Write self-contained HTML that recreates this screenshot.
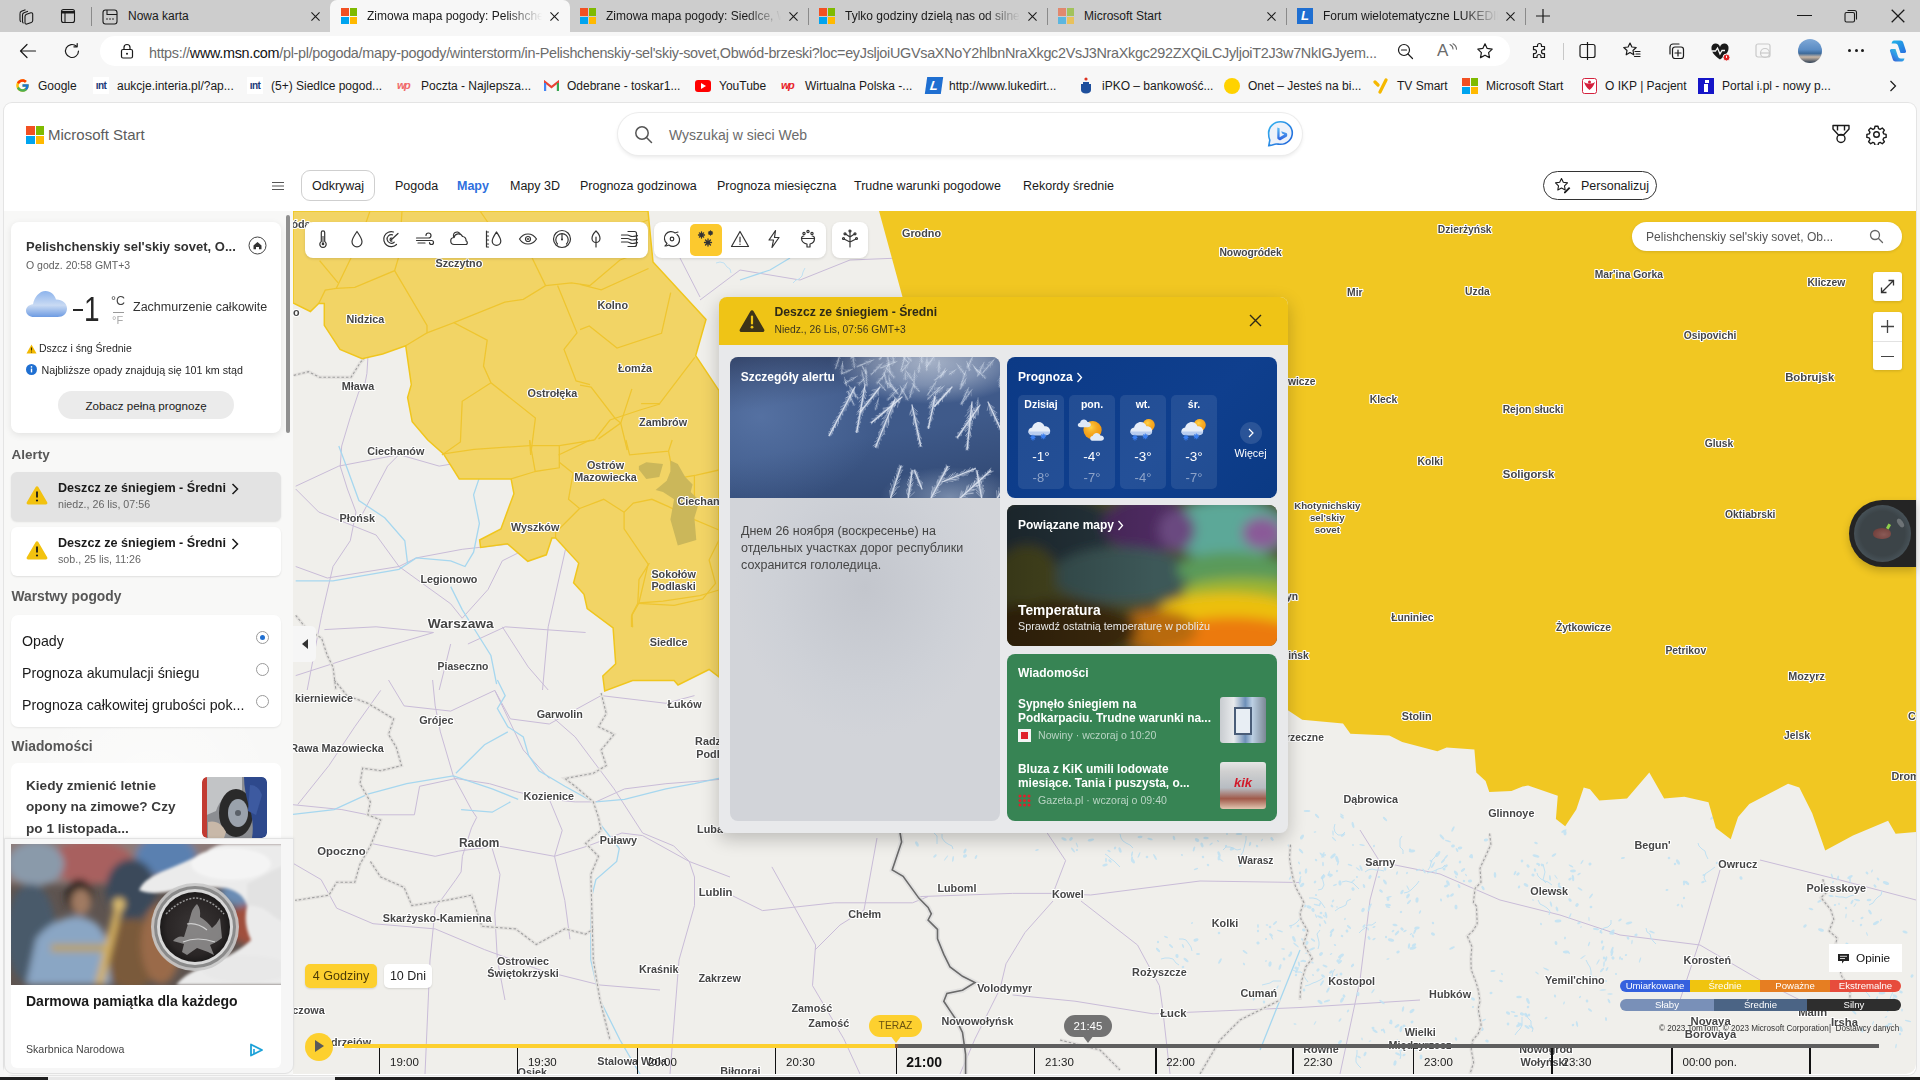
<!DOCTYPE html>
<html><head><meta charset="utf-8">
<style>
*{box-sizing:border-box;margin:0;padding:0}
html,body{width:1920px;height:1080px;overflow:hidden;background:#f7f7f7;font-family:"Liberation Sans",sans-serif;color:#1a1a1a}
.a{position:absolute;white-space:nowrap}
svg{display:block}
#tabs{position:absolute;left:0;top:0;width:1920px;height:32px;background:#cdcdcd}
.tab{position:absolute;white-space:nowrap;top:0;height:32px;font-size:12px;line-height:32px;color:#1a1a1a}
.sep{position:absolute;top:8px;width:1px;height:17px;background:#8a8a8a}
.x{position:absolute;top:9px;width:14px;height:14px}
.msl{position:absolute;width:16px;height:16px}
.msl i{position:absolute;width:7.5px;height:7.5px}
#bar{position:absolute;left:0;top:32px;width:1920px;height:71px;background:#f7f7f7}
#url{position:absolute;left:100px;top:4px;width:1410px;height:30px;background:#fff;border-radius:15px}
.bm{position:absolute;top:77px;font-size:12.5px;line-height:18px;color:#1a1a1a}
#page{position:absolute;left:4px;top:103px;width:1912px;height:972px;background:#fff;border-radius:8px 8px 8px 8px;overflow:hidden;box-shadow:0 0 0 1px #e4e4e4}
</style></head><body>
<div id="tabs">
<svg class="a" style="left:17px;top:7px" width="19" height="19" viewBox="0 0 19 19" fill="none" stroke="#1a1a1a" stroke-width="1.1"><path d="M3 6.5c0-1 .6-1.8 1.5-2.2l4-1.6"/><path d="M5.5 8c0-1 .6-1.8 1.5-2.2l4-1.6"/><path d="M8 9.5c0-1 .7-1.8 1.6-2.2l4.2-1.5c1-.3 1.9.3 1.9 1.3v6.3c0 .9-.6 1.7-1.4 2l-4.4 1.6c-1 .3-1.9-.3-1.9-1.3z"/><path d="M3 6.5v6.4c0 .8.4 1.5 1 1.9"/><path d="M5.5 8v6.4c0 .8.4 1.5 1 1.9"/></svg>
<svg class="a" style="left:60px;top:8px" width="16" height="16" viewBox="0 0 16 16" fill="none" stroke="#1a1a1a" stroke-width="1.1"><rect x="1.5" y="1.5" width="13" height="13" rx="2"/><path d="M1.5 4.2h13" stroke-width="2.6"/><path d="M5 4v10.5"/></svg>
<div class="sep" style="left:91px;top:7px;height:19px"></div>
<svg class="a" style="left:102px;top:9px" width="16" height="16" viewBox="0 0 16 16" fill="none" stroke="#1a1a1a" stroke-width="1.1"><rect x="1" y="1" width="14" height="14" rx="2.5"/><path d="M5 1v4.5h10"/><circle cx="5" cy="10" r=".8" fill="#1a1a1a" stroke="none"/><circle cx="8" cy="10" r=".8" fill="#1a1a1a" stroke="none"/><circle cx="11" cy="10" r=".8" fill="#1a1a1a" stroke="none"/></svg>
<div class="tab" style="left:128px">Nowa karta</div>
<svg class="a" style="left:311px;top:12px" width="9" height="9" viewBox="0 0 10 10"><path d="M0.5 0.5L9.5 9.5M9.5 0.5L0.5 9.5" stroke="#1a1a1a" stroke-width="1.2"/></svg>
<div class="a" style="left:330px;top:0;width:240px;height:33px;background:#f7f7f7;border-radius:7px 7px 0 0"></div>
<div class="msl" style="left:341px;top:8px;width:16px;height:16px;opacity:1"><i style="left:0;top:0;width:7.5px;height:7.5px;background:#f25022"></i><i style="left:8.5px;top:0;width:7.5px;height:7.5px;background:#7fba00"></i><i style="left:0;top:8.5px;width:7.5px;height:7.5px;background:#00a4ef"></i><i style="left:8.5px;top:8.5px;width:7.5px;height:7.5px;background:#ffb900"></i></div>
<div class="tab" style="left:367px;width:175px;overflow:hidden;-webkit-mask-image:linear-gradient(90deg,#000 80%,transparent)">Zimowa mapa pogody: Pelishchenskiy</div>
<svg class="a" style="left:550px;top:12px" width="9" height="9" viewBox="0 0 10 10"><path d="M0.5 0.5L9.5 9.5M9.5 0.5L0.5 9.5" stroke="#1a1a1a" stroke-width="1.2"/></svg>
<div class="msl" style="left:580px;top:8px;width:16px;height:16px;opacity:1"><i style="left:0;top:0;width:7.5px;height:7.5px;background:#f25022"></i><i style="left:8.5px;top:0;width:7.5px;height:7.5px;background:#7fba00"></i><i style="left:0;top:8.5px;width:7.5px;height:7.5px;background:#00a4ef"></i><i style="left:8.5px;top:8.5px;width:7.5px;height:7.5px;background:#ffb900"></i></div>
<div class="tab" style="left:606px;width:175px;overflow:hidden;-webkit-mask-image:linear-gradient(90deg,#000 80%,transparent)">Zimowa mapa pogody: Siedlce, Woj</div>
<svg class="a" style="left:789px;top:12px" width="9" height="9" viewBox="0 0 10 10"><path d="M0.5 0.5L9.5 9.5M9.5 0.5L0.5 9.5" stroke="#1a1a1a" stroke-width="1.2"/></svg>
<div class="sep" style="left:808px"></div>
<div class="msl" style="left:819px;top:8px;width:16px;height:16px;opacity:1"><i style="left:0;top:0;width:7.5px;height:7.5px;background:#f25022"></i><i style="left:8.5px;top:0;width:7.5px;height:7.5px;background:#7fba00"></i><i style="left:0;top:8.5px;width:7.5px;height:7.5px;background:#00a4ef"></i><i style="left:8.5px;top:8.5px;width:7.5px;height:7.5px;background:#ffb900"></i></div>
<div class="tab" style="left:845px;width:175px;overflow:hidden;-webkit-mask-image:linear-gradient(90deg,#000 80%,transparent)">Tylko godziny dzielą nas od silnej</div>
<svg class="a" style="left:1028px;top:12px" width="9" height="9" viewBox="0 0 10 10"><path d="M0.5 0.5L9.5 9.5M9.5 0.5L0.5 9.5" stroke="#1a1a1a" stroke-width="1.2"/></svg>
<div class="sep" style="left:1047px"></div>
<div class="msl" style="left:1058px;top:8px;width:16px;height:16px;opacity:0.55"><i style="left:0;top:0;width:7.5px;height:7.5px;background:#f25022"></i><i style="left:8.5px;top:0;width:7.5px;height:7.5px;background:#7fba00"></i><i style="left:0;top:8.5px;width:7.5px;height:7.5px;background:#00a4ef"></i><i style="left:8.5px;top:8.5px;width:7.5px;height:7.5px;background:#ffb900"></i></div>
<div class="tab" style="left:1084px">Microsoft Start</div>
<svg class="a" style="left:1267px;top:12px" width="9" height="9" viewBox="0 0 10 10"><path d="M0.5 0.5L9.5 9.5M9.5 0.5L0.5 9.5" stroke="#1a1a1a" stroke-width="1.2"/></svg>
<div class="sep" style="left:1286px"></div>
<div class="a" style="left:1297px;top:8px;width:16px;height:16px;background:#1f6fd1;color:#fff;font:bold italic 13px/16px 'Liberation Sans';text-align:center">L</div>
<div class="tab" style="left:1323px;width:175px;overflow:hidden;-webkit-mask-image:linear-gradient(90deg,#000 80%,transparent)">Forum wielotematyczne LUKEDIR</div>
<svg class="a" style="left:1506px;top:12px" width="9" height="9" viewBox="0 0 10 10"><path d="M0.5 0.5L9.5 9.5M9.5 0.5L0.5 9.5" stroke="#1a1a1a" stroke-width="1.2"/></svg>
<div class="sep" style="left:1525px"></div>
<svg class="a" style="left:1535px;top:8px" width="16" height="16" viewBox="0 0 16 16"><path d="M8 1v14M1 8h14" stroke="#1a1a1a" stroke-width="1.2"/></svg>
<div class="a" style="left:1797px;top:15px;width:15px;height:1.2px;background:#1a1a1a"></div>
<svg class="a" style="left:1844px;top:9px" width="14" height="14" viewBox="0 0 14 14" fill="none" stroke="#1a1a1a" stroke-width="1.1"><rect x="1" y="3.5" width="9.5" height="9.5" rx="1.5"/><path d="M3.5 1.5h7a2 2 0 0 1 2 2v7"/></svg>
<svg class="a" style="left:1891px;top:9px" width="14" height="14" viewBox="0 0 10 10"><path d="M0.5 0.5L9.5 9.5M9.5 0.5L0.5 9.5" stroke="#1a1a1a" stroke-width="0.9"/></svg>
</div>
<div id="bar">
<svg class="a" style="left:19px;top:10px" width="18" height="18" viewBox="0 0 18 18"><path d="M16.5 9H1.5M8 2.5L1.5 9L8 15.5" stroke="#1a1a1a" stroke-width="1.2" fill="none" stroke-linecap="round" stroke-linejoin="round"/></svg>
<svg class="a" style="left:63px;top:10px" width="18" height="18" viewBox="0 0 18 18"><path d="M15.5 9a6.5 6.5 0 1 1-2-4.7" stroke="#1a1a1a" stroke-width="1.2" fill="none" stroke-linecap="round" stroke-linejoin="round"/><path d="M14.2 1.5v3.3h-3.3" stroke="#1a1a1a" stroke-width="1.2" fill="none" stroke-linecap="round" stroke-linejoin="round"/></svg>
<div id="url">
<svg class="a" style="left:20px;top:7px" width="14" height="16" viewBox="0 0 14 16"><rect x="1.5" y="6.5" width="11" height="8.5" rx="1.5" stroke="#1a1a1a" stroke-width="1.2" fill="none" stroke-linecap="round" stroke-linejoin="round"/><path d="M4 6.5V4.5a3 3 0 0 1 6 0v2" stroke="#1a1a1a" stroke-width="1.2" fill="none" stroke-linecap="round" stroke-linejoin="round"/><circle cx="7" cy="10.8" r="1" fill="#1a1a1a"/></svg>
<div class="a" style="left:49px;top:1.5px;height:30px;line-height:30px;font-size:14.4px;letter-spacing:-0.3px;color:#6b6b6b">https://<span style="color:#111">www.msn.com</span>/pl-pl/pogoda/mapy-pogody/winterstorm/in-Pelishchenskiy-sel'skiy-sovet,Obwód-brzeski?loc=eyJsljoiUGVsaXNoY2hlbnNraXkgc2VsJ3NraXkgc292ZXQiLCJyljoiT2J3w7NkIGJyem...</div>
<svg class="a" style="left:1297px;top:7px" width="17" height="17" viewBox="0 0 17 17"><circle cx="7" cy="7" r="5.5" stroke="#1a1a1a" stroke-width="1.2" fill="none" stroke-linecap="round" stroke-linejoin="round" stroke="#6b6b6b"/><path d="M4.5 7h5M11 11l4.5 4.5" stroke="#1a1a1a" stroke-width="1.2" fill="none" stroke-linecap="round" stroke-linejoin="round" stroke="#6b6b6b"/></svg>
<div class="a" style="left:1337px;top:5px;font-size:17px;line-height:20px;color:#6b6b6b">A</div>
<svg class="a" style="left:1349px;top:7px" width="9" height="10" viewBox="0 0 9 10"><path d="M1 1.5c2 1 3 2.5 3 4.5M4 0.8c2.2 1.3 3.5 3 3.5 5.5" stroke="#6b6b6b" stroke-width="1.1" fill="none" stroke-linecap="round"/></svg>
<svg class="a" style="left:1376px;top:6px" width="18" height="18" viewBox="0 0 18 18"><path d="M9 1.8l2.2 4.6 5 .7-3.6 3.5.9 5-4.5-2.4-4.5 2.4.9-5L1.8 7.1l5-.7z" stroke="#1a1a1a" stroke-width="1.2" fill="none" stroke-linecap="round" stroke-linejoin="round" stroke="#555"/></svg>
</div>
<svg class="a" style="left:1530px;top:10px" width="19" height="19" viewBox="0 0 19 19"><path d="M7.5 3.5a2 2 0 0 1 4 0v1h3v3.2h-1a2 2 0 0 0 0 4h1v3.8h-3.5v-1a2 2 0 0 0-4 0v1H3.5v-3.8h1a2 2 0 0 0 0-4h-1V4.5h4z" stroke="#1a1a1a" stroke-width="1.2" fill="none" stroke-linecap="round" stroke-linejoin="round" stroke-width="1.3"/></svg>
<div class="a" style="left:1563px;top:11px;width:1px;height:17px;background:#c8c8c8"></div>
<svg class="a" style="left:1579px;top:10px" width="17" height="18" viewBox="0 0 17 18"><rect x="1" y="2.5" width="15" height="13" rx="2" stroke="#1a1a1a" stroke-width="1.2" fill="none" stroke-linecap="round" stroke-linejoin="round"/><path d="M8.5 0.5v17" stroke="#1a1a1a" stroke-width="1.2" fill="none" stroke-linecap="round" stroke-linejoin="round"/></svg>
<svg class="a" style="left:1622px;top:9px" width="20" height="20" viewBox="0 0 20 20"><path d="M8 2l1.9 4 4.3.5-3.2 3 .8 4.3L8 11.6l-3.8 2.2.8-4.3-3.2-3 4.3-.5z" stroke="#1a1a1a" stroke-width="1.2" fill="none" stroke-linecap="round" stroke-linejoin="round"/><path d="M13 10.5h5M14 13h4M12.5 15.5h5.5" stroke="#1a1a1a" stroke-width="1.2" fill="none" stroke-linecap="round" stroke-linejoin="round"/></svg>
<svg class="a" style="left:1667px;top:10px" width="19" height="19" viewBox="0 0 19 19"><path d="M3 12V5a3 3 0 0 1 3-3h6" stroke="#1a1a1a" stroke-width="1.2" fill="none" stroke-linecap="round" stroke-linejoin="round"/><rect x="5.5" y="5" width="11" height="11.5" rx="2.5" stroke="#1a1a1a" stroke-width="1.2" fill="none" stroke-linecap="round" stroke-linejoin="round"/><path d="M11 8v6M8 11h6" stroke="#1a1a1a" stroke-width="1.2" fill="none" stroke-linecap="round" stroke-linejoin="round"/></svg>
<svg class="a" style="left:1710px;top:10px" width="22" height="20" viewBox="0 0 22 20"><path d="M10 17.5C4 13 1.5 10 1.5 6.5a4.2 4.2 0 0 1 8.5-1.5a4.2 4.2 0 0 1 8.5 1.5c0 3.5-2.5 6.5-8.5 11z" fill="#1a1a1a"/><path d="M1.5 9h4l2-3 2.5 6 2-3.5h3" stroke="#f7f7f7" stroke-width="1.3" fill="none"/><circle cx="16.5" cy="15.5" r="3.5" fill="#e02020" stroke="#f7f7f7" stroke-width="1"/><path d="M16.5 13.7v2.2" stroke="#fff" stroke-width="1"/></svg>
<svg class="a" style="left:1755px;top:11px" width="18" height="17" viewBox="0 0 18 17" fill="none" stroke="#c9c9c9" stroke-width="1.2"><rect x="1" y="1" width="14" height="13" rx="2"/><circle cx="10" cy="10" r="4.5"/><path d="M5.5 10h9"/></svg>
<div class="a" style="left:1798px;top:7px;width:24px;height:24px;border-radius:50%;background:linear-gradient(180deg,#7fa8d6 0%,#5b8cc4 45%,#3d6a9a 60%,#c8b6a6 75%,#2d3f55 100%)"></div>
<div class="a" style="left:1847px;top:17px;width:18px;height:4px"><i style="position:absolute;left:1px;top:0;width:3px;height:3px;border-radius:50%;background:#1a1a1a"></i><i style="position:absolute;left:7.5px;top:0;width:3px;height:3px;border-radius:50%;background:#1a1a1a"></i><i style="position:absolute;left:14px;top:0;width:3px;height:3px;border-radius:50%;background:#1a1a1a"></i></div>
<svg class="a" style="left:1885px;top:6px" width="26" height="26" viewBox="0 0 26 26"><defs><linearGradient id="cp1" x1="0" y1="0" x2="1" y2="1"><stop offset="0" stop-color="#1fb6e8"/><stop offset="1" stop-color="#2a6fe0"/></linearGradient><linearGradient id="cp2" x1="1" y1="0" x2="0" y2="1"><stop offset="0" stop-color="#4bd6b0"/><stop offset=".5" stop-color="#2fa0e8"/><stop offset="1" stop-color="#3a4fd0"/></linearGradient></defs><path d="M9 2.5h6.5c1.4 0 2.3.8 2.7 2L21 13c.3 1-.4 2-1.5 2h-4l-2.5-7.5c-.4-1.2-1.4-2-2.7-2H6.5C7 3.7 7.8 2.5 9 2.5z" fill="url(#cp1)"/><path d="M17 23.5h-6.5c-1.4 0-2.3-.8-2.7-2L5 13c-.3-1 .4-2 1.5-2h4l2.5 7.5c.4 1.2 1.4 2 2.7 2h3.8c-.5 1.8-1.3 3-2.5 3z" fill="url(#cp2)"/></svg>
</div>
<svg class="a" style="left:15px;top:78px" width="15" height="15" viewBox="0 0 48 48"><path fill="#FFC107" d="M43.6 20H24v8h11.3C33.7 32.7 29.3 36 24 36c-6.6 0-12-5.4-12-12s5.4-12 12-12c3.1 0 5.8 1.2 7.9 3l5.7-5.7C34 6 29.3 4 24 4 13 4 4 13 4 24s9 20 20 20 20-9 20-20c0-1.3-.1-2.7-.4-4z"/><path fill="#FF3D00" d="M6.3 14.7l6.6 4.8C14.7 15.1 19 12 24 12c3.1 0 5.8 1.2 7.9 3l5.7-5.7C34 6 29.3 4 24 4 16.3 4 9.7 8.3 6.3 14.7z"/><path fill="#4CAF50" d="M24 44c5.2 0 9.9-2 13.4-5.2l-6.2-5.2C29.2 35.1 26.7 36 24 36c-5.2 0-9.6-3.3-11.3-8l-6.5 5C9.5 39.6 16.2 44 24 44z"/><path fill="#1976D2" d="M43.6 20H24v8h11.3c-.8 2.2-2.2 4.2-4.1 5.6l6.2 5.2C37 39.2 44 34 44 24c0-1.3-.1-2.7-.4-4z"/></svg><div class="a" style="left:38px;top:70px;height:33px;line-height:33px;font-size:12px;color:#1a1a1a">Google</div>
<div class="a" style="left:93px;top:77px;width:16px;height:17px;background:#fff;color:#1b3a7a;font:bold 10px/17px 'Liberation Sans';text-align:center;letter-spacing:-0.5px">ınt</div><div class="a" style="left:117px;top:70px;height:33px;line-height:33px;font-size:12px;color:#1a1a1a">aukcje.interia.pl/?ap...</div>
<div class="a" style="left:247px;top:77px;width:16px;height:17px;background:#fff;color:#1b3a7a;font:bold 10px/17px 'Liberation Sans';text-align:center;letter-spacing:-0.5px">ınt</div><div class="a" style="left:271px;top:70px;height:33px;line-height:33px;font-size:12px;color:#1a1a1a">(5+) Siedlce pogod...</div>
<div class="a" style="left:397px;top:77px;width:17px;height:17px;color:#f06a6a;font:bold italic 11px/17px 'Liberation Sans';letter-spacing:-1.5px">wp</div><div class="a" style="left:421px;top:70px;height:33px;line-height:33px;font-size:12px;color:#1a1a1a">Poczta - Najlepsza...</div>
<svg class="a" style="left:544px;top:80px" width="15" height="12" viewBox="0 0 15 12"><path d="M1 11V2l6.5 5L14 2v9" fill="none" stroke="#ea4335" stroke-width="2.2"/><path d="M1 11V3" stroke="#4285f4" stroke-width="2.2"/><path d="M14 11V3" stroke="#34a853" stroke-width="2.2"/></svg><div class="a" style="left:567px;top:70px;height:33px;line-height:33px;font-size:12px;color:#1a1a1a">Odebrane - toskar1...</div>
<div class="a" style="left:695px;top:80px;width:16px;height:12px;border-radius:3px;background:#f00"><i style="position:absolute;left:6px;top:3px;border-left:5px solid #fff;border-top:3px solid transparent;border-bottom:3px solid transparent"></i></div><div class="a" style="left:719px;top:70px;height:33px;line-height:33px;font-size:12px;color:#1a1a1a">YouTube</div>
<div class="a" style="left:781px;top:77px;width:17px;height:17px;color:#e8232a;font:bold italic 11px/17px 'Liberation Sans';letter-spacing:-1.5px">wp</div><div class="a" style="left:805px;top:70px;height:33px;line-height:33px;font-size:12px;color:#1a1a1a">Wirtualna Polska -...</div>
<div class="a" style="left:926px;top:77px;width:16px;height:17px;background:#1f6fd1;color:#fff;font:bold italic 13px/17px 'Liberation Sans';text-align:center;transform:skewX(-8deg)">L</div><div class="a" style="left:949px;top:70px;height:33px;line-height:33px;font-size:12px;color:#1a1a1a">http://www.lukedirt...</div>
<svg class="a" style="left:1079px;top:77px" width="14" height="17" viewBox="0 0 14 17"><circle cx="7" cy="2" r="1.6" fill="#d32"/><path d="M2 7h10v6c0 2-2 3.5-5 3.5S2 15 2 13z" fill="#1e4f9c"/><path d="M4 5h6v2H4z" fill="#1e4f9c"/></svg><div class="a" style="left:1102px;top:70px;height:33px;line-height:33px;font-size:12px;color:#1a1a1a">iPKO – bankowość...</div>
<div class="a" style="left:1224px;top:78px;width:16px;height:16px;border-radius:50%;background:#ffd200"></div><div class="a" style="left:1248px;top:70px;height:33px;line-height:33px;font-size:12px;color:#1a1a1a">Onet – Jesteś na bi...</div>
<svg class="a" style="left:1372px;top:78px" width="17" height="16" viewBox="0 0 17 16"><path d="M3 4l3 3M14 2L8 14" stroke="#f5b800" stroke-width="3.2" stroke-linecap="round"/></svg><div class="a" style="left:1397px;top:70px;height:33px;line-height:33px;font-size:12px;color:#1a1a1a">TV Smart</div>
<div class="msl" style="left:1462px;top:78px"><i style="left:0;top:0;background:#f25022"></i><i style="left:8.5px;top:0;background:#7fba00"></i><i style="left:0;top:8.5px;background:#00a4ef"></i><i style="left:8.5px;top:8.5px;background:#ffb900"></i></div><div class="a" style="left:1486px;top:70px;height:33px;line-height:33px;font-size:12px;color:#1a1a1a">Microsoft Start</div>
<svg class="a" style="left:1582px;top:78px" width="15" height="16" viewBox="0 0 15 16"><rect x="0.5" y="0.5" width="14" height="15" rx="2" fill="#fff" stroke="#d4213d"/><path d="M2 4c1 3 2 5 5.5 8C11 9 12 7 13 4c-1.5 1-3 1.5-5.5 1.5S3.5 5 2 4z" fill="#d4213d"/><circle cx="7.5" cy="4" r="1.5" fill="#d4213d"/></svg><div class="a" style="left:1605px;top:70px;height:33px;line-height:33px;font-size:12px;color:#1a1a1a">O IKP | Pacjent</div>
<div class="a" style="left:1698px;top:78px;width:16px;height:16px;background:#1515c8"><i style="position:absolute;left:6px;top:6px;width:4px;height:8px;background:#fff"></i><i style="position:absolute;left:7px;top:2px;width:4px;height:3px;background:#fff"></i></div><div class="a" style="left:1722px;top:70px;height:33px;line-height:33px;font-size:12px;color:#1a1a1a">Portal i.pl - nowy p...</div>
<svg class="a" style="left:1888px;top:80px" width="10" height="12" viewBox="0 0 10 12"><path d="M2.5 1l5 5-5 5" stroke="#1a1a1a" stroke-width="1.2" fill="none"/></svg>
<div id="page">
</div>
<div class="msl" style="left:26px;top:126px;width:18px;height:18px"><i style="left:0;top:0;width:8.5px;height:8.5px;background:#f25022"></i><i style="left:9.5px;top:0;width:8.5px;height:8.5px;background:#7fba00"></i><i style="left:0;top:9.5px;width:8.5px;height:8.5px;background:#00a4ef"></i><i style="left:9.5px;top:9.5px;width:8.5px;height:8.5px;background:#ffb900"></i></div>
<div class="a" style="left:48px;top:125px;font-size:15px;line-height:20px;color:#5c5c5c">Microsoft Start</div>
<div class="a" style="left:618px;top:113px;width:684px;height:42px;border-radius:21px;background:#fff;box-shadow:0 0 0 1px #ececec,0 2px 4px rgba(0,0,0,.10)"></div>
<svg class="a" style="left:634px;top:125px" width="19" height="19" viewBox="0 0 19 19"><circle cx="8" cy="8" r="6.2" stroke="#555" stroke-width="1.5" fill="none"/><path d="M12.5 12.5l5 5" stroke="#555" stroke-width="1.5" stroke-linecap="round"/></svg>
<div class="a" style="left:669px;top:125px;font-size:14px;line-height:20px;color:#6b6b6b">Wyszukaj w sieci Web</div>
<svg class="a" style="left:1266px;top:120px" width="28" height="29" viewBox="0 0 28 29"><defs><linearGradient id="bg1" x1="0" y1="0" x2="1" y2="1"><stop offset="0" stop-color="#36b5f0"/><stop offset="1" stop-color="#1f5fd8"/></linearGradient><linearGradient id="bg2" x1="0" y1="0" x2="0" y2="1"><stop offset="0" stop-color="#5fc0f5"/><stop offset="1" stop-color="#2c5fe0"/></linearGradient></defs><path d="M14.5 1.8c6.6 0 11.8 5 11.8 11.2s-5.2 11.3-11.8 11.3c-1.8 0-3-.4-4.4-.3-2 .1-4 1.2-7.3 1.6l1-5.5C2.6 18 2.6 15.6 2.6 13 2.6 6.8 7.9 1.8 14.5 1.8z" fill="#eef2fa" stroke="url(#bg1)" stroke-width="1.6"/><path d="M11.3 7.5l2.3.8v9l4.7-2.7-2.2-1 -.9-2.3 5.2 1.8c.5.2.8.6.8 1.1v1.4c0 .5-.3.9-.7 1.1l-5.7 3.3c-.5.3-1.1.3-1.6 0l-1.2-.8c-.4-.3-.7-.8-.7-1.3z" fill="url(#bg2)"/></svg>
<svg class="a" style="left:1831px;top:124px" width="20" height="20" viewBox="0 0 20 20" fill="none" stroke="#1a1a1a" stroke-width="1.4" stroke-linejoin="round"><path d="M2 1.5h16v3.5l-5.5 6h-5L2 5z"/><path d="M6.5 1.5v5M13.5 1.5v5"/><circle cx="10" cy="14.5" r="4"/></svg>
<svg class="a" style="left:1866px;top:124px" width="21" height="21" viewBox="0 0 24 24" fill="none" stroke="#1a1a1a" stroke-width="1.6"><circle cx="12" cy="12" r="3.2"/><path d="M10.3 2.5h3.4l.6 2.7 1.9.9 2.4-1.5 2.4 2.4-1.5 2.4.8 1.9 2.7.6v3.4l-2.7.6-.8 1.9 1.5 2.4-2.4 2.4-2.4-1.5-1.9.8-.6 2.7h-3.4l-.6-2.7-1.9-.8-2.4 1.5-2.4-2.4 1.5-2.4-.8-1.9-2.7-.6v-3.4l2.7-.6.8-1.9-1.5-2.4 2.4-2.4 2.4 1.5 1.9-.9z" stroke-linejoin="round"/></svg>
<svg class="a" style="left:271px;top:181px" width="14" height="10" viewBox="0 0 14 10"><path d="M1 1.5h12M1 5h12M1 8.5h12" stroke="#555" stroke-width="1"/></svg>
<div class="a" style="left:301px;top:170px;width:74px;height:31px;border:1px solid #cfcfcf;border-radius:9px"></div>
<div class="a" style="left:312px;top:177px;font-size:12.5px;line-height:18px;color:#1a1a1a;font-weight:400">Odkrywaj</div>
<div class="a" style="left:395px;top:177px;font-size:12.5px;line-height:18px;color:#1a1a1a;font-weight:400">Pogoda</div>
<div class="a" style="left:457px;top:177px;font-size:12.5px;line-height:18px;color:#2f6fde;font-weight:700">Mapy</div>
<div class="a" style="left:510px;top:177px;font-size:12.5px;line-height:18px;color:#1a1a1a;font-weight:400">Mapy 3D</div>
<div class="a" style="left:580px;top:177px;font-size:12.5px;line-height:18px;color:#1a1a1a;font-weight:400">Prognoza godzinowa</div>
<div class="a" style="left:717px;top:177px;font-size:12.5px;line-height:18px;color:#1a1a1a;font-weight:400">Prognoza miesięczna</div>
<div class="a" style="left:854px;top:177px;font-size:12.5px;line-height:18px;color:#1a1a1a;font-weight:400">Trudne warunki pogodowe</div>
<div class="a" style="left:1023px;top:177px;font-size:12.5px;line-height:18px;color:#1a1a1a;font-weight:400">Rekordy średnie</div>
<div class="a" style="left:1543px;top:171px;width:114px;height:29px;border:1px solid #333;border-radius:15px"></div>
<svg class="a" style="left:1554px;top:177px" width="17" height="17" viewBox="0 0 17 17"><path d="M7.5 1.5l1.8 3.8 4.2.6-3 3 .7 4.1-3.7-2-3.7 2 .7-4.1-3-3 4.2-.6z" fill="none" stroke="#1a1a1a" stroke-width="1.1" stroke-linejoin="round"/><path d="M10 15l5-5 1.3 1.3-5 5H10z" fill="#1a1a1a"/></svg>
<div class="a" style="left:1581px;top:177px;font-size:12.5px;line-height:18px;color:#1a1a1a">Personalizuj</div>
<div class="a" style="left:293px;top:211px;width:1623px;height:863px;overflow:hidden;border-radius:0 0 10px 0;background:#f0efeb">
<svg width="1623" height="863" viewBox="293 211 1623 863" style="position:absolute;left:0;top:0">
<g id="roads" fill="none" stroke="#c9bcd8" stroke-width="1"><path d="M432.6 680.0 L435.2 705.9 L440.4 731.9 L453.3 775.9 L471.5 809.6 L476.7 817.4 L471.5 827.8 L462.4 856.3 L461.1 871.9 L455.9 879.6 L435.2 908.2 L430.0 960.0 L425.0 1074.0"/><path d="M370.4 843.3 L435.2 856.3 L458.5 851.1 L497.4 845.9 L554.5 856.3 L588.2 845.9 L621.9 833.0 L642.6 835.6 L689.3 861.5 L730.0 877.0"/><path d="M455.9 778.5 L489.6 783.7 L515.6 791.5 L549.3 799.3 L575.2 801.9 L595.9 801.9 L624.5 788.9 L665.9 783.7 L699.6 781.1 L730.0 778.5"/><path d="M494.8 690.4 L523.3 750.0 L549.3 778.5"/><path d="M554.5 718.9 L575.2 737.0 L614.1 788.9 L642.6 833.0 L673.7 845.9 L689.3 861.5 L694.5 877.0 L694.5 905.6 L679.0 960.0 L670.0 1074.0"/><path d="M494.8 690.4 L510.4 718.9 L549.3 724.0 L601.1 695.6 L666.0 703.3 L694.5 695.6"/><path d="M380.7 690.4 L354.8 726.7 L328.9 765.6 L297.8 804.4"/><path d="M290.0 804.4 L341.9 809.6 L367.8 814.8 L414.4 814.8 L419.6 786.3 L455.9 778.5"/><path d="M290.0 861.5 L321.1 879.6 L336.7 908.2 L373.0 923.7 L435.2 928.9 L484.5 949.6 L540.0 970.0 L600.0 985.0 L660.0 990.0"/><path d="M388.5 680.0 L404.1 705.9 L450.7 711.1 L494.8 690.4"/><path d="M549.3 799.3 L562.2 830.4 L554.5 856.3 L564.8 900.4 L570.0 939.3"/><path d="M492.2 848.5 L500.0 874.5 L494.8 913.3 L497.4 960.0 L505.0 1000.0"/><path d="M366.9 373.5 L364.1 388.3 L358.9 391.5 L350.3 417.3 L341.7 446.0 L340.2 466.1 L347.4 489.0 L356.0 512.0 L350.3 540.7 L333.0 566.5 L321.6 615.3 L307.2 690.0"/><path d="M295.7 486.2 L338.8 466.1 L399.0 454.6 L439.2 466.1 L456.4 463.2"/><path d="M295.7 489.0 L318.7 512.0 L376.1 535.0 L399.0 566.5 L450.7 603.8 L462.2 618.2"/><path d="M358.9 520.6 L387.6 466.1 L399.0 454.6"/><path d="M295.7 566.5 L327.3 578.0 L399.0 566.5 L416.3 557.9 L462.2 549.3 L513.8 543.6"/><path d="M462.2 618.2 L488.0 589.5 L502.3 560.8 L519.6 552.2"/><path d="M467.9 644.0 L505.2 626.8 L585.6 632.5"/><path d="M433.5 632.5 L376.1 649.7 L295.7 675.6"/><path d="M324.4 629.6 L376.1 626.8 L433.5 632.5"/><path d="M450.7 644.0 L439.2 690.0"/><path d="M502.3 626.8 L528.2 666.9 L548.2 690.0"/><path d="M565.5 549.3 L548.2 626.8 L542.5 690.0"/><path d="M366.9 373.5 L369.0 340.0 L375.0 315.0 L380.0 290.0"/><path d="M918.8 896.6 L1012.5 893.4 L1053.0 893.4 L1090.6 895.0 L1200.0 881.0 L1300.0 882.5"/><path d="M731.0 895.0 L762.5 910.6 L834.4 902.8 L912.5 902.8 L928.0 896.6"/><path d="M1053.0 893.4 L1065.6 860.6 L1046.9 832.5"/><path d="M1053.0 901.0 L1025.0 932.5 L1006.0 963.8 L1000.0 988.8 L975.0 1038.8 L960.0 1074.0"/><path d="M1081.0 901.0 L1137.5 945.0 L1159.4 985.6 L1162.5 1007.5 L1170.0 1074.0"/><path d="M1012.5 995.0 L1075.0 1001.2 L1153.0 1013.8 L1300.0 1007.5 L1420.0 1000.0"/><path d="M771.9 866.9 L815.6 945.0 L812.5 985.6 L843.8 1038.8 L860.0 1074.0"/><path d="M877.0 838.0 L864.0 910.0 L840.0 925.0 L815.0 950.0"/><path d="M1360.0 830.0 L1380.0 862.0 L1370.0 900.0 L1360.0 980.0 L1340.0 1074.0"/><path d="M1380.0 862.0 L1440.0 874.0 L1500.0 900.0 L1560.0 915.0 L1620.0 935.0 L1700.0 945.0 L1760.0 980.0 L1800.0 1000.0"/><path d="M1720.0 870.0 L1700.0 940.0 L1680.0 1000.0"/><path d="M1760.0 860.0 L1840.0 880.0 L1916.0 900.0"/><path d="M700.0 300.0 L740.0 270.0 L800.0 280.0 L850.0 260.0 L900.0 258.0"/><path d="M680.0 258.0 L700.0 297.0"/></g><g fill="#c2e2f3" opacity=".9"><ellipse cx="1349" cy="927" rx="2.6" ry="1.1" transform="rotate(39 1349 927)"/><ellipse cx="1342" cy="817" rx="2.3" ry="1.1" transform="rotate(42 1342 817)"/><ellipse cx="1353" cy="881" rx="2.5" ry="0.7" transform="rotate(143 1353 881)"/><ellipse cx="1332" cy="906" rx="1.1" ry="1.6" transform="rotate(133 1332 906)"/><ellipse cx="1353" cy="845" rx="1.1" ry="0.9" transform="rotate(90 1353 845)"/><ellipse cx="1374" cy="939" rx="1.9" ry="0.8" transform="rotate(147 1374 939)"/><ellipse cx="1369" cy="938" rx="2.1" ry="1.2" transform="rotate(62 1369 938)"/><ellipse cx="1315" cy="882" rx="1.1" ry="1.5" transform="rotate(42 1315 882)"/><ellipse cx="1333" cy="856" rx="3.4" ry="1.5" transform="rotate(136 1333 856)"/><ellipse cx="1333" cy="833" rx="2.8" ry="0.7" transform="rotate(86 1333 833)"/><ellipse cx="1337" cy="859" rx="3.3" ry="1.5" transform="rotate(74 1337 859)"/><ellipse cx="1313" cy="910" rx="2.0" ry="1.6" transform="rotate(70 1313 910)"/><ellipse cx="1340" cy="883" rx="2.8" ry="1.6" transform="rotate(89 1340 883)"/><ellipse cx="1300" cy="882" rx="2.9" ry="0.8" transform="rotate(110 1300 882)"/><ellipse cx="1299" cy="863" rx="1.5" ry="0.8" transform="rotate(63 1299 863)"/><ellipse cx="1350" cy="865" rx="2.5" ry="0.9" transform="rotate(19 1350 865)"/><ellipse cx="1370" cy="906" rx="2.9" ry="1.0" transform="rotate(123 1370 906)"/><ellipse cx="1307" cy="811" rx="3.4" ry="1.0" transform="rotate(178 1307 811)"/><ellipse cx="1361" cy="868" rx="3.2" ry="1.1" transform="rotate(68 1361 868)"/><ellipse cx="1331" cy="954" rx="1.4" ry="0.7" transform="rotate(145 1331 954)"/><ellipse cx="1334" cy="839" rx="3.1" ry="0.7" transform="rotate(46 1334 839)"/><ellipse cx="1324" cy="916" rx="1.4" ry="0.7" transform="rotate(61 1324 916)"/><ellipse cx="1385" cy="819" rx="2.9" ry="1.1" transform="rotate(45 1385 819)"/><ellipse cx="1358" cy="869" rx="2.8" ry="0.6" transform="rotate(38 1358 869)"/><ellipse cx="1353" cy="825" rx="3.2" ry="1.2" transform="rotate(77 1353 825)"/><ellipse cx="1289" cy="846" rx="1.8" ry="1.1" transform="rotate(50 1289 846)"/><ellipse cx="1330" cy="875" rx="2.7" ry="1.6" transform="rotate(4 1330 875)"/><ellipse cx="1301" cy="851" rx="3.1" ry="1.2" transform="rotate(46 1301 851)"/><ellipse cx="1280" cy="931" rx="3.3" ry="0.7" transform="rotate(17 1280 931)"/><ellipse cx="1335" cy="885" rx="2.1" ry="0.7" transform="rotate(156 1335 885)"/><ellipse cx="1323" cy="864" rx="2.3" ry="0.9" transform="rotate(89 1323 864)"/><ellipse cx="1333" cy="901" rx="1.5" ry="1.0" transform="rotate(128 1333 901)"/><ellipse cx="1323" cy="877" rx="2.8" ry="1.5" transform="rotate(139 1323 877)"/><ellipse cx="1331" cy="876" rx="2.2" ry="0.7" transform="rotate(138 1331 876)"/><ellipse cx="1347" cy="931" rx="1.6" ry="1.3" transform="rotate(56 1347 931)"/><ellipse cx="1353" cy="889" rx="1.8" ry="1.5" transform="rotate(53 1353 889)"/><ellipse cx="1300" cy="879" rx="3.4" ry="0.7" transform="rotate(108 1300 879)"/><ellipse cx="1291" cy="877" rx="3.4" ry="0.9" transform="rotate(126 1291 877)"/><ellipse cx="1300" cy="873" rx="1.2" ry="1.4" transform="rotate(176 1300 873)"/><ellipse cx="1317" cy="905" rx="3.5" ry="0.7" transform="rotate(14 1317 905)"/><ellipse cx="1369" cy="909" rx="2.9" ry="1.0" transform="rotate(112 1369 909)"/><ellipse cx="1364" cy="886" rx="2.1" ry="1.1" transform="rotate(70 1364 886)"/><ellipse cx="1316" cy="895" rx="1.1" ry="1.0" transform="rotate(44 1316 895)"/><ellipse cx="1317" cy="816" rx="2.8" ry="1.1" transform="rotate(43 1317 816)"/><ellipse cx="1309" cy="907" rx="2.6" ry="1.6" transform="rotate(15 1309 907)"/><ellipse cx="1302" cy="885" rx="2.8" ry="1.5" transform="rotate(140 1302 885)"/><ellipse cx="1302" cy="837" rx="2.7" ry="1.5" transform="rotate(126 1302 837)"/><ellipse cx="1323" cy="855" rx="3.3" ry="1.0" transform="rotate(111 1323 855)"/><ellipse cx="1358" cy="797" rx="3.5" ry="0.6" transform="rotate(56 1358 797)"/><ellipse cx="1321" cy="913" rx="1.4" ry="1.2" transform="rotate(14 1321 913)"/><ellipse cx="1311" cy="962" rx="2.9" ry="1.1" transform="rotate(19 1311 962)"/><ellipse cx="1366" cy="865" rx="1.5" ry="0.9" transform="rotate(115 1366 865)"/><ellipse cx="1322" cy="855" rx="3.4" ry="0.9" transform="rotate(46 1322 855)"/><ellipse cx="1338" cy="863" rx="2.7" ry="0.8" transform="rotate(108 1338 863)"/><ellipse cx="1326" cy="915" rx="3.4" ry="1.1" transform="rotate(79 1326 915)"/><ellipse cx="1316" cy="860" rx="1.4" ry="1.0" transform="rotate(49 1316 860)"/><ellipse cx="1353" cy="965" rx="1.1" ry="1.4" transform="rotate(168 1353 965)"/><ellipse cx="1329" cy="873" rx="2.3" ry="0.6" transform="rotate(109 1329 873)"/><ellipse cx="1325" cy="855" rx="1.0" ry="1.1" transform="rotate(17 1325 855)"/><ellipse cx="1320" cy="917" rx="3.2" ry="1.0" transform="rotate(24 1320 917)"/><ellipse cx="1342" cy="815" rx="2.3" ry="0.6" transform="rotate(34 1342 815)"/><ellipse cx="1305" cy="906" rx="1.6" ry="1.4" transform="rotate(152 1305 906)"/><ellipse cx="1374" cy="846" rx="1.0" ry="1.2" transform="rotate(14 1374 846)"/><ellipse cx="1362" cy="845" rx="2.9" ry="0.8" transform="rotate(11 1362 845)"/><ellipse cx="1343" cy="835" rx="2.6" ry="1.1" transform="rotate(144 1343 835)"/><ellipse cx="1320" cy="904" rx="1.9" ry="0.9" transform="rotate(113 1320 904)"/><ellipse cx="1337" cy="871" rx="1.2" ry="1.1" transform="rotate(122 1337 871)"/><ellipse cx="1337" cy="907" rx="1.1" ry="0.6" transform="rotate(89 1337 907)"/><ellipse cx="1315" cy="832" rx="1.4" ry="0.7" transform="rotate(168 1315 832)"/><ellipse cx="1306" cy="871" rx="2.7" ry="1.3" transform="rotate(94 1306 871)"/><ellipse cx="1355" cy="981" rx="1.5" ry="0.6" transform="rotate(63 1355 981)"/><ellipse cx="1291" cy="953" rx="1.4" ry="1.3" transform="rotate(89 1291 953)"/><ellipse cx="1342" cy="1000" rx="3.0" ry="1.5" transform="rotate(122 1342 1000)"/><ellipse cx="1327" cy="1001" rx="3.3" ry="1.1" transform="rotate(164 1327 1001)"/><ellipse cx="1341" cy="956" rx="3.4" ry="1.5" transform="rotate(143 1341 956)"/><ellipse cx="1340" cy="962" rx="2.5" ry="1.2" transform="rotate(136 1340 962)"/><ellipse cx="1312" cy="949" rx="3.3" ry="1.1" transform="rotate(159 1312 949)"/><ellipse cx="1340" cy="1042" rx="2.4" ry="1.4" transform="rotate(133 1340 1042)"/><ellipse cx="1335" cy="945" rx="1.2" ry="1.0" transform="rotate(32 1335 945)"/><ellipse cx="1283" cy="949" rx="1.9" ry="0.7" transform="rotate(5 1283 949)"/><ellipse cx="1296" cy="975" rx="1.1" ry="1.3" transform="rotate(38 1296 975)"/><ellipse cx="1358" cy="994" rx="2.3" ry="1.5" transform="rotate(93 1358 994)"/><ellipse cx="1331" cy="972" rx="2.1" ry="1.2" transform="rotate(139 1331 972)"/><ellipse cx="1320" cy="925" rx="1.6" ry="1.0" transform="rotate(68 1320 925)"/><ellipse cx="1304" cy="961" rx="2.3" ry="1.1" transform="rotate(6 1304 961)"/><ellipse cx="1332" cy="931" rx="3.0" ry="1.3" transform="rotate(132 1332 931)"/><ellipse cx="1340" cy="959" rx="2.0" ry="0.6" transform="rotate(120 1340 959)"/><ellipse cx="1296" cy="945" rx="3.5" ry="0.8" transform="rotate(41 1296 945)"/><ellipse cx="1316" cy="916" rx="2.2" ry="0.7" transform="rotate(67 1316 916)"/><ellipse cx="1331" cy="935" rx="2.2" ry="1.0" transform="rotate(113 1331 935)"/><ellipse cx="1294" cy="939" rx="3.2" ry="1.4" transform="rotate(67 1294 939)"/><ellipse cx="1320" cy="1002" rx="3.0" ry="1.5" transform="rotate(36 1320 1002)"/><ellipse cx="1345" cy="919" rx="1.2" ry="0.9" transform="rotate(114 1345 919)"/><ellipse cx="1344" cy="996" rx="1.7" ry="1.3" transform="rotate(53 1344 996)"/><ellipse cx="1323" cy="976" rx="2.2" ry="1.3" transform="rotate(39 1323 976)"/><ellipse cx="1313" cy="940" rx="2.6" ry="1.0" transform="rotate(35 1313 940)"/><ellipse cx="1325" cy="966" rx="2.7" ry="1.0" transform="rotate(22 1325 966)"/><ellipse cx="1342" cy="936" rx="1.1" ry="1.3" transform="rotate(107 1342 936)"/><ellipse cx="1297" cy="970" rx="3.4" ry="1.0" transform="rotate(115 1297 970)"/><ellipse cx="1307" cy="943" rx="1.9" ry="1.4" transform="rotate(114 1307 943)"/><ellipse cx="1296" cy="968" rx="1.6" ry="1.4" transform="rotate(4 1296 968)"/><ellipse cx="1306" cy="939" rx="1.6" ry="1.2" transform="rotate(105 1306 939)"/><ellipse cx="1341" cy="974" rx="1.4" ry="1.4" transform="rotate(59 1341 974)"/><ellipse cx="1313" cy="975" rx="1.1" ry="0.8" transform="rotate(27 1313 975)"/><ellipse cx="1291" cy="927" rx="1.6" ry="0.7" transform="rotate(96 1291 927)"/><ellipse cx="1336" cy="976" rx="2.9" ry="0.8" transform="rotate(126 1336 976)"/><ellipse cx="1311" cy="958" rx="1.6" ry="1.2" transform="rotate(17 1311 958)"/><ellipse cx="1328" cy="990" rx="3.0" ry="1.1" transform="rotate(119 1328 990)"/><ellipse cx="1338" cy="961" rx="1.8" ry="1.5" transform="rotate(64 1338 961)"/><ellipse cx="1321" cy="954" rx="2.2" ry="1.5" transform="rotate(139 1321 954)"/><ellipse cx="1308" cy="953" rx="3.3" ry="0.7" transform="rotate(174 1308 953)"/><ellipse cx="1325" cy="922" rx="2.3" ry="0.8" transform="rotate(61 1325 922)"/><ellipse cx="1304" cy="930" rx="2.0" ry="1.4" transform="rotate(10 1304 930)"/><ellipse cx="1318" cy="970" rx="1.8" ry="1.4" transform="rotate(136 1318 970)"/><ellipse cx="1331" cy="977" rx="1.3" ry="1.3" transform="rotate(80 1331 977)"/><ellipse cx="1322" cy="983" rx="3.2" ry="1.0" transform="rotate(124 1322 983)"/><ellipse cx="1303" cy="940" rx="2.4" ry="1.0" transform="rotate(36 1303 940)"/><ellipse cx="1302" cy="961" rx="1.8" ry="0.8" transform="rotate(164 1302 961)"/><ellipse cx="1307" cy="967" rx="1.1" ry="0.8" transform="rotate(156 1307 967)"/><ellipse cx="1304" cy="990" rx="1.6" ry="1.3" transform="rotate(81 1304 990)"/><ellipse cx="1397" cy="873" rx="1.9" ry="0.9" transform="rotate(107 1397 873)"/><ellipse cx="1418" cy="870" rx="2.2" ry="0.9" transform="rotate(160 1418 870)"/><ellipse cx="1408" cy="896" rx="2.7" ry="1.4" transform="rotate(122 1408 896)"/><ellipse cx="1448" cy="896" rx="1.6" ry="1.6" transform="rotate(59 1448 896)"/><ellipse cx="1352" cy="966" rx="1.4" ry="1.0" transform="rotate(113 1352 966)"/><ellipse cx="1397" cy="933" rx="3.0" ry="1.2" transform="rotate(134 1397 933)"/><ellipse cx="1412" cy="851" rx="3.2" ry="1.4" transform="rotate(176 1412 851)"/><ellipse cx="1363" cy="910" rx="2.3" ry="1.6" transform="rotate(118 1363 910)"/><ellipse cx="1368" cy="929" rx="1.7" ry="0.7" transform="rotate(70 1368 929)"/><ellipse cx="1401" cy="912" rx="1.2" ry="1.1" transform="rotate(137 1401 912)"/><ellipse cx="1433" cy="923" rx="1.3" ry="1.1" transform="rotate(53 1433 923)"/><ellipse cx="1364" cy="926" rx="2.0" ry="1.0" transform="rotate(131 1364 926)"/><ellipse cx="1417" cy="928" rx="2.8" ry="1.4" transform="rotate(176 1417 928)"/><ellipse cx="1398" cy="952" rx="1.8" ry="1.3" transform="rotate(152 1398 952)"/><ellipse cx="1415" cy="931" rx="3.3" ry="1.0" transform="rotate(114 1415 931)"/><ellipse cx="1408" cy="888" rx="3.0" ry="0.6" transform="rotate(61 1408 888)"/><ellipse cx="1411" cy="934" rx="1.5" ry="0.6" transform="rotate(145 1411 934)"/><ellipse cx="1414" cy="945" rx="2.4" ry="1.4" transform="rotate(152 1414 945)"/><ellipse cx="1389" cy="897" rx="2.9" ry="0.7" transform="rotate(167 1389 897)"/><ellipse cx="1393" cy="931" rx="1.5" ry="1.0" transform="rotate(142 1393 931)"/><ellipse cx="1424" cy="871" rx="2.8" ry="0.8" transform="rotate(58 1424 871)"/><ellipse cx="1391" cy="940" rx="3.2" ry="1.6" transform="rotate(15 1391 940)"/><ellipse cx="1452" cy="895" rx="2.2" ry="1.3" transform="rotate(141 1452 895)"/><ellipse cx="1413" cy="948" rx="3.5" ry="1.5" transform="rotate(164 1413 948)"/><ellipse cx="1433" cy="934" rx="2.2" ry="1.5" transform="rotate(30 1433 934)"/><ellipse cx="1388" cy="905" rx="3.0" ry="1.3" transform="rotate(6 1388 905)"/><ellipse cx="1395" cy="925" rx="2.6" ry="1.2" transform="rotate(11 1395 925)"/><ellipse cx="1459" cy="886" rx="2.1" ry="1.2" transform="rotate(65 1459 886)"/><ellipse cx="1381" cy="891" rx="2.1" ry="1.3" transform="rotate(34 1381 891)"/><ellipse cx="1388" cy="959" rx="1.6" ry="0.7" transform="rotate(164 1388 959)"/><ellipse cx="1413" cy="936" rx="1.8" ry="0.9" transform="rotate(63 1413 936)"/><ellipse cx="1388" cy="907" rx="2.3" ry="0.7" transform="rotate(14 1388 907)"/><ellipse cx="1405" cy="931" rx="1.9" ry="0.9" transform="rotate(151 1405 931)"/><ellipse cx="1385" cy="882" rx="2.9" ry="1.3" transform="rotate(57 1385 882)"/><ellipse cx="1370" cy="877" rx="2.3" ry="1.4" transform="rotate(114 1370 877)"/><ellipse cx="1417" cy="900" rx="2.7" ry="1.6" transform="rotate(95 1417 900)"/><ellipse cx="1409" cy="902" rx="2.8" ry="0.9" transform="rotate(135 1409 902)"/><ellipse cx="1374" cy="927" rx="1.6" ry="0.9" transform="rotate(156 1374 927)"/><ellipse cx="1379" cy="877" rx="1.3" ry="0.9" transform="rotate(174 1379 877)"/><ellipse cx="1409" cy="946" rx="2.7" ry="1.1" transform="rotate(100 1409 946)"/><ellipse cx="1441" cy="900" rx="1.6" ry="1.0" transform="rotate(76 1441 900)"/><ellipse cx="1385" cy="869" rx="1.7" ry="1.3" transform="rotate(78 1385 869)"/><ellipse cx="1420" cy="912" rx="1.9" ry="0.8" transform="rotate(121 1420 912)"/><ellipse cx="1456" cy="907" rx="2.6" ry="1.5" transform="rotate(88 1456 907)"/><ellipse cx="1357" cy="877" rx="1.1" ry="1.0" transform="rotate(67 1357 877)"/><ellipse cx="1386" cy="937" rx="1.1" ry="1.3" transform="rotate(172 1386 937)"/><ellipse cx="1402" cy="929" rx="1.8" ry="1.4" transform="rotate(41 1402 929)"/><ellipse cx="1402" cy="892" rx="2.5" ry="1.3" transform="rotate(121 1402 892)"/><ellipse cx="1452" cy="948" rx="3.1" ry="1.1" transform="rotate(155 1452 948)"/><ellipse cx="1388" cy="899" rx="2.0" ry="1.4" transform="rotate(83 1388 899)"/><ellipse cx="1460" cy="862" rx="1.5" ry="1.2" transform="rotate(116 1460 862)"/><ellipse cx="1433" cy="865" rx="3.4" ry="0.9" transform="rotate(121 1433 865)"/><ellipse cx="1456" cy="877" rx="1.4" ry="0.7" transform="rotate(61 1456 877)"/><ellipse cx="1463" cy="870" rx="2.6" ry="1.1" transform="rotate(143 1463 870)"/><ellipse cx="1443" cy="861" rx="2.8" ry="1.0" transform="rotate(135 1443 861)"/><ellipse cx="1472" cy="857" rx="1.6" ry="1.0" transform="rotate(90 1472 857)"/><ellipse cx="1446" cy="866" rx="2.0" ry="1.3" transform="rotate(147 1446 866)"/><ellipse cx="1453" cy="829" rx="3.0" ry="1.0" transform="rotate(116 1453 829)"/><ellipse cx="1480" cy="869" rx="2.8" ry="0.9" transform="rotate(85 1480 869)"/><ellipse cx="1446" cy="886" rx="2.1" ry="1.4" transform="rotate(166 1446 886)"/><ellipse cx="1453" cy="846" rx="1.9" ry="1.5" transform="rotate(163 1453 846)"/><ellipse cx="1456" cy="873" rx="3.0" ry="1.4" transform="rotate(51 1456 873)"/><ellipse cx="1407" cy="873" rx="1.2" ry="0.9" transform="rotate(120 1407 873)"/><ellipse cx="1486" cy="840" rx="2.2" ry="1.4" transform="rotate(175 1486 840)"/><ellipse cx="1444" cy="869" rx="1.6" ry="1.4" transform="rotate(25 1444 869)"/><ellipse cx="1410" cy="850" rx="1.5" ry="1.2" transform="rotate(95 1410 850)"/><ellipse cx="1471" cy="856" rx="2.2" ry="1.5" transform="rotate(135 1471 856)"/><ellipse cx="1470" cy="881" rx="2.0" ry="1.6" transform="rotate(173 1470 881)"/><ellipse cx="1431" cy="861" rx="1.6" ry="0.9" transform="rotate(37 1431 861)"/><ellipse cx="1464" cy="881" rx="1.1" ry="1.2" transform="rotate(108 1464 881)"/><ellipse cx="1448" cy="841" rx="3.3" ry="0.9" transform="rotate(17 1448 841)"/><ellipse cx="1438" cy="854" rx="3.5" ry="1.5" transform="rotate(124 1438 854)"/><ellipse cx="1457" cy="850" rx="2.2" ry="1.0" transform="rotate(62 1457 850)"/><ellipse cx="1436" cy="872" rx="2.6" ry="0.6" transform="rotate(97 1436 872)"/><ellipse cx="1483" cy="888" rx="2.4" ry="1.2" transform="rotate(57 1483 888)"/><ellipse cx="1442" cy="837" rx="3.3" ry="1.2" transform="rotate(49 1442 837)"/><ellipse cx="1446" cy="857" rx="2.9" ry="0.9" transform="rotate(129 1446 857)"/><ellipse cx="1466" cy="875" rx="1.4" ry="0.6" transform="rotate(47 1466 875)"/><ellipse cx="1460" cy="848" rx="2.3" ry="1.4" transform="rotate(176 1460 848)"/><ellipse cx="1448" cy="883" rx="3.0" ry="1.4" transform="rotate(62 1448 883)"/><ellipse cx="1519" cy="887" rx="1.6" ry="1.1" transform="rotate(114 1519 887)"/><ellipse cx="1571" cy="866" rx="2.7" ry="0.8" transform="rotate(28 1571 866)"/><ellipse cx="1526" cy="885" rx="2.6" ry="1.5" transform="rotate(30 1526 885)"/><ellipse cx="1533" cy="875" rx="1.6" ry="1.5" transform="rotate(26 1533 875)"/><ellipse cx="1560" cy="887" rx="2.6" ry="1.3" transform="rotate(40 1560 887)"/><ellipse cx="1590" cy="864" rx="1.5" ry="1.5" transform="rotate(154 1590 864)"/><ellipse cx="1541" cy="924" rx="1.3" ry="0.9" transform="rotate(75 1541 924)"/><ellipse cx="1579" cy="874" rx="2.0" ry="0.8" transform="rotate(147 1579 874)"/><ellipse cx="1579" cy="923" rx="1.9" ry="1.1" transform="rotate(158 1579 923)"/><ellipse cx="1557" cy="909" rx="2.6" ry="1.2" transform="rotate(73 1557 909)"/><ellipse cx="1547" cy="863" rx="1.4" ry="0.6" transform="rotate(109 1547 863)"/><ellipse cx="1522" cy="861" rx="1.4" ry="1.3" transform="rotate(82 1522 861)"/><ellipse cx="1515" cy="873" rx="2.3" ry="1.0" transform="rotate(116 1515 873)"/><ellipse cx="1589" cy="919" rx="2.3" ry="0.6" transform="rotate(87 1589 919)"/><ellipse cx="1623" cy="858" rx="2.1" ry="0.9" transform="rotate(169 1623 858)"/><ellipse cx="1559" cy="884" rx="1.6" ry="1.1" transform="rotate(121 1559 884)"/><ellipse cx="1580" cy="889" rx="2.8" ry="0.9" transform="rotate(32 1580 889)"/><ellipse cx="1554" cy="855" rx="2.7" ry="1.1" transform="rotate(146 1554 855)"/><ellipse cx="1495" cy="875" rx="3.0" ry="1.3" transform="rotate(88 1495 875)"/><ellipse cx="1542" cy="865" rx="1.2" ry="1.5" transform="rotate(145 1542 865)"/><ellipse cx="1565" cy="833" rx="2.4" ry="1.6" transform="rotate(85 1565 833)"/><ellipse cx="1570" cy="879" rx="1.9" ry="1.2" transform="rotate(147 1570 879)"/><ellipse cx="1518" cy="874" rx="1.9" ry="1.3" transform="rotate(143 1518 874)"/><ellipse cx="1556" cy="877" rx="2.6" ry="0.6" transform="rotate(55 1556 877)"/><ellipse cx="1591" cy="907" rx="1.4" ry="1.3" transform="rotate(13 1591 907)"/><ellipse cx="1570" cy="916" rx="3.3" ry="0.7" transform="rotate(111 1570 916)"/><ellipse cx="1533" cy="900" rx="1.2" ry="0.6" transform="rotate(14 1533 900)"/><ellipse cx="1582" cy="862" rx="2.5" ry="0.7" transform="rotate(123 1582 862)"/><ellipse cx="1573" cy="871" rx="3.0" ry="1.4" transform="rotate(179 1573 871)"/><ellipse cx="1528" cy="866" rx="1.9" ry="1.4" transform="rotate(56 1528 866)"/><ellipse cx="1536" cy="856" rx="3.5" ry="1.4" transform="rotate(17 1536 856)"/><ellipse cx="1570" cy="900" rx="2.0" ry="1.3" transform="rotate(47 1570 900)"/><ellipse cx="1535" cy="870" rx="1.8" ry="1.2" transform="rotate(78 1535 870)"/><ellipse cx="1573" cy="878" rx="3.2" ry="1.2" transform="rotate(83 1573 878)"/><ellipse cx="1591" cy="896" rx="3.0" ry="0.9" transform="rotate(128 1591 896)"/><ellipse cx="1550" cy="878" rx="3.1" ry="0.9" transform="rotate(86 1550 878)"/><ellipse cx="1564" cy="831" rx="3.1" ry="1.0" transform="rotate(152 1564 831)"/><ellipse cx="1577" cy="905" rx="2.1" ry="1.5" transform="rotate(130 1577 905)"/><ellipse cx="1536" cy="843" rx="1.9" ry="1.0" transform="rotate(19 1536 843)"/><ellipse cx="1551" cy="893" rx="2.8" ry="0.7" transform="rotate(165 1551 893)"/><ellipse cx="1539" cy="865" rx="1.3" ry="1.0" transform="rotate(101 1539 865)"/><ellipse cx="1601" cy="932" rx="1.9" ry="1.0" transform="rotate(51 1601 932)"/><ellipse cx="1547" cy="894" rx="3.1" ry="0.7" transform="rotate(66 1547 894)"/><ellipse cx="1538" cy="864" rx="1.8" ry="1.1" transform="rotate(11 1538 864)"/><ellipse cx="1551" cy="904" rx="2.9" ry="1.0" transform="rotate(75 1551 904)"/><ellipse cx="1589" cy="944" rx="2.4" ry="0.8" transform="rotate(111 1589 944)"/><ellipse cx="1566" cy="952" rx="3.2" ry="1.4" transform="rotate(178 1566 952)"/><ellipse cx="1606" cy="1019" rx="2.1" ry="1.0" transform="rotate(82 1606 1019)"/><ellipse cx="1652" cy="932" rx="3.0" ry="0.9" transform="rotate(21 1652 932)"/><ellipse cx="1610" cy="994" rx="2.8" ry="0.7" transform="rotate(1 1610 994)"/><ellipse cx="1622" cy="959" rx="1.1" ry="1.1" transform="rotate(18 1622 959)"/><ellipse cx="1612" cy="933" rx="2.5" ry="1.5" transform="rotate(22 1612 933)"/><ellipse cx="1609" cy="1001" rx="2.5" ry="1.0" transform="rotate(64 1609 1001)"/><ellipse cx="1558" cy="921" rx="3.4" ry="1.5" transform="rotate(176 1558 921)"/><ellipse cx="1604" cy="964" rx="3.1" ry="0.8" transform="rotate(94 1604 964)"/><ellipse cx="1537" cy="973" rx="2.1" ry="0.7" transform="rotate(37 1537 973)"/><ellipse cx="1636" cy="935" rx="1.3" ry="1.6" transform="rotate(67 1636 935)"/><ellipse cx="1596" cy="929" rx="3.1" ry="1.1" transform="rotate(5 1596 929)"/><ellipse cx="1556" cy="943" rx="2.0" ry="1.4" transform="rotate(80 1556 943)"/><ellipse cx="1586" cy="978" rx="1.6" ry="1.1" transform="rotate(173 1586 978)"/><ellipse cx="1565" cy="938" rx="1.4" ry="1.0" transform="rotate(104 1565 938)"/><ellipse cx="1598" cy="962" rx="3.2" ry="0.7" transform="rotate(119 1598 962)"/><ellipse cx="1620" cy="958" rx="1.7" ry="0.9" transform="rotate(98 1620 958)"/><ellipse cx="1613" cy="958" rx="1.6" ry="1.5" transform="rotate(50 1613 958)"/><ellipse cx="1581" cy="927" rx="1.0" ry="0.6" transform="rotate(137 1581 927)"/><ellipse cx="1632" cy="942" rx="2.2" ry="0.7" transform="rotate(95 1632 942)"/><ellipse cx="1616" cy="974" rx="1.1" ry="1.1" transform="rotate(84 1616 974)"/><ellipse cx="1596" cy="977" rx="1.2" ry="0.6" transform="rotate(23 1596 977)"/><ellipse cx="1606" cy="959" rx="2.8" ry="1.1" transform="rotate(106 1606 959)"/><ellipse cx="1577" cy="1024" rx="3.0" ry="1.0" transform="rotate(78 1577 1024)"/><ellipse cx="1612" cy="953" rx="3.2" ry="1.2" transform="rotate(102 1612 953)"/><ellipse cx="1569" cy="953" rx="1.2" ry="0.8" transform="rotate(64 1569 953)"/><ellipse cx="1602" cy="970" rx="2.8" ry="1.0" transform="rotate(133 1602 970)"/><ellipse cx="1555" cy="996" rx="1.6" ry="1.1" transform="rotate(76 1555 996)"/><ellipse cx="1603" cy="948" rx="2.4" ry="1.1" transform="rotate(112 1603 948)"/><ellipse cx="1603" cy="990" rx="3.5" ry="0.7" transform="rotate(175 1603 990)"/><ellipse cx="1626" cy="955" rx="1.2" ry="1.1" transform="rotate(173 1626 955)"/><ellipse cx="1640" cy="960" rx="2.9" ry="0.7" transform="rotate(109 1640 960)"/><ellipse cx="1607" cy="969" rx="2.3" ry="0.9" transform="rotate(119 1607 969)"/><ellipse cx="1583" cy="957" rx="3.3" ry="0.6" transform="rotate(144 1583 957)"/><ellipse cx="1590" cy="1010" rx="2.5" ry="1.1" transform="rotate(39 1590 1010)"/><ellipse cx="1629" cy="923" rx="3.4" ry="1.2" transform="rotate(166 1629 923)"/><ellipse cx="1628" cy="938" rx="1.8" ry="1.2" transform="rotate(62 1628 938)"/><ellipse cx="1612" cy="932" rx="3.2" ry="1.5" transform="rotate(136 1612 932)"/><ellipse cx="1606" cy="981" rx="1.2" ry="0.9" transform="rotate(28 1606 981)"/><ellipse cx="1587" cy="1001" rx="1.3" ry="1.5" transform="rotate(166 1587 1001)"/><ellipse cx="1602" cy="942" rx="1.7" ry="1.1" transform="rotate(111 1602 942)"/><ellipse cx="1604" cy="958" rx="1.2" ry="1.4" transform="rotate(4 1604 958)"/><ellipse cx="1612" cy="950" rx="3.4" ry="1.1" transform="rotate(109 1612 950)"/><ellipse cx="1620" cy="920" rx="2.0" ry="1.1" transform="rotate(142 1620 920)"/><ellipse cx="1519" cy="1025" rx="3.2" ry="1.5" transform="rotate(149 1519 1025)"/><ellipse cx="1508" cy="1024" rx="1.3" ry="1.4" transform="rotate(9 1508 1024)"/><ellipse cx="1522" cy="1014" rx="2.1" ry="1.6" transform="rotate(13 1522 1014)"/><ellipse cx="1520" cy="1024" rx="2.8" ry="1.0" transform="rotate(31 1520 1024)"/><ellipse cx="1502" cy="974" rx="1.4" ry="0.7" transform="rotate(73 1502 974)"/><ellipse cx="1528" cy="1007" rx="1.3" ry="1.2" transform="rotate(137 1528 1007)"/><ellipse cx="1513" cy="1012" rx="2.4" ry="0.7" transform="rotate(13 1513 1012)"/><ellipse cx="1573" cy="1025" rx="1.3" ry="1.1" transform="rotate(148 1573 1025)"/><ellipse cx="1527" cy="1027" rx="3.0" ry="1.2" transform="rotate(35 1527 1027)"/><ellipse cx="1444" cy="997" rx="3.0" ry="1.6" transform="rotate(4 1444 997)"/><ellipse cx="1546" cy="1018" rx="1.0" ry="1.6" transform="rotate(53 1546 1018)"/><ellipse cx="1473" cy="999" rx="2.1" ry="1.4" transform="rotate(28 1473 999)"/><ellipse cx="1484" cy="1020" rx="2.2" ry="0.8" transform="rotate(155 1484 1020)"/><ellipse cx="1487" cy="1041" rx="1.8" ry="1.4" transform="rotate(22 1487 1041)"/><ellipse cx="1493" cy="971" rx="2.6" ry="1.0" transform="rotate(177 1493 971)"/><ellipse cx="1564" cy="1003" rx="1.6" ry="0.7" transform="rotate(110 1564 1003)"/><ellipse cx="1526" cy="1015" rx="2.4" ry="1.5" transform="rotate(49 1526 1015)"/><ellipse cx="1546" cy="969" rx="3.4" ry="0.7" transform="rotate(24 1546 969)"/><ellipse cx="1580" cy="997" rx="1.4" ry="0.8" transform="rotate(128 1580 997)"/><ellipse cx="1529" cy="1015" rx="1.4" ry="1.2" transform="rotate(67 1529 1015)"/><ellipse cx="1528" cy="1001" rx="3.2" ry="1.4" transform="rotate(67 1528 1001)"/><ellipse cx="1491" cy="993" rx="1.3" ry="1.5" transform="rotate(79 1491 993)"/><ellipse cx="1473" cy="1007" rx="1.1" ry="0.9" transform="rotate(6 1473 1007)"/><ellipse cx="1519" cy="997" rx="2.8" ry="1.3" transform="rotate(179 1519 997)"/><ellipse cx="1531" cy="1027" rx="3.0" ry="1.0" transform="rotate(32 1531 1027)"/><ellipse cx="1501" cy="981" rx="2.1" ry="1.0" transform="rotate(24 1501 981)"/><ellipse cx="1482" cy="1029" rx="1.9" ry="1.6" transform="rotate(64 1482 1029)"/><ellipse cx="1479" cy="1015" rx="3.3" ry="1.4" transform="rotate(76 1479 1015)"/><ellipse cx="1508" cy="1013" rx="2.3" ry="1.4" transform="rotate(34 1508 1013)"/><ellipse cx="1516" cy="1016" rx="2.1" ry="1.1" transform="rotate(178 1516 1016)"/><ellipse cx="1348" cy="1011" rx="1.5" ry="1.0" transform="rotate(126 1348 1011)"/><ellipse cx="1415" cy="1049" rx="2.6" ry="0.6" transform="rotate(37 1415 1049)"/><ellipse cx="1384" cy="1031" rx="2.6" ry="1.0" transform="rotate(70 1384 1031)"/><ellipse cx="1401" cy="1029" rx="3.2" ry="1.4" transform="rotate(100 1401 1029)"/><ellipse cx="1402" cy="1048" rx="3.4" ry="0.9" transform="rotate(106 1402 1048)"/><ellipse cx="1395" cy="1063" rx="2.7" ry="1.5" transform="rotate(107 1395 1063)"/><ellipse cx="1421" cy="1057" rx="2.4" ry="1.5" transform="rotate(94 1421 1057)"/><ellipse cx="1365" cy="1054" rx="2.4" ry="1.3" transform="rotate(114 1365 1054)"/><ellipse cx="1404" cy="1026" rx="1.5" ry="1.5" transform="rotate(128 1404 1026)"/><ellipse cx="1398" cy="1054" rx="3.1" ry="1.2" transform="rotate(22 1398 1054)"/><ellipse cx="1412" cy="1022" rx="1.5" ry="1.3" transform="rotate(155 1412 1022)"/><ellipse cx="1315" cy="1023" rx="2.3" ry="0.6" transform="rotate(119 1315 1023)"/><ellipse cx="1412" cy="1011" rx="2.9" ry="1.5" transform="rotate(145 1412 1011)"/><ellipse cx="1370" cy="1041" rx="1.4" ry="0.6" transform="rotate(167 1370 1041)"/><ellipse cx="1403" cy="1009" rx="2.9" ry="1.1" transform="rotate(101 1403 1009)"/><ellipse cx="1398" cy="1041" rx="2.0" ry="0.7" transform="rotate(57 1398 1041)"/><ellipse cx="1362" cy="1039" rx="1.4" ry="0.7" transform="rotate(82 1362 1039)"/><ellipse cx="1397" cy="1026" rx="2.8" ry="1.3" transform="rotate(145 1397 1026)"/><ellipse cx="1390" cy="1023" rx="1.1" ry="0.8" transform="rotate(50 1390 1023)"/><ellipse cx="1359" cy="1057" rx="2.2" ry="0.9" transform="rotate(30 1359 1057)"/><ellipse cx="1373" cy="991" rx="2.8" ry="0.7" transform="rotate(125 1373 991)"/><ellipse cx="1391" cy="1022" rx="2.6" ry="1.5" transform="rotate(86 1391 1022)"/><ellipse cx="1375" cy="1031" rx="3.1" ry="1.2" transform="rotate(34 1375 1031)"/><ellipse cx="1340" cy="1020" rx="2.1" ry="0.9" transform="rotate(128 1340 1020)"/><ellipse cx="1456" cy="1039" rx="1.8" ry="1.1" transform="rotate(68 1456 1039)"/><ellipse cx="1404" cy="1055" rx="1.7" ry="1.1" transform="rotate(149 1404 1055)"/><ellipse cx="1295" cy="1024" rx="1.5" ry="0.8" transform="rotate(12 1295 1024)"/><ellipse cx="1373" cy="1028" rx="1.5" ry="1.2" transform="rotate(178 1373 1028)"/><ellipse cx="1382" cy="1002" rx="3.3" ry="1.1" transform="rotate(40 1382 1002)"/><ellipse cx="1382" cy="1030" rx="1.2" ry="1.0" transform="rotate(133 1382 1030)"/><ellipse cx="1833" cy="882" rx="1.3" ry="0.8" transform="rotate(108 1833 882)"/><ellipse cx="1820" cy="901" rx="2.9" ry="1.2" transform="rotate(156 1820 901)"/><ellipse cx="1875" cy="886" rx="1.9" ry="1.1" transform="rotate(45 1875 886)"/><ellipse cx="1867" cy="934" rx="2.1" ry="0.6" transform="rotate(71 1867 934)"/><ellipse cx="1846" cy="908" rx="1.1" ry="1.2" transform="rotate(145 1846 908)"/><ellipse cx="1867" cy="873" rx="1.6" ry="1.2" transform="rotate(48 1867 873)"/><ellipse cx="1853" cy="921" rx="1.3" ry="0.7" transform="rotate(177 1853 921)"/><ellipse cx="1905" cy="932" rx="2.7" ry="1.3" transform="rotate(20 1905 932)"/><ellipse cx="1843" cy="885" rx="2.3" ry="1.1" transform="rotate(162 1843 885)"/><ellipse cx="1852" cy="902" rx="2.5" ry="1.1" transform="rotate(117 1852 902)"/><ellipse cx="1870" cy="912" rx="2.8" ry="1.2" transform="rotate(57 1870 912)"/><ellipse cx="1857" cy="900" rx="3.2" ry="0.9" transform="rotate(13 1857 900)"/><ellipse cx="1846" cy="916" rx="2.4" ry="0.6" transform="rotate(97 1846 916)"/><ellipse cx="1832" cy="876" rx="2.5" ry="0.8" transform="rotate(70 1832 876)"/><ellipse cx="1850" cy="880" rx="3.1" ry="0.8" transform="rotate(86 1850 880)"/><ellipse cx="1878" cy="879" rx="1.7" ry="1.0" transform="rotate(51 1878 879)"/><ellipse cx="1850" cy="877" rx="3.1" ry="1.3" transform="rotate(150 1850 877)"/><ellipse cx="1831" cy="896" rx="2.7" ry="1.0" transform="rotate(9 1831 896)"/><ellipse cx="1835" cy="905" rx="1.2" ry="0.9" transform="rotate(172 1835 905)"/><ellipse cx="1838" cy="878" rx="2.5" ry="1.0" transform="rotate(101 1838 878)"/><ellipse cx="1847" cy="947" rx="3.0" ry="1.0" transform="rotate(100 1847 947)"/><ellipse cx="1821" cy="930" rx="3.1" ry="1.5" transform="rotate(19 1821 930)"/><ellipse cx="1864" cy="891" rx="1.3" ry="1.0" transform="rotate(116 1864 891)"/><ellipse cx="1876" cy="923" rx="3.4" ry="1.4" transform="rotate(149 1876 923)"/><ellipse cx="1862" cy="918" rx="1.6" ry="1.0" transform="rotate(159 1862 918)"/><ellipse cx="1869" cy="900" rx="2.4" ry="1.2" transform="rotate(175 1869 900)"/><ellipse cx="1839" cy="904" rx="1.2" ry="0.7" transform="rotate(86 1839 904)"/><ellipse cx="1881" cy="920" rx="1.5" ry="0.6" transform="rotate(130 1881 920)"/><ellipse cx="1811" cy="909" rx="2.4" ry="1.0" transform="rotate(13 1811 909)"/><ellipse cx="1872" cy="871" rx="1.7" ry="0.7" transform="rotate(113 1872 871)"/><ellipse cx="1886" cy="883" rx="3.3" ry="1.6" transform="rotate(23 1886 883)"/><ellipse cx="1861" cy="925" rx="1.3" ry="1.1" transform="rotate(147 1861 925)"/><ellipse cx="1847" cy="944" rx="1.6" ry="1.4" transform="rotate(14 1847 944)"/><ellipse cx="1855" cy="905" rx="2.4" ry="0.6" transform="rotate(125 1855 905)"/><ellipse cx="1805" cy="926" rx="2.0" ry="1.4" transform="rotate(135 1805 926)"/><ellipse cx="1862" cy="1030" rx="2.5" ry="1.2" transform="rotate(77 1862 1030)"/><ellipse cx="1890" cy="1024" rx="2.3" ry="1.0" transform="rotate(177 1890 1024)"/><ellipse cx="1896" cy="1046" rx="2.4" ry="0.7" transform="rotate(101 1896 1046)"/><ellipse cx="1887" cy="1026" rx="2.2" ry="1.4" transform="rotate(164 1887 1026)"/><ellipse cx="1908" cy="1021" rx="3.3" ry="0.8" transform="rotate(15 1908 1021)"/><ellipse cx="1876" cy="1001" rx="1.3" ry="1.1" transform="rotate(38 1876 1001)"/><ellipse cx="1872" cy="990" rx="2.7" ry="1.2" transform="rotate(14 1872 990)"/><ellipse cx="1866" cy="950" rx="3.5" ry="0.6" transform="rotate(124 1866 950)"/><ellipse cx="1873" cy="1023" rx="2.1" ry="0.6" transform="rotate(113 1873 1023)"/><ellipse cx="1900" cy="1034" rx="1.3" ry="1.2" transform="rotate(100 1900 1034)"/><ellipse cx="1887" cy="1002" rx="2.2" ry="1.0" transform="rotate(28 1887 1002)"/><ellipse cx="1889" cy="1010" rx="3.0" ry="0.7" transform="rotate(136 1889 1010)"/><ellipse cx="1901" cy="1029" rx="2.9" ry="1.5" transform="rotate(70 1901 1029)"/><ellipse cx="1895" cy="996" rx="2.6" ry="1.4" transform="rotate(27 1895 996)"/><ellipse cx="1902" cy="1010" rx="1.6" ry="0.8" transform="rotate(89 1902 1010)"/><ellipse cx="1886" cy="1017" rx="1.5" ry="0.7" transform="rotate(147 1886 1017)"/><ellipse cx="1894" cy="968" rx="2.1" ry="1.5" transform="rotate(98 1894 968)"/><ellipse cx="1877" cy="998" rx="1.9" ry="0.8" transform="rotate(118 1877 998)"/><ellipse cx="1901" cy="992" rx="1.8" ry="1.4" transform="rotate(14 1901 992)"/><ellipse cx="1882" cy="993" rx="3.4" ry="1.4" transform="rotate(177 1882 993)"/><ellipse cx="1858" cy="1004" rx="2.0" ry="1.4" transform="rotate(97 1858 1004)"/><ellipse cx="1854" cy="1012" rx="3.3" ry="0.9" transform="rotate(46 1854 1012)"/><ellipse cx="1894" cy="999" rx="1.9" ry="1.1" transform="rotate(52 1894 999)"/><ellipse cx="1868" cy="1005" rx="2.1" ry="1.4" transform="rotate(137 1868 1005)"/><ellipse cx="1912" cy="976" rx="1.7" ry="1.4" transform="rotate(125 1912 976)"/><ellipse cx="1091" cy="840" rx="3.3" ry="1.2" transform="rotate(169 1091 840)"/><ellipse cx="1147" cy="857" rx="1.3" ry="1.3" transform="rotate(83 1147 857)"/><ellipse cx="1106" cy="860" rx="2.2" ry="0.9" transform="rotate(89 1106 860)"/><ellipse cx="1115" cy="848" rx="1.5" ry="1.1" transform="rotate(119 1115 848)"/><ellipse cx="1071" cy="839" rx="2.1" ry="1.5" transform="rotate(138 1071 839)"/><ellipse cx="1073" cy="850" rx="3.0" ry="0.9" transform="rotate(51 1073 850)"/><ellipse cx="1077" cy="850" rx="1.1" ry="1.1" transform="rotate(165 1077 850)"/><ellipse cx="1150" cy="839" rx="2.8" ry="1.0" transform="rotate(13 1150 839)"/><ellipse cx="1140" cy="837" rx="2.5" ry="1.2" transform="rotate(175 1140 837)"/><ellipse cx="1105" cy="865" rx="2.8" ry="1.3" transform="rotate(164 1105 865)"/><ellipse cx="1182" cy="855" rx="1.1" ry="0.9" transform="rotate(63 1182 855)"/><ellipse cx="1077" cy="845" rx="2.7" ry="0.6" transform="rotate(67 1077 845)"/><ellipse cx="1109" cy="851" rx="1.8" ry="0.9" transform="rotate(23 1109 851)"/><ellipse cx="1133" cy="861" rx="2.7" ry="1.5" transform="rotate(57 1133 861)"/><ellipse cx="1139" cy="855" rx="3.2" ry="0.7" transform="rotate(113 1139 855)"/><ellipse cx="1064" cy="839" rx="2.9" ry="1.4" transform="rotate(25 1064 839)"/><ellipse cx="1155" cy="857" rx="3.4" ry="0.9" transform="rotate(62 1155 857)"/><ellipse cx="1110" cy="861" rx="2.1" ry="1.1" transform="rotate(46 1110 861)"/><ellipse cx="1037" cy="850" rx="1.9" ry="0.8" transform="rotate(165 1037 850)"/><ellipse cx="1120" cy="850" rx="2.8" ry="1.3" transform="rotate(70 1120 850)"/><ellipse cx="1174" cy="838" rx="2.4" ry="1.2" transform="rotate(75 1174 838)"/><ellipse cx="1132" cy="859" rx="2.8" ry="1.1" transform="rotate(94 1132 859)"/><ellipse cx="1132" cy="854" rx="2.9" ry="0.8" transform="rotate(102 1132 854)"/><ellipse cx="1194" cy="849" rx="2.6" ry="1.0" transform="rotate(109 1194 849)"/><ellipse cx="1272" cy="839" rx="2.1" ry="1.3" transform="rotate(52 1272 839)"/><ellipse cx="1232" cy="849" rx="2.4" ry="1.4" transform="rotate(164 1232 849)"/><ellipse cx="1202" cy="845" rx="2.5" ry="1.4" transform="rotate(67 1202 845)"/><ellipse cx="1218" cy="841" rx="1.2" ry="0.7" transform="rotate(32 1218 841)"/><ellipse cx="1219" cy="854" rx="3.0" ry="1.3" transform="rotate(69 1219 854)"/><ellipse cx="1241" cy="864" rx="3.2" ry="1.4" transform="rotate(124 1241 864)"/><ellipse cx="1196" cy="869" rx="2.3" ry="0.9" transform="rotate(162 1196 869)"/><ellipse cx="1226" cy="846" rx="1.2" ry="1.1" transform="rotate(140 1226 846)"/><ellipse cx="1203" cy="857" rx="1.3" ry="1.2" transform="rotate(74 1203 857)"/><ellipse cx="1219" cy="858" rx="2.5" ry="1.4" transform="rotate(96 1219 858)"/><ellipse cx="1206" cy="838" rx="2.8" ry="1.3" transform="rotate(2 1206 838)"/><ellipse cx="1257" cy="846" rx="1.1" ry="1.3" transform="rotate(137 1257 846)"/><ellipse cx="1208" cy="865" rx="1.1" ry="1.3" transform="rotate(121 1208 865)"/><ellipse cx="1239" cy="834" rx="3.3" ry="1.0" transform="rotate(1 1239 834)"/><ellipse cx="1248" cy="857" rx="1.6" ry="0.8" transform="rotate(16 1248 857)"/><ellipse cx="1250" cy="844" rx="2.2" ry="1.1" transform="rotate(108 1250 844)"/><ellipse cx="1227" cy="834" rx="1.0" ry="0.9" transform="rotate(2 1227 834)"/><ellipse cx="1197" cy="840" rx="2.4" ry="1.6" transform="rotate(30 1197 840)"/><ellipse cx="1211" cy="844" rx="2.1" ry="0.8" transform="rotate(141 1211 844)"/><ellipse cx="1221" cy="860" rx="3.1" ry="0.6" transform="rotate(34 1221 860)"/><ellipse cx="1262" cy="840" rx="1.5" ry="0.7" transform="rotate(121 1262 840)"/><ellipse cx="1298" cy="926" rx="1.2" ry="1.4" transform="rotate(79 1298 926)"/><ellipse cx="1266" cy="939" rx="1.0" ry="1.1" transform="rotate(116 1266 939)"/><ellipse cx="1264" cy="1002" rx="1.2" ry="1.5" transform="rotate(168 1264 1002)"/><ellipse cx="1299" cy="964" rx="2.5" ry="1.0" transform="rotate(79 1299 964)"/><ellipse cx="1231" cy="924" rx="2.9" ry="1.1" transform="rotate(83 1231 924)"/><ellipse cx="1280" cy="967" rx="3.2" ry="1.2" transform="rotate(108 1280 967)"/><ellipse cx="1220" cy="961" rx="3.1" ry="1.1" transform="rotate(119 1220 961)"/><ellipse cx="1275" cy="923" rx="2.6" ry="0.9" transform="rotate(138 1275 923)"/><ellipse cx="1254" cy="998" rx="2.7" ry="1.1" transform="rotate(102 1254 998)"/><ellipse cx="1258" cy="931" rx="1.1" ry="1.1" transform="rotate(53 1258 931)"/><ellipse cx="1258" cy="943" rx="1.5" ry="1.6" transform="rotate(68 1258 943)"/><ellipse cx="1270" cy="927" rx="1.2" ry="1.3" transform="rotate(79 1270 927)"/><ellipse cx="1271" cy="935" rx="2.2" ry="1.2" transform="rotate(40 1271 935)"/><ellipse cx="1267" cy="925" rx="1.3" ry="0.8" transform="rotate(8 1267 925)"/><ellipse cx="1244" cy="964" rx="1.4" ry="0.9" transform="rotate(60 1244 964)"/><ellipse cx="1277" cy="988" rx="3.1" ry="0.7" transform="rotate(119 1277 988)"/><ellipse cx="1272" cy="938" rx="2.0" ry="0.6" transform="rotate(57 1272 938)"/><ellipse cx="1284" cy="959" rx="1.5" ry="1.3" transform="rotate(69 1284 959)"/><ellipse cx="1290" cy="955" rx="2.1" ry="1.3" transform="rotate(134 1290 955)"/><ellipse cx="1270" cy="964" rx="2.8" ry="1.6" transform="rotate(99 1270 964)"/><ellipse cx="1258" cy="926" rx="2.1" ry="0.9" transform="rotate(89 1258 926)"/><ellipse cx="1266" cy="961" rx="1.1" ry="0.7" transform="rotate(156 1266 961)"/><ellipse cx="1244" cy="991" rx="1.6" ry="1.0" transform="rotate(161 1244 991)"/><ellipse cx="1245" cy="952" rx="2.9" ry="1.0" transform="rotate(36 1245 952)"/><ellipse cx="1306" cy="943" rx="2.4" ry="1.4" transform="rotate(177 1306 943)"/><ellipse cx="1717" cy="863" rx="1.3" ry="1.2" transform="rotate(87 1717 863)"/><ellipse cx="1703" cy="882" rx="1.9" ry="1.0" transform="rotate(158 1703 882)"/><ellipse cx="1741" cy="878" rx="1.8" ry="1.5" transform="rotate(69 1741 878)"/><ellipse cx="1684" cy="898" rx="1.1" ry="1.3" transform="rotate(11 1684 898)"/><ellipse cx="1675" cy="864" rx="1.2" ry="1.2" transform="rotate(92 1675 864)"/><ellipse cx="1682" cy="906" rx="1.8" ry="0.8" transform="rotate(74 1682 906)"/><ellipse cx="1678" cy="905" rx="1.5" ry="1.0" transform="rotate(140 1678 905)"/><ellipse cx="1684" cy="884" rx="1.4" ry="1.0" transform="rotate(95 1684 884)"/><ellipse cx="1712" cy="818" rx="2.3" ry="1.1" transform="rotate(137 1712 818)"/><ellipse cx="1687" cy="883" rx="2.7" ry="1.4" transform="rotate(40 1687 883)"/><ellipse cx="1704" cy="875" rx="1.5" ry="1.0" transform="rotate(163 1704 875)"/><ellipse cx="1684" cy="882" rx="1.6" ry="1.1" transform="rotate(101 1684 882)"/><ellipse cx="1669" cy="858" rx="1.3" ry="1.3" transform="rotate(173 1669 858)"/><ellipse cx="1678" cy="862" rx="3.0" ry="1.5" transform="rotate(57 1678 862)"/><ellipse cx="1667" cy="890" rx="1.4" ry="1.0" transform="rotate(174 1667 890)"/><ellipse cx="935" cy="856" rx="2.1" ry="1.1" transform="rotate(138 935 856)"/><ellipse cx="965" cy="856" rx="2.1" ry="1.6" transform="rotate(154 965 856)"/><ellipse cx="946" cy="858" rx="3.5" ry="0.6" transform="rotate(126 946 858)"/><ellipse cx="965" cy="851" rx="2.6" ry="1.3" transform="rotate(115 965 851)"/><ellipse cx="953" cy="859" rx="3.1" ry="0.9" transform="rotate(97 953 859)"/><ellipse cx="917" cy="844" rx="3.0" ry="1.4" transform="rotate(61 917 844)"/><ellipse cx="976" cy="857" rx="2.2" ry="1.0" transform="rotate(116 976 857)"/><ellipse cx="1166" cy="937" rx="2.1" ry="0.8" transform="rotate(23 1166 937)"/><ellipse cx="1198" cy="954" rx="2.0" ry="1.1" transform="rotate(1 1198 954)"/><ellipse cx="1173" cy="971" rx="1.3" ry="1.5" transform="rotate(31 1173 971)"/><ellipse cx="1175" cy="974" rx="3.0" ry="1.5" transform="rotate(115 1175 974)"/><ellipse cx="1158" cy="942" rx="1.1" ry="1.3" transform="rotate(172 1158 942)"/><ellipse cx="1219" cy="933" rx="1.3" ry="1.3" transform="rotate(179 1219 933)"/><ellipse cx="1181" cy="975" rx="3.4" ry="0.8" transform="rotate(28 1181 975)"/><ellipse cx="1171" cy="946" rx="2.6" ry="0.9" transform="rotate(41 1171 946)"/><ellipse cx="1158" cy="950" rx="2.7" ry="1.2" transform="rotate(44 1158 950)"/><ellipse cx="1183" cy="967" rx="1.2" ry="1.3" transform="rotate(60 1183 967)"/><ellipse cx="1186" cy="960" rx="3.1" ry="1.2" transform="rotate(38 1186 960)"/><ellipse cx="1192" cy="923" rx="1.1" ry="0.8" transform="rotate(122 1192 923)"/><ellipse cx="1183" cy="946" rx="2.2" ry="0.9" transform="rotate(69 1183 946)"/><ellipse cx="1196" cy="940" rx="2.6" ry="1.5" transform="rotate(165 1196 940)"/><ellipse cx="1177" cy="956" rx="1.9" ry="1.6" transform="rotate(86 1177 956)"/></g><g fill="none" stroke="#bfe0f2" stroke-width="1"><path d="M1359 889 L1356 886 L1353 883 L1350 882 L1346 881 L1342 882"/><path d="M1309 898 L1313 898 L1317 899 L1320 901 L1323 905 L1325 908"/><path d="M1351 899 L1347 901 L1346 905 L1342 907 L1339 908 L1335 911"/><path d="M1324 874 L1322 877 L1323 881 L1324 885 L1322 889 L1318 890"/><path d="M1335 824 L1334 828 L1335 832 L1338 835 L1342 835 L1345 832"/><path d="M1323 978 L1320 980 L1316 982 L1313 983 L1309 985 L1305 986"/><path d="M1293 970 L1297 972 L1301 972 L1304 975 L1305 978 L1308 982"/><path d="M1337 986 L1334 984 L1333 980 L1332 976 L1333 972 L1335 969"/><path d="M1318 949 L1319 945 L1319 942 L1318 938 L1317 934 L1320 930"/><path d="M1403 854 L1403 850 L1400 847 L1400 843 L1400 839 L1402 836"/><path d="M1384 871 L1380 870 L1376 870 L1372 869 L1368 870 L1365 872"/><path d="M1404 893 L1408 892 L1411 890 L1414 887 L1417 884 L1419 881"/><path d="M1359 933 L1362 930 L1365 928 L1368 925 L1372 925 L1376 922"/><path d="M1445 865 L1442 868 L1438 869 L1434 871 L1431 872 L1427 873"/><path d="M1437 853 L1435 857 L1432 860 L1431 863 L1430 867 L1428 870"/><path d="M1552 885 L1548 882 L1545 881 L1541 879 L1538 876 L1537 873"/><path d="M1549 915 L1550 911 L1547 908 L1544 906 L1540 904 L1538 900"/><path d="M1546 883 L1543 880 L1544 876 L1545 872 L1544 868 L1543 864"/><path d="M1586 960 L1588 964 L1590 967 L1591 971 L1591 975 L1593 978"/><path d="M1646 928 L1647 932 L1650 934 L1651 938 L1653 941 L1656 944"/><path d="M1600 933 L1601 930 L1604 928 L1608 927 L1611 924 L1611 920"/><path d="M1522 1017 L1522 1021 L1522 1025 L1520 1029 L1517 1032 L1515 1035"/><path d="M1526 1014 L1528 1018 L1531 1021 L1531 1025 L1533 1029 L1532 1032"/><path d="M1394 1042 L1397 1044 L1400 1047 L1400 1051 L1401 1055 L1400 1059"/><path d="M1357 1050 L1357 1054 L1356 1058 L1356 1062 L1358 1065 L1361 1068"/><path d="M1869 905 L1873 903 L1875 900 L1878 897 L1881 895 L1882 891"/><path d="M1835 896 L1839 897 L1843 897 L1846 898 L1850 896 L1854 895"/><path d="M1859 982 L1860 985 L1862 989 L1865 991 L1868 994 L1870 997"/><path d="M1890 999 L1891 996 L1893 992 L1896 989 L1896 985 L1896 981"/><path d="M1105 854 L1108 856 L1111 859 L1114 861 L1117 864 L1120 867"/><path d="M1120 834 L1121 838 L1123 841 L1126 843 L1130 845 L1133 848"/><path d="M1241 855 L1243 852 L1244 848 L1245 844 L1246 840 L1246 836"/><path d="M1223 850 L1226 847 L1230 847 L1233 848 L1237 850 L1241 849"/><path d="M1262 985 L1266 984 L1270 983 L1273 981 L1277 981 L1281 981"/><path d="M1289 926 L1293 925 L1296 923 L1299 920 L1300 916 L1299 912"/><path d="M1715 867 L1711 870 L1708 872 L1705 874 L1704 878 L1706 882"/><path d="M1708 859 L1706 855 L1705 851 L1702 849 L1699 846 L1698 843"/><path d="M937 844 L937 840 L937 836 L934 833 L932 829 L932 825"/><path d="M953 849 L952 846 L948 844 L945 842 L942 838 L942 834"/><path d="M731 273 L730 269 L727 267 L724 263 L720 262 L716 263"/><path d="M793 283 L796 280 L799 279 L802 276 L803 272 L805 268"/><path d="M1179 965 L1176 963 L1173 959 L1169 958 L1165 958 L1161 959"/><path d="M1179 939 L1183 939 L1186 940 L1189 944 L1191 947 L1192 951"/></g>
<g id="rivers" fill="none" stroke="#a6d7ef" stroke-width="1.3"><path d="M497.4 680.0 L505.2 695.6 L497.4 708.5 L507.8 726.7 L523.3 737.0 L528.5 755.2 L538.9 770.7 L564.8 786.3 L593.3 801.9 L601.1 825.2 L619.3 848.5 L616.7 861.5 L595.9 879.6 L590.8 900.4 L590.8 960.0 L600.0 1000.0 L620.0 1040.0 L640.0 1074.0"/><path d="M290.0 814.8 L334.1 809.6 L367.8 794.1 L406.7 783.7 L453.3 775.9 L492.2 788.9 L518.2 799.3"/><path d="M455.9 773.3 L484.5 744.8 L507.8 731.9"/><path d="M595.9 801.9 L624.5 799.3 L665.9 788.9 L694.5 783.7 L730.0 775.9"/><path d="M461.1 809.6 L492.2 812.2 L510.4 801.9"/><path d="M295.7 580.9 L333.0 580.9 L399.0 569.4 L416.3 557.9 L450.7 560.8 L465.0 566.5 L473.6 552.2 L479.4 523.5 L473.6 494.8 L479.4 477.6"/><path d="M450.7 586.6 L462.2 609.6 L476.5 632.5 L490.9 655.5 L496.6 684.2"/><path d="M338.8 446.0 L347.4 469.0 L358.9 500.5 L384.7 517.7 L404.8 540.7 L407.6 563.6"/><path d="M1300.0 950.0 L1280.0 1000.0 L1260.0 1050.0"/><path d="M740.0 280.0 L770.0 270.0 L790.0 258.0"/></g>
<g fill="none" stroke="#e4e2df" stroke-width="3.5"><path d="M334.1 680.0 L347.0 695.6 L367.8 703.3 L393.7 718.9 L388.5 734.4 L396.3 747.4 L401.5 765.6 L380.7 770.7 L362.6 768.2 L360.0 783.7 L370.4 801.9 L367.8 814.8 L380.7 820.0 L370.4 845.9 L360.0 864.1 L354.8 882.2 L336.7 882.2 L328.9 895.2 L295.2 900.4"/><path d="M370.4 861.5 L380.7 877.0 L404.1 887.4 L411.9 905.6 L445.6 900.4 L471.5 895.2 L481.9 926.3 L515.6 928.9 L536.3 944.5 L564.8 928.9 L585.6 934.1 L593.3 928.9"/><path d="M601.1 693.0 L606.3 713.7 L598.5 726.7 L614.1 734.4 L601.1 750.0 L606.3 765.6 L593.3 773.3 L564.8 778.5 L575.2 786.3 L593.3 801.9 L598.5 817.4 L601.1 830.4 L585.6 843.3 L598.5 856.3 L590.8 874.5 L593.3 960.0 L600.0 1000.0 L610.0 1040.0"/><path d="M295.7 615.3 L307.2 629.6 L321.6 638.2 L327.3 655.5 L333.0 667.0 L335.9 690.0"/><path d="M293.7 375.4 L308.5 371.7 L319.6 377.2 L351.1 377.2 L360.4 362.4 L364.1 358.7"/><path d="M1060.0 1040.0 L1100.0 1050.0 L1120.0 1070.0"/><path d="M1200.0 1074.0 L1220.0 1040.0 L1240.0 1020.0 L1280.0 1000.0"/><path d="M1489.6 833.5 L1490.9 844.5 L1485.1 857.2 L1480.0 868.3 L1481.0 882.3 L1475.1 888.4 L1473.4 902.5 L1476.5 906.3 L1477.2 923.7 L1472.9 930.9 L1467.3 936.1 L1471.9 946.5 L1470.9 957.9 L1471.2 969.7 L1476.2 982.7 L1478.5 991.1 L1480.0 1001.3 L1478.2 1008.8 L1481.1 1025.1 L1478.4 1033.4 L1472.8 1040.1 L1471.2 1049.4 L1473.6 1062.6 L1470.0 1074.0"/><path d="M1822.8 879.1 L1826.2 892.8 L1821.0 897.7 L1830.8 909.8 L1833.8 919.2 L1829.1 931.0 L1837.2 938.2 L1834.2 948.7 L1843.7 962.1 L1839.4 968.0 L1841.8 976.5 L1849.9 987.4 L1850.0 1000.0"/><path d="M1290.5 844.6 L1289.5 857.9 L1291.0 868.1 L1292.9 877.4 L1295.7 887.2 L1303.8 902.4 L1300.1 913.1 L1301.0 919.2 L1307.8 931.1 L1303.5 943.9 L1306.0 948.1 L1312.2 958.6 L1305.9 966.6 L1301.7 980.7 L1300.4 990.8 L1300.0 1000.0"/></g><g id="borders" fill="none" stroke="#a0a0a0" stroke-width="1.1" stroke-dasharray="2.5 2"><path d="M334.1 680.0 L347.0 695.6 L367.8 703.3 L393.7 718.9 L388.5 734.4 L396.3 747.4 L401.5 765.6 L380.7 770.7 L362.6 768.2 L360.0 783.7 L370.4 801.9 L367.8 814.8 L380.7 820.0 L370.4 845.9 L360.0 864.1 L354.8 882.2 L336.7 882.2 L328.9 895.2 L295.2 900.4"/><path d="M370.4 861.5 L380.7 877.0 L404.1 887.4 L411.9 905.6 L445.6 900.4 L471.5 895.2 L481.9 926.3 L515.6 928.9 L536.3 944.5 L564.8 928.9 L585.6 934.1 L593.3 928.9"/><path d="M601.1 693.0 L606.3 713.7 L598.5 726.7 L614.1 734.4 L601.1 750.0 L606.3 765.6 L593.3 773.3 L564.8 778.5 L575.2 786.3 L593.3 801.9 L598.5 817.4 L601.1 830.4 L585.6 843.3 L598.5 856.3 L590.8 874.5 L593.3 960.0 L600.0 1000.0 L610.0 1040.0"/><path d="M295.7 615.3 L307.2 629.6 L321.6 638.2 L327.3 655.5 L333.0 667.0 L335.9 690.0"/><path d="M293.7 375.4 L308.5 371.7 L319.6 377.2 L351.1 377.2 L360.4 362.4 L364.1 358.7"/><path d="M1060.0 1040.0 L1100.0 1050.0 L1120.0 1070.0"/><path d="M1200.0 1074.0 L1220.0 1040.0 L1240.0 1020.0 L1280.0 1000.0"/><path d="M1489.6 833.5 L1490.9 844.5 L1485.1 857.2 L1480.0 868.3 L1481.0 882.3 L1475.1 888.4 L1473.4 902.5 L1476.5 906.3 L1477.2 923.7 L1472.9 930.9 L1467.3 936.1 L1471.9 946.5 L1470.9 957.9 L1471.2 969.7 L1476.2 982.7 L1478.5 991.1 L1480.0 1001.3 L1478.2 1008.8 L1481.1 1025.1 L1478.4 1033.4 L1472.8 1040.1 L1471.2 1049.4 L1473.6 1062.6 L1470.0 1074.0"/><path d="M1822.8 879.1 L1826.2 892.8 L1821.0 897.7 L1830.8 909.8 L1833.8 919.2 L1829.1 931.0 L1837.2 938.2 L1834.2 948.7 L1843.7 962.1 L1839.4 968.0 L1841.8 976.5 L1849.9 987.4 L1850.0 1000.0"/><path d="M1290.5 844.6 L1289.5 857.9 L1291.0 868.1 L1292.9 877.4 L1295.7 887.2 L1303.8 902.4 L1300.1 913.1 L1301.0 919.2 L1307.8 931.1 L1303.5 943.9 L1306.0 948.1 L1312.2 958.6 L1305.9 966.6 L1301.7 980.7 L1300.4 990.8 L1300.0 1000.0"/></g><path d="M900.0 832.5 L901.6 841.9 L892.2 870.0 L903.1 876.3 L918.8 898.1 L928.1 907.5 L931.3 913.8 L928.1 920.0 L937.5 929.4 L937.5 938.8 L943.8 954.4 L950.0 966.9 L962.5 976.3 L975.0 982.5 L962.5 990.3 L946.9 993.4 L943.8 1001.3 L950.0 1010.6 L956.3 1020.0 L962.5 1032.5 L965.6 1054.4 L965.6 1074.0" fill="none" stroke="#dcdcdc" stroke-width="5" opacity=".7"/><path d="M900.0 832.5 L901.6 841.9 L892.2 870.0 L903.1 876.3 L918.8 898.1 L928.1 907.5 L931.3 913.8 L928.1 920.0 L937.5 929.4 L937.5 938.8 L943.8 954.4 L950.0 966.9 L962.5 976.3 L975.0 982.5 L962.5 990.3 L946.9 993.4 L943.8 1001.3 L950.0 1010.6 L956.3 1020.0 L962.5 1032.5 L965.6 1054.4 L965.6 1074.0" fill="none" stroke="#6a6a6a" stroke-width="1.6"/>
<polygon points="293.0,211.0 648.0,211.0 653.0,262.0 706.0,319.4 695.7,355.6 719.0,390.7 719.0,677.0 709.1,669.5 678.0,685.0 674.1,680.5 632.6,680.5 604.7,690.9 602.8,676.0 615.7,663.7 613.1,628.0 587.2,608.6 584.0,594.3 573.6,582.7 578.7,563.1 555.6,538.1 551.9,538.1 546.3,554.8 527.8,561.3 507.4,543.7 480.6,547.4 479.6,540.0 500.9,528.9 513.9,493.7 511.1,478.9 459.3,478.9 443.5,453.9 427.8,440.0 412.2,421.7 407.6,397.6 411.3,384.6 405.7,345.7 382.6,354.0 362.2,358.7 340.0,349.4 324.3,325.4 324.3,303.5 318.7,303.5 310.4,311.5 293.0,303.0" fill="#f2d465" stroke="#f0c61e" stroke-width="1.5"/>
<g fill="none" stroke="#efc42a" stroke-width="1.3" opacity=".9"><path d="M318.7 303.5 L325.2 290.2 L336.3 288.3 L354.8 287.4 L394.6 270.7 L399.3 255.0 L402.0 211.0"/><path d="M394.6 270.7 L427.0 325.4 L427.0 332.8 L405.7 345.7"/><path d="M427.0 332.8 L453.9 322.6 L487.2 340.2 L483.5 366.1 L491.0 382.8 L535.4 418.0 L530.7 455.0 L529.6 440.0"/><path d="M453.9 322.6 L504.8 302.2 L523.3 299.4 L545.6 285.6 L571.5 282.8 L590.0 285.6"/><path d="M530.7 255.0 L545.6 285.6"/><path d="M491.0 382.8 L462.2 401.3 L460.4 442.0 L441.9 455.0"/><path d="M557.6 285.6 L577.0 332.8 L564.0 349.4 L576.1 380.9 L590.0 384.6"/><path d="M319.6 260.6 L338.1 282.8"/><path d="M558.5 455.0 L590.0 440.2"/><path d="M580.0 284.3 L601.3 289.8 L648.5 268.5"/><path d="M580.0 329.6 L589.3 325.9 L617.0 348.1 L661.5 333.3 L670.7 292.6"/><path d="M631.9 388.9 L620.7 423.1 L598.5 438.9"/><path d="M580.0 385.2 L591.1 387.0 L615.2 418.5 L620.7 423.1 L627.2 450.0"/><path d="M641.1 403.7 L659.6 403.7 L694.8 357.4"/><path d="M443.5 453.9 L474.0 449.3 L529.6 445.6 L559.3 445.6 L594.4 440.0"/><path d="M529.6 440.0 L535.2 471.5 L559.3 467.8 L559.3 445.6"/><path d="M559.3 462.2 L573.1 473.3 L568.5 499.3 L579.6 508.5 L555.6 532.6 L555.6 538.1"/><path d="M511.1 478.9 L535.2 471.5"/><path d="M579.6 508.5 L603.7 499.3 L624.1 512.2 L633.3 503.0 L651.9 499.3 L668.5 506.7 L694.4 519.6 L719.0 530.0"/><path d="M624.1 512.2 L624.1 528.9 L648.1 564.1 L638.9 603.0 L631.5 615.9 L631.5 627.0"/><path d="M638.9 603.0 L663.0 601.1 L700.0 595.6 L719.0 590.0"/><path d="M625.9 440.0 L629.6 454.8 L668.5 451.1 L672.2 440.0"/><path d="M668.5 451.1 L674.1 478.9 L696.3 475.2 L719.0 470.0"/><path d="M694.4 475.2 L694.4 514.1"/><path d="M649.4 563.2 L639.0 579.4 L637.8 603.4 L632.0 614.4 L632.6 627.4"/><path d="M637.8 603.4 L674.1 605.4 L702.6 598.9 L715.5 583.3 L709.1 560.0 L719.0 540.0"/><path d="M594.4 440.0 L610.0 420.0 L640.0 410.0 L660.0 404.0"/><path d="M336.3 288.3 L350.0 260.0 L360.0 240.0 L370.0 211.0"/><path d="M590.0 285.6 L620.0 260.0 L648.0 250.0"/><path d="M480.0 211.0 L500.0 240.0 L530.7 255.0 L580.0 250.0 L620.0 230.0 L648.0 220.0"/></g><polygon points="638.9,465.9 646.3,462.2 663.0,464.0 659.3,477.0 646.3,478.9 638.9,469.6" fill="#cbb75a"/>
<polygon points="670.4,460.4 677.8,464.0 685.2,477.0 692.6,484.4 690.7,491.9 696.3,497.4 700.0,499.3 694.4,517.8 696.3,540.0 677.8,545.6 670.4,519.6 674.1,499.3 663.0,491.9 655.6,490.0 666.7,480.7 670.4,471.5" fill="#cbb75a"/>
<polygon points="879.0,211.0 1916.0,211.0 1916.0,831.9 1895.6,833.7 1888.1,820.7 1853.0,835.6 1825.2,850.4 1812.2,813.3 1799.3,787.4 1788.1,783.7 1749.3,804.0 1738.1,817.0 1730.7,839.3 1715.9,828.1 1708.5,802.2 1684.4,796.7 1664.1,798.5 1649.3,772.6 1627.0,798.5 1599.3,800.4 1590.0,789.3 1583.7,787.4 1576.3,809.6 1565.2,826.3 1555.9,818.9 1557.8,795.7 1528.1,785.6 1522.6,786.5 1511.5,791.0 1489.3,792.0 1485.6,781.0 1476.3,772.6 1474.4,749.4 1446.7,747.6 1437.4,751.3 1402.2,742.0 1389.3,735.6 1350.4,733.7 1343.0,723.5 1302.2,719.8 1288.3,710.6 1200.0,700.0 1000.0,600.0 902.5,297.0" fill="#f1c722"/>
<g id="labels" font-family="Liberation Sans" font-weight="700" fill="#454545" stroke="#fff" stroke-width="2.2" stroke-linejoin="round" paint-order="stroke" text-anchor="middle"><text x="301" y="228.1" font-size="10.8">óda</text><text x="921.5" y="237.2" font-size="10.8">Grodno</text><text x="1464.7" y="232.6" font-size="10.3">Dzierżyńsk</text><text x="1250.6" y="256.2" font-size="10.3">Nowogródek</text><text x="1628.9" y="277.9" font-size="10.3">Mar'ina Gorka</text><text x="1826.3" y="286.2" font-size="10.3">Kliczew</text><text x="1354.8" y="295.8" font-size="10.3">Mir</text><text x="1477.4" y="294.6" font-size="10.3">Uzda</text><text x="458.9" y="267.2" font-size="10.8">Szczytno</text><text x="365.4" y="322.6" font-size="10.8">Nidzica</text><text x="296.4" y="315.6" font-size="10.8">o</text><text x="612.7" y="308.9" font-size="10.8">Kolno</text><text x="1710" y="339.3" font-size="10.3">Osipovichi</text><text x="635" y="372.0" font-size="10.8">Łomża</text><text x="358" y="390.2" font-size="10.8">Mława</text><text x="552.4" y="397.4" font-size="10.8">Ostrołęka</text><text x="1301.7" y="384.6" font-size="10.3">wicze</text><text x="1809.7" y="381.2" font-size="11.3">Bobrujsk</text><text x="1383.5" y="403.2" font-size="10.3">Kleck</text><text x="1533" y="413.4" font-size="10.3">Rejon słucki</text><text x="663.1" y="426.0" font-size="10.8">Zambrów</text><text x="1719" y="447.3" font-size="10.3">Glusk</text><text x="395.8" y="455.1" font-size="10.8">Ciechanów</text><text x="1430.2" y="464.5" font-size="10.3">Kolki</text><text x="605.5" y="468.7" font-size="10.8">Ostrów</text><text x="605.5" y="481.0" font-size="10.8">Mazowiecka</text><text x="698.5" y="504.6" font-size="10.8">Ciechan</text><text x="1528.6" y="478.3" font-size="11.3">Soligorsk</text><text x="1327.3" y="509.0" font-size="9.7">Khotynichskiy</text><text x="1327.3" y="521.2" font-size="9.7">sel'skiy</text><text x="1327.3" y="533.2" font-size="9.7">sovet</text><text x="1750.3" y="518.2" font-size="10.3">Oktiabrski</text><text x="357.2" y="522.3" font-size="10.8">Płońsk</text><text x="535.1" y="530.9" font-size="10.8">Wyszków</text><text x="448.9" y="583.1" font-size="10.8">Legionowo</text><text x="673.6" y="578.1" font-size="10.8">Sokołów</text><text x="673.6" y="590.4" font-size="10.8">Podlaski</text><text x="460.7" y="628.1" font-size="13.7">Warszawa</text><text x="1292" y="600.0" font-size="10.3">yn</text><text x="1412.3" y="621.1" font-size="10.3">Łuniniec</text><text x="1583.5" y="630.7" font-size="10.3">Żytkowicze</text><text x="668.6" y="645.7" font-size="10.8">Siedlce</text><text x="1685.8" y="654.3" font-size="10.3">Petrikov</text><text x="1298.5" y="659.4" font-size="10.3">ińsk</text><text x="463" y="670.1" font-size="10.4">Piaseczno</text><text x="1806.5" y="680.1" font-size="10.8">Mozyrz</text><text x="324" y="701.6" font-size="10.8">kierniewice</text><text x="436.3" y="724.2" font-size="10.8">Grójec</text><text x="559.8" y="717.6" font-size="10.8">Garwolin</text><text x="684.5" y="708.2" font-size="10.8">Łuków</text><text x="1416.7" y="720.3" font-size="10.8">Stolin</text><text x="1797" y="739.3" font-size="10.3">Jelsk</text><text x="337" y="752.0" font-size="10.8">Rawa Mazowiecka</text><text x="708" y="744.6" font-size="10.8">Radz</text><text x="708" y="757.6" font-size="10.8">Podl</text><text x="1305" y="741.2" font-size="10.3">rzeczne</text><text x="1905.6" y="779.6" font-size="10.8">Drom</text><text x="1912" y="720.3" font-size="10.8">C</text><text x="1370.7" y="802.7" font-size="10.8">Dąbrowica</text><text x="548.8" y="799.7" font-size="10.8">Kozienice</text><text x="1511.3" y="817.4" font-size="10.8">Glinnoye</text><text x="479.2" y="846.9" font-size="11.9">Radom</text><text x="341.5" y="855.0" font-size="11.3">Opoczno</text><text x="618.4" y="844.1" font-size="10.8">Puławy</text><text x="710" y="833.2" font-size="10.8">Luba</text><text x="1652.5" y="849.2" font-size="10.8">Begun'</text><text x="1255.7" y="863.9" font-size="10.3">Warasz</text><text x="1380.2" y="865.6" font-size="10.8">Sarny</text><text x="1737.8" y="867.9" font-size="10.8">Owrucz</text><text x="956.9" y="892.4" font-size="10.8">Luboml</text><text x="1067.8" y="897.6" font-size="10.8">Kowel</text><text x="1549.2" y="895.1" font-size="10.8">Olewsk</text><text x="715.6" y="896.3" font-size="11.3">Lublin</text><text x="1836.3" y="891.6" font-size="10.8">Polesskoye</text><text x="437.1" y="922.0" font-size="10.8">Skarżysko-Kamienna</text><text x="864.7" y="918.3" font-size="10.8">Chełm</text><text x="1225" y="926.6" font-size="10.8">Kolki</text><text x="1707.3" y="963.6" font-size="10.8">Korosteń</text><text x="523" y="964.6" font-size="10.8">Ostrowiec</text><text x="523" y="976.9" font-size="10.8">Świętokrzyski</text><text x="658.7" y="973.2" font-size="10.8">Kraśnik</text><text x="1159.4" y="975.5" font-size="10.8">Rożyszcze</text><text x="719.7" y="982.4" font-size="10.8">Zakrzew</text><text x="1574.8" y="984.4" font-size="10.8">Yemil'chino</text><text x="1004.7" y="991.6" font-size="10.8">Volodymyr</text><text x="1258.75" y="997.0" font-size="10.8">Cumań</text><text x="1351.7" y="985.0" font-size="10.8">Kostopol</text><text x="1450.1" y="997.5" font-size="10.8">Hubków</text><text x="308.5" y="1013.9" font-size="10.8">czowa</text><text x="811.9" y="1012.0" font-size="10.8">Zamość</text><text x="828.75" y="1026.6" font-size="10.8">Zamość</text><text x="1173.4" y="1016.8" font-size="11.3">Łuck</text><text x="977.5" y="1024.6" font-size="10.8">Nowowołyńsk</text><text x="1420.25" y="1036.2" font-size="10.8">Wielki</text><text x="1420" y="1048.6" font-size="10.8">Międzyrzecz</text><text x="1710.6" y="1024.8" font-size="11.3">Novaya</text><text x="1710.6" y="1037.5" font-size="11.3">Borovaya</text><text x="1844.5" y="1025.6" font-size="11.3">Irsha</text><text x="1812.6" y="1015.8" font-size="11.3">Malin</text><text x="1321" y="1053.3" font-size="10.8">Rowne</text><text x="1546" y="1053.3" font-size="10.8">Nowogród</text><text x="1544" y="1066.4" font-size="10.8">Wołyński</text><text x="351" y="1046.4" font-size="10.8">drzejów</text><text x="632" y="1064.6" font-size="10.8">Stalowa Wola</text><text x="740.4" y="1074.9" font-size="10.8">Biłgoraj</text><text x="532.2" y="1076.0" font-size="10.8">Osiek</text></g>
</svg>
</div>
<div class="a" style="left:4px;top:211px;width:289px;height:864px;background:#f8f8f7;overflow:hidden"><div style="position:absolute;left:20px;top:450px;width:260px;height:300px;border-radius:50%;background:radial-gradient(closest-side,rgba(255,255,255,.6),rgba(255,255,255,0))"></div></div>
<div class="a" style="left:11px;top:222px;width:270px;height:211px;background:#fff;border-radius:8px;box-shadow:0 2px 7px rgba(0,0,0,.09)"></div>
<div class="a" style="left:26px;top:239px;font-size:13px;font-weight:700;line-height:16px;color:#323232">Pelishchenskiy sel'skiy sovet, O...</div>
<svg class="a" style="left:248px;top:236px" width="19" height="19" viewBox="0 0 19 19"><circle cx="9.5" cy="9.5" r="8.5" fill="#fff" stroke="#444" stroke-width="1"/><path d="M5.5 9.5l4-3.5 4 3.5v3.8h-2.5v-2.3h-3v2.3H5.5z" fill="#333"/></svg>
<div class="a" style="left:26px;top:259px;font-size:10.5px;line-height:13px;color:#616161">O godz. 20:58 GMT+3</div>
<svg class="a" style="left:25px;top:290px" width="43" height="28" viewBox="0 0 43 28"><defs><linearGradient id="cl" x1="0" y1="0" x2="0" y2="1"><stop offset="0" stop-color="#8db4ec"/><stop offset=".55" stop-color="#c9daf3"/><stop offset="1" stop-color="#6d9be2"/></linearGradient></defs><path d="M9 27c-4.5 0-8-2.6-8-6.3 0-3.6 3-6.2 7-6.5C9.2 7.5 14.3 1 20.5 1c5.4 0 9.2 4 10.5 8.5 5.5-.3 11 3.3 11 9 0 5-3.8 8.5-9.5 8.5z" fill="url(#cl)"/></svg>
<div class="a" style="left:73px;top:309px;width:10px;height:2.2px;background:#262626"></div><div class="a" style="left:84px;top:289px;font-size:35px;line-height:40px;color:#262626;transform:scaleX(.8);transform-origin:left">1</div>
<div class="a" style="left:111px;top:294px;font-size:12.5px;line-height:14px;color:#444">°C</div>
<div class="a" style="left:113px;top:312px;width:11px;height:1px;background:#999"></div>
<div class="a" style="left:112px;top:314px;font-size:11px;line-height:12px;color:#aaa">°F</div>
<div class="a" style="left:133px;top:300px;font-size:12.5px;line-height:15px;color:#323232">Zachmurzenie całkowite</div>
<svg class="a" style="left:26px;top:344px" width="11" height="10" viewBox="0 0 11 10"><path d="M5.5 0.5L10.5 9.5H0.5z" fill="#f2b800"/><path d="M5.5 3.5v3" stroke="#3a2e00" stroke-width="1.1"/><circle cx="5.5" cy="8" r=".6" fill="#3a2e00"/></svg>
<div class="a" style="left:39px;top:342px;font-size:10.5px;line-height:13px;color:#262626">Dszcz i śng Średnie</div>
<svg class="a" style="left:26px;top:364px" width="11" height="11" viewBox="0 0 11 11"><circle cx="5.5" cy="5.5" r="5.5" fill="#1f6fd1"/><path d="M5.5 4.6v3.8" stroke="#fff" stroke-width="1.4"/><circle cx="5.5" cy="2.9" r=".8" fill="#fff"/></svg>
<div class="a" style="left:41.5px;top:364px;font-size:10.7px;line-height:13px;color:#262626">Najbliższe opady znajdują się 101 km stąd</div>
<div class="a" style="left:58px;top:391px;width:176px;height:28px;border-radius:14px;background:#ebebeb"></div>
<div class="a" style="left:85.5px;top:398px;font-size:11.6px;line-height:15px;color:#1a1a1a">Zobacz pełną prognozę</div>
<div class="a" style="left:286px;top:215px;width:4px;height:218px;border-radius:2px;background:#8f8f8f"></div>
<div class="a" style="left:11.5px;top:447px;font-size:13.5px;font-weight:700;line-height:16px;color:#575757">Alerty</div>
<div class="a" style="left:11px;top:472px;width:270px;height:49px;border-radius:6px;background:#e3e3e3;box-shadow:0 1px 2px rgba(0,0,0,.1)"></div><svg class="a" style="left:26px;top:485px" width="22" height="20" viewBox="0 0 22 20"><path d="M11 1.2c.5 0 1 .3 1.3.7l8.9 15.4c.6 1-.1 2.2-1.3 2.2H2.1C.9 19.5.2 18.3.8 17.3L9.7 1.9c.3-.4.8-.7 1.3-.7z" fill="#f2c20f"/><path d="M11 6.5v6" stroke="#1a1a1a" stroke-width="1.8"/><circle cx="11" cy="15.5" r="1.1" fill="#1a1a1a"/></svg><div class="a" style="left:58px;top:481px;font-size:12.6px;font-weight:700;line-height:15px;color:#1a1a1a">Deszcz ze śniegiem - Średni</div><svg class="a" style="left:231px;top:483px" width="8" height="12" viewBox="0 0 8 12"><path d="M1.5 1l5 5-5 5" stroke="#1a1a1a" stroke-width="1.5" fill="none"/></svg><div class="a" style="left:58px;top:498px;font-size:10.7px;line-height:13px;color:#666">niedz., 26 lis, 07:56</div>
<div class="a" style="left:11px;top:527px;width:270px;height:49px;border-radius:6px;background:#ffffff;box-shadow:0 1px 2px rgba(0,0,0,.1)"></div><svg class="a" style="left:26px;top:540px" width="22" height="20" viewBox="0 0 22 20"><path d="M11 1.2c.5 0 1 .3 1.3.7l8.9 15.4c.6 1-.1 2.2-1.3 2.2H2.1C.9 19.5.2 18.3.8 17.3L9.7 1.9c.3-.4.8-.7 1.3-.7z" fill="#f2c20f"/><path d="M11 6.5v6" stroke="#1a1a1a" stroke-width="1.8"/><circle cx="11" cy="15.5" r="1.1" fill="#1a1a1a"/></svg><div class="a" style="left:58px;top:536px;font-size:12.6px;font-weight:700;line-height:15px;color:#1a1a1a">Deszcz ze śniegiem - Średni</div><svg class="a" style="left:231px;top:538px" width="8" height="12" viewBox="0 0 8 12"><path d="M1.5 1l5 5-5 5" stroke="#1a1a1a" stroke-width="1.5" fill="none"/></svg><div class="a" style="left:58px;top:553px;font-size:10.7px;line-height:13px;color:#666">sob., 25 lis, 11:26</div>
<div class="a" style="left:11.5px;top:589px;font-size:13.8px;font-weight:700;line-height:16px;color:#575757">Warstwy pogody</div>
<div class="a" style="left:11px;top:615px;width:270px;height:112px;border-radius:7px;background:#fff;box-shadow:0 1px 2px rgba(0,0,0,.08)"></div>
<div class="a" style="left:22px;top:633px;font-size:14.2px;line-height:17px;color:#1a1a1a">Opady</div>
<div class="a" style="left:256px;top:631px;width:13px;height:13px;border-radius:50%;border:1px solid #9a9a9a;background:#fff"><i style="position:absolute;left:3px;top:3px;width:5px;height:5px;border-radius:50%;background:#1f6fd1"></i></div>
<div class="a" style="left:22px;top:664.6px;font-size:14.2px;line-height:17px;color:#1a1a1a">Prognoza akumulacji śniegu</div>
<div class="a" style="left:256px;top:662.6px;width:13px;height:13px;border-radius:50%;border:1px solid #9a9a9a;background:#fff"></div>
<div class="a" style="left:22px;top:697px;font-size:14.2px;line-height:17px;color:#1a1a1a">Prognoza całkowitej grubości pok...</div>
<div class="a" style="left:256px;top:695px;width:13px;height:13px;border-radius:50%;border:1px solid #9a9a9a;background:#fff"></div>
<div class="a" style="left:11.5px;top:739px;font-size:13.8px;font-weight:700;line-height:16px;color:#575757">Wiadomości</div>
<div class="a" style="left:11px;top:763px;width:270px;height:90px;border-radius:7px;background:#fff"></div>
<div class="a" style="left:26px;top:775px;font-size:13.6px;font-weight:700;line-height:21.4px;color:#3a3a3a;white-space:normal;width:158px">Kiedy zmienić letnie opony na zimowe? Czy po 1 listopada...</div>
<svg class="a" style="left:202px;top:777px;border-radius:5px" width="65" height="61" viewBox="0 0 65 61"><defs><clipPath id="tc"><rect width="65" height="61" rx="5"/></clipPath><filter id="tbl"><feGaussianBlur stdDeviation=".6"/></filter></defs><g clip-path="url(#tc)" filter="url(#tbl)"><rect width="65" height="61" fill="#8c8e92"/><path d="M0 0h40v20C30 14 18 20 14 34L0 40z" fill="#c2c4c6"/><rect x="0" y="0" width="5" height="61" fill="#c23a30"/><ellipse cx="34" cy="36" rx="17" ry="24" fill="#2c2c2c"/><ellipse cx="36" cy="36" rx="10" ry="14" fill="#9aa2ac"/><circle cx="36" cy="36" r="3" fill="#5a6068"/><path d="M42 0h23v61H50c2-12 0-25-4-35-2-8-4-16-4-26z" fill="#2f4a8c"/><path d="M48 8c6 0 10 4 12 10l-6 20-8-4z" fill="#3c5aa0"/><path d="M6 45c8-2 14 2 18 10l-2 6H6z" fill="#c8b8a8"/></g></svg>
<div class="a" style="left:4px;top:838px;width:290px;height:236px;background:#f6f6f6;border:1px solid #e2e2e2;border-radius:0 0 9px 9px;box-shadow:0 -1px 3px rgba(0,0,0,.05)"></div><div class="a" style="left:11px;top:844px;width:270px;height:224px;background:#fff;border-radius:6px"></div>
<svg class="a" style="left:11px;top:844px" width="270" height="141" viewBox="0 0 270 141"><defs><filter id="blr" x="-10%" y="-10%" width="120%" height="120%"><feGaussianBlur stdDeviation="3.5"/></filter><filter id="blr2"><feGaussianBlur stdDeviation="1.5"/></filter><radialGradient id="coin" cx=".5" cy=".5" r=".5"><stop offset="0" stop-color="#3a3636"/><stop offset=".8" stop-color="#2a2626"/><stop offset="1" stop-color="#1c1a1a"/></radialGradient><clipPath id="adclip"><rect width="270" height="141"/></clipPath></defs>
<g clip-path="url(#adclip)">
<rect width="270" height="141" fill="#5e5450"/>
<g filter="url(#blr)">
<rect x="-10" y="-10" width="290" height="50" fill="#8c7a78"/>
<ellipse cx="80" cy="18" rx="42" ry="22" fill="#a8605e"/>
<ellipse cx="25" cy="20" rx="28" ry="22" fill="#8a9aaa"/>
<ellipse cx="155" cy="12" rx="30" ry="20" fill="#5a80b0"/>
<ellipse cx="120" cy="45" rx="25" ry="30" fill="#3a4a5a"/>
<ellipse cx="20" cy="90" rx="25" ry="50" fill="#4a5a6a"/>
<ellipse cx="120" cy="110" rx="30" ry="35" fill="#7a5a3a"/>
<ellipse cx="150" cy="100" rx="20" ry="40" fill="#9a6a4a"/>
<ellipse cx="245" cy="80" rx="28" ry="22" fill="#a0503e"/>
<ellipse cx="228" cy="48" rx="18" ry="14" fill="#6a8cb4"/>
<path d="M15 141 L25 95 Q40 75 65 72 Q90 75 95 95 L100 141z" fill="#8aa6c4"/>
<ellipse cx="68" cy="52" rx="14" ry="17" fill="#2e2622"/>
<ellipse cx="70" cy="58" rx="10" ry="13" fill="#a07a62"/>
<rect x="40" y="100" width="55" height="8" fill="#b8a26a"/>
<path d="M105 58 L112 60 L92 141 L84 141z" fill="#d4b060"/>
<circle cx="108" cy="60" r="6" fill="#e0c070"/>
</g>
<g filter="url(#blr2)">
<path d="M128 46 Q132 36 150 28 Q175 18 195 8 Q205 0 215 0 L275 0 L275 141 L165 141 Q175 128 200 120 Q228 108 240 96 Q232 80 236 62 Q232 48 215 44 Q190 42 165 46 Q140 52 128 46z" fill="#ebebeb"/>
<path d="M236 62 Q250 60 262 72 L275 80 L275 20 Q255 30 236 40z" fill="#e2e2e2"/>
<ellipse cx="220" cy="20" rx="40" ry="16" fill="#f4f4f4"/>
<ellipse cx="235" cy="125" rx="45" ry="14" fill="#e8e8e8"/>
</g>
<circle cx="184" cy="83" r="44" fill="#c9c9c9" opacity=".9"/>
<circle cx="184" cy="83" r="41" fill="#8a8a8a"/>
<circle cx="184" cy="83" r="38" fill="#d8d8d8"/>
<circle cx="184" cy="83" r="35" fill="url(#coin)"/>
<path d="M162 97 Q167 91 173 93 Q176 83 179 74 Q181 64 186 60 Q190 65 189 73 Q196 77 201 84 Q206 80 209 74 L211 94 Q205 99 199 101 L203 111 L197 108 L186 104 L176 111 L171 108 L173 100z" fill="#9a9898" opacity=".8"/><path d="M176 80 Q186 78 196 86 M172 98 Q186 92 204 98" stroke="#d0d0d0" stroke-width="1.2" fill="none"/><path d="M155 70 Q170 55 184 54 Q200 55 213 70" fill="none" stroke="#9a9a9a" stroke-width="1.5" stroke-dasharray="2 1.5"/>
</g></svg>
<div class="a" style="left:26px;top:993px;font-size:14px;font-weight:700;line-height:17px;color:#1a1a1a">Darmowa pamiątka dla każdego</div>
<div class="a" style="left:26px;top:1043px;font-size:10.6px;line-height:13px;color:#444">Skarbnica Narodowa</div>
<svg class="a" style="left:249px;top:1043px" width="15" height="14" viewBox="0 0 15 14"><path d="M2 1.5l11 5.5-11 5.5z" fill="none" stroke="#1ba1d8" stroke-width="1.8" stroke-linejoin="round"/><path d="M5 6v5" stroke="#1ba1d8" stroke-width="1.6"/></svg>
<div class="a" style="left:719px;top:297px;width:569px;height:536px;background:#e8e9eb;border-radius:8px;box-shadow:0 6px 18px rgba(0,0,0,.22);overflow:hidden">
<div style="position:absolute;left:0;top:0;width:569px;height:48px;background:#efc416"></div>
</div>
<svg class="a" style="left:739px;top:309px" width="26" height="23" viewBox="0 0 26 23"><path d="M13 1.3c.7 0 1.3.4 1.6.9l10.6 18.3c.7 1.2-.2 2.6-1.6 2.6H2.4C1 23.1.1 21.7.8 20.5L11.4 2.2c.3-.5.9-.9 1.6-.9z" fill="#3d3418"/><path d="M13 7.5v7" stroke="#efc416" stroke-width="2.2" stroke-linecap="round"/><circle cx="13" cy="18.2" r="1.4" fill="#efc416"/></svg>
<div class="a" style="left:774.5px;top:305px;font-size:12.2px;font-weight:700;line-height:15px;color:#2e2a17">Deszcz ze śniegiem - Średni</div>
<div class="a" style="left:774.5px;top:323px;font-size:10.3px;line-height:13px;color:#3a3520">Niedz., 26 Lis, 07:56 GMT+3</div>
<svg class="a" style="left:1249px;top:314px" width="13" height="13" viewBox="0 0 13 13"><path d="M1 1l11 11M12 1L1 12" stroke="#2e2a17" stroke-width="1.4"/></svg>
<div class="a" style="left:730px;top:357px;width:270px;height:464px;border-radius:8px;overflow:hidden;background:radial-gradient(ellipse 130px 150px at 135px 230px,#c3c6cd,#ced1d7 70%,#d2d4d9)">
<div style="position:absolute;left:0;top:0;width:270px;height:141px;overflow:hidden;background:linear-gradient(170deg,#2c3b5e 0%,#405a8a 30%,#3f5a8a 55%,#2f4670 100%)">
<div style="position:absolute;left:0;top:0;width:270px;height:141px;background:radial-gradient(ellipse 120px 90px at 30px 60px,rgba(110,140,190,.45),rgba(110,140,190,0))"></div>
<div style="position:absolute;left:100px;top:-25px;width:190px;height:85px;background:radial-gradient(ellipse 100px 42px at 100px 30px,rgba(185,195,212,.85),rgba(185,195,212,.5) 55%,rgba(185,195,212,0))"></div>
<div style="position:absolute;left:150px;top:95px;width:140px;height:60px;background:radial-gradient(ellipse 70px 30px at 70px 45px,rgba(190,205,225,.5),rgba(190,205,225,0))"></div>
<svg width="270" height="141" viewBox="0 0 270 141" style="position:absolute;left:0;top:0" fill="none" stroke="#e3eaf5" stroke-linecap="round"><defs><filter id="fb"><feGaussianBlur stdDeviation=".35"/></filter></defs><g filter="url(#fb)"><path d="M210.9 29.1L197.2 42.6" stroke-width="0.8" opacity="0.45"/><path d="M209.4 30.6L205.1 31.1M209.4 30.6L207.6 34.5M207.9 32.1L204.7 32.4M207.9 32.1L207.2 35.2M206.3 33.6L202.5 35.2M206.3 33.6L205.2 37.6M204.8 35.1L202.8 35.6M204.8 35.1L204.3 37.2M203.3 36.6L202.0 37.1M203.3 36.6L202.8 37.9M201.7 38.1L198.7 38.6M201.7 38.1L200.6 41.0M200.2 39.6L197.8 40.6M200.2 39.6L199.6 42.1M198.7 41.1L197.6 41.6M198.7 41.1L198.5 42.3" stroke-width=".7" opacity="0.34"/><path d="M143.9 2.8L126.8 9.7" stroke-width="0.8" opacity="0.45"/><path d="M142.0 3.5L139.3 2.7M142.0 3.5L140.3 5.8M140.1 4.3L136.3 4.2M140.1 4.3L138.3 7.6M138.2 5.1L134.9 4.0M138.2 5.1L136.5 8.2M136.3 5.9L134.1 5.7M136.3 5.9L134.8 7.5M134.4 6.6L132.8 6.7M134.4 6.6L133.3 7.9M132.5 7.4L130.1 7.5M132.5 7.4L131.1 9.4M130.6 8.2L128.9 8.1M130.6 8.2L129.7 9.6M128.7 9.0L127.0 8.8M128.7 9.0L127.7 10.3" stroke-width=".7" opacity="0.34"/><path d="M224.2 -5.1L216.5 -1.9" stroke-width="0.8" opacity="0.45"/><path d="M222.3 -4.3L218.4 -5.3M222.3 -4.3L219.4 -1.6M220.3 -3.5L217.0 -3.8M220.3 -3.5L218.4 -0.8M218.4 -2.7L217.3 -2.7M218.4 -2.7L217.7 -1.9" stroke-width=".7" opacity="0.34"/><path d="M264.7 1.8L252.3 16.4" stroke-width="0.8" opacity="0.45"/><path d="M263.4 3.4L258.8 5.3M263.4 3.4L262.2 8.2M262.0 5.1L258.7 5.8M262.0 5.1L260.9 8.2M260.6 6.7L257.0 7.5M260.6 6.7L260.4 10.4M259.2 8.3L257.7 8.6M259.2 8.3L258.7 9.8M257.8 9.9L255.8 10.5M257.8 9.9L257.7 12.0M256.4 11.5L254.5 11.9M256.4 11.5L256.1 13.4M255.0 13.1L253.5 13.8M255.0 13.1L254.5 14.7M253.6 14.7L252.7 15.2M253.6 14.7L253.5 15.8" stroke-width=".7" opacity="0.34"/><path d="M271.5 0.1L285.3 14.3" stroke-width="0.8" opacity="0.45"/><path d="M273.0 1.7L274.0 5.1M273.0 1.7L276.4 3.0M274.5 3.2L275.0 6.7M274.5 3.2L277.9 4.3M276.1 4.8L277.2 7.4M276.1 4.8L278.8 5.2M277.6 6.4L278.0 7.9M277.6 6.4L279.1 6.6M279.2 8.0L279.4 9.6M279.2 8.0L280.8 8.2M280.7 9.6L281.1 12.1M280.7 9.6L283.0 10.6M282.2 11.1L282.9 12.9M282.2 11.1L284.1 11.4M283.8 12.7L284.1 14.1M283.8 12.7L285.2 12.9" stroke-width=".7" opacity="0.34"/><path d="M248.1 40.8L247.0 54.6" stroke-width="0.8" opacity="0.45"/><path d="M247.9 43.1L245.6 46.5M247.9 43.1L249.4 46.9M247.7 45.4L246.5 47.8M247.7 45.4L248.8 47.9M247.5 47.7L244.9 50.5M247.5 47.7L249.3 51.1M247.4 50.0L246.2 51.9M247.4 50.0L248.0 52.2M247.2 52.3L246.2 53.4M247.2 52.3L248.0 53.6" stroke-width=".7" opacity="0.34"/><path d="M168.5 31.3L157.4 43.3" stroke-width="0.8" opacity="0.45"/><path d="M167.1 32.8L163.2 33.6M167.1 32.8L166.1 36.6M165.8 34.3L162.2 35.7M165.8 34.3L164.9 38.0M164.4 35.8L160.8 36.6M164.4 35.8L163.3 39.3M163.0 37.3L159.4 38.2M163.0 37.3L162.2 40.9M161.6 38.8L160.3 39.1M161.6 38.8L161.2 40.0M160.2 40.3L157.9 41.0M160.2 40.3L159.9 42.6M158.8 41.8L156.8 42.1M158.8 41.8L158.2 43.7" stroke-width=".7" opacity="0.34"/><path d="M214.3 28.9L205.1 36.8" stroke-width="0.8" opacity="0.45"/><path d="M212.8 30.2L208.3 30.5M212.8 30.2L211.6 34.5M211.3 31.5L206.9 31.7M211.3 31.5L209.8 35.6M209.7 32.9L207.1 33.7M209.7 32.9L209.1 35.5M208.2 34.2L205.1 34.8M208.2 34.2L207.3 37.2M206.6 35.5L204.4 35.7M206.6 35.5L205.6 37.5" stroke-width=".7" opacity="0.34"/><path d="M236.4 21.0L229.9 32.4" stroke-width="0.8" opacity="0.45"/><path d="M235.3 22.9L231.9 24.5M235.3 22.9L235.5 26.7M234.3 24.8L231.5 27.1M234.3 24.8L233.8 28.4M233.2 26.7L231.0 27.8M233.2 26.7L232.9 29.2M232.1 28.6L229.7 29.8M232.1 28.6L231.7 31.2M231.0 30.5L229.5 31.5M231.0 30.5L230.7 32.3" stroke-width=".7" opacity="0.34"/><path d="M131.6 7.9L136.5 17.0" stroke-width="0.8" opacity="0.45"/><path d="M132.6 9.7L132.6 11.6M132.6 9.7L134.2 10.7M133.6 11.5L133.4 14.6M133.6 11.5L136.1 13.4M134.6 13.3L135.0 16.6M134.6 13.3L137.3 15.2M135.5 15.1L135.5 16.7M135.5 15.1L136.7 16.1" stroke-width=".7" opacity="0.34"/><path d="M244.7 10.7L255.7 21.4" stroke-width="0.8" opacity="0.45"/><path d="M246.3 12.2L246.8 14.3M246.3 12.2L248.3 12.9M247.8 13.8L248.2 17.1M247.8 13.8L251.1 14.2M249.4 15.3L249.8 17.8M249.4 15.3L251.9 15.8M251.0 16.8L251.8 18.8M251.0 16.8L253.1 17.3M252.5 18.4L252.8 20.6M252.5 18.4L254.8 18.6M254.1 19.9L254.7 21.8M254.1 19.9L256.1 20.1" stroke-width=".7" opacity="0.34"/><path d="M110.2 -2.6L105.4 12.0" stroke-width="0.8" opacity="0.45"/><path d="M109.5 -0.5L107.7 0.9M109.5 -0.5L110.3 1.6M108.8 1.6L106.8 3.5M108.8 1.6L109.1 4.3M108.1 3.7L106.2 4.9M108.1 3.7L108.5 5.9M107.5 5.8L104.5 7.7M107.5 5.8L108.3 9.2M106.8 7.9L105.4 8.7M106.8 7.9L107.1 9.5M106.1 9.9L104.9 11.1M106.1 9.9L106.7 11.5" stroke-width=".7" opacity="0.34"/><path d="M189.7 6.3L188.5 15.7" stroke-width="0.8" opacity="0.45"/><path d="M189.4 8.7L187.3 11.5M189.4 8.7L190.5 12.0M189.1 11.0L186.8 13.4M189.1 11.0L189.8 14.2M188.8 13.4L187.6 15.1M188.8 13.4L189.9 15.2" stroke-width=".7" opacity="0.34"/><path d="M236.7 4.3L239.7 13.7" stroke-width="0.8" opacity="0.45"/><path d="M237.4 6.6L236.8 11.2M237.4 6.6L241.0 9.6M238.2 9.0L237.5 11.4M238.2 9.0L240.1 10.6M238.9 11.3L238.7 13.8M238.9 11.3L241.0 12.8" stroke-width=".7" opacity="0.34"/><path d="M158.7 18.7L160.7 30.1" stroke-width="0.8" opacity="0.45"/><path d="M159.1 21.0L158.0 24.1M159.1 21.0L161.1 23.7M159.5 23.2L158.2 26.5M159.5 23.2L161.3 26.3M159.9 25.5L159.3 27.3M159.9 25.5L161.2 26.7M160.3 27.8L159.3 30.3M160.3 27.8L161.6 30.1" stroke-width=".7" opacity="0.34"/><path d="M236.1 13.4L230.7 29.0" stroke-width="0.8" opacity="0.45"/><path d="M235.4 15.3L232.5 17.9M235.4 15.3L236.7 19.0M234.7 17.3L232.7 19.2M234.7 17.3L235.6 20.0M234.1 19.2L232.6 20.7M234.1 19.2L234.7 21.2M233.4 21.2L232.1 22.1M233.4 21.2L233.8 22.7M232.7 23.1L231.2 24.7M232.7 23.1L233.4 25.2M232.1 25.1L230.1 27.2M232.1 25.1L232.6 27.9M231.4 27.0L230.0 28.3M231.4 27.0L231.6 28.9" stroke-width=".7" opacity="0.34"/><path d="M134.9 21.3L128.4 27.3" stroke-width="0.8" opacity="0.45"/><path d="M133.2 22.8L130.9 23.0M133.2 22.8L132.8 25.1M131.6 24.3L128.8 25.4M131.6 24.3L130.9 27.2M130.0 25.8L127.0 25.9M130.0 25.8L129.3 28.7" stroke-width=".7" opacity="0.34"/><path d="M117.9 34.1L124.2 48.5" stroke-width="0.8" opacity="0.45"/><path d="M118.8 36.2L117.9 41.0M118.8 36.2L122.4 39.5M119.7 38.2L119.1 40.6M119.7 38.2L121.6 39.9M120.6 40.3L120.4 43.3M120.6 40.3L122.9 42.4M121.5 42.3L121.7 45.1M121.5 42.3L123.5 44.3M122.4 44.4L122.5 46.3M122.4 44.4L123.8 45.8M123.3 46.5L123.0 48.4M123.3 46.5L125.1 47.4" stroke-width=".7" opacity="0.34"/><path d="M131.8 13.6L135.0 28.4" stroke-width="0.8" opacity="0.45"/><path d="M132.2 15.7L130.7 18.7M132.2 15.7L134.4 18.3M132.7 17.8L132.0 19.5M132.7 17.8L133.7 19.3M133.1 20.0L132.2 22.9M133.1 20.0L135.6 21.9M133.6 22.1L132.7 24.5M133.6 22.1L135.2 24.1M134.1 24.2L133.6 26.4M134.1 24.2L135.7 25.7M134.5 26.3L134.2 28.1M134.5 26.3L135.6 27.8" stroke-width=".7" opacity="0.34"/><path d="M170.1 28.8L178.0 43.4" stroke-width="0.8" opacity="0.45"/><path d="M171.1 30.7L171.6 34.6M171.1 30.7L174.6 32.5M172.1 32.5L172.3 34.4M172.1 32.5L173.8 33.5M173.1 34.3L172.8 36.5M173.1 34.3L175.0 35.5M174.1 36.1L173.8 38.3M174.1 36.1L175.7 37.6M175.1 37.9L175.4 40.7M175.1 37.9L177.3 39.7M176.1 39.8L175.8 42.7M176.1 39.8L178.4 41.5M177.0 41.6L176.8 42.7M177.0 41.6L178.1 42.1" stroke-width=".7" opacity="0.34"/><path d="M242.9 -1.0L237.8 10.1" stroke-width="0.8" opacity="0.45"/><path d="M242.1 0.8L240.1 2.4M242.1 0.8L242.4 3.4M241.2 2.7L239.2 4.3M241.2 2.7L241.1 5.3M240.4 4.5L237.4 6.4M240.4 4.5L241.0 7.9M239.5 6.4L237.6 7.4M239.5 6.4L239.7 8.5M238.6 8.2L236.9 9.4M238.6 8.2L239.0 10.3" stroke-width=".7" opacity="0.34"/><path d="M174.1 -3.2L181.6 4.1" stroke-width="0.8" opacity="0.45"/><path d="M175.6 -1.7L175.8 0.2M175.6 -1.7L177.4 -1.2M177.1 -0.3L178.6 2.9M177.1 -0.3L180.5 0.6M178.6 1.2L179.3 4.4M178.6 1.2L181.7 2.1M180.1 2.6L180.8 4.4M180.1 2.6L181.8 3.3" stroke-width=".7" opacity="0.34"/><path d="M135.8 10.7L137.0 29.3" stroke-width="0.8" opacity="0.45"/><path d="M135.9 12.8L135.0 15.0M135.9 12.8L137.1 14.9M136.0 14.8L135.2 16.9M136.0 14.8L137.1 16.8M136.2 16.9L135.3 19.7M136.2 16.9L138.1 19.1M136.3 19.0L134.9 20.9M136.3 19.0L137.8 20.9M136.4 21.0L135.2 23.6M136.4 21.0L138.4 23.2M136.6 23.1L135.9 24.3M136.6 23.1L137.3 24.3M136.7 25.1L135.5 27.1M136.7 25.1L137.8 27.2M136.8 27.2L136.5 28.4M136.8 27.2L137.4 28.3" stroke-width=".7" opacity="0.34"/><path d="M122.7 12.1L111.3 16.9" stroke-width="0.8" opacity="0.45"/><path d="M120.8 12.9L118.0 12.6M120.8 12.9L118.9 15.0M118.9 13.7L115.3 13.0M118.9 13.7L116.4 16.3M117.0 14.5L115.0 14.1M117.0 14.5L116.0 16.2M115.1 15.3L112.5 15.1M115.1 15.3L113.9 17.6M113.2 16.1L112.2 16.1M113.2 16.1L112.7 17.0" stroke-width=".7" opacity="0.34"/><path d="M176.4 -5.8L171.0 13.4" stroke-width="0.8" opacity="0.45"/><path d="M175.8 -3.6L173.4 -1.0M175.8 -3.6L176.2 -0.1M175.2 -1.5L173.7 -0.4M175.2 -1.5L175.7 0.4M174.6 0.6L172.1 4.0M174.6 0.6L175.3 4.8M174.0 2.7L172.9 3.9M174.0 2.7L174.2 4.3M173.4 4.9L172.1 6.3M173.4 4.9L173.8 6.8M172.8 7.0L172.1 8.0M172.8 7.0L173.4 8.2M172.2 9.1L171.2 10.1M172.2 9.1L172.5 10.5M171.6 11.2L170.5 12.7M171.6 11.2L172.0 13.0" stroke-width=".7" opacity="0.34"/><path d="M127.5 19.1L114.3 26.6" stroke-width="0.8" opacity="0.45"/><path d="M125.6 20.2L121.1 20.6M125.6 20.2L122.7 23.7M123.7 21.2L120.5 21.2M123.7 21.2L122.1 24.0M121.8 22.3L119.4 22.2M121.8 22.3L120.7 24.5M119.9 23.4L116.5 23.6M119.9 23.4L118.2 26.3M118.1 24.4L115.3 24.7M118.1 24.4L116.3 26.6M116.2 25.5L114.7 25.7M116.2 25.5L115.5 26.9" stroke-width=".7" opacity="0.34"/><path d="M242.7 7.6L247.8 15.1" stroke-width="0.8" opacity="0.45"/><path d="M244.0 9.5L244.6 11.9M244.0 9.5L246.2 10.6M245.3 11.3L245.8 14.1M245.3 11.3L247.6 12.9M246.6 13.2L247.1 15.6M246.6 13.2L248.6 14.5" stroke-width=".7" opacity="0.34"/><path d="M156.3 10.7L164.4 20.9" stroke-width="0.8" opacity="0.45"/><path d="M157.7 12.4L157.8 15.2M157.7 12.4L160.3 13.4M159.0 14.1L159.4 18.2M159.0 14.1L163.0 15.3M160.4 15.8L160.8 18.6M160.4 15.8L163.1 16.6M161.7 17.5L161.7 20.1M161.7 17.5L164.2 18.3M163.1 19.2L163.5 21.4M163.1 19.2L165.2 19.8" stroke-width=".7" opacity="0.34"/><path d="M171.9 -1.5L178.7 6.0" stroke-width="0.8" opacity="0.45"/><path d="M173.3 0.0L173.7 2.5M173.3 0.0L175.7 1.0M174.6 1.5L174.8 3.2M174.6 1.5L176.3 2.0M176.0 3.0L176.5 4.2M176.0 3.0L177.2 3.6M177.3 4.5L177.5 6.2M177.3 4.5L179.0 4.7" stroke-width=".7" opacity="0.34"/><path d="M209.1 3.6L208.8 15.9" stroke-width="0.8" opacity="0.45"/><path d="M209.1 5.6L208.0 8.3M209.1 5.6L210.5 8.1M209.0 7.7L206.7 10.8M209.0 7.7L210.4 11.3M209.0 9.7L207.8 12.2M209.0 9.7L210.4 12.0M208.9 11.8L207.6 13.4M208.9 11.8L210.1 13.5M208.9 13.8L208.3 14.9M208.9 13.8L209.6 14.8" stroke-width=".7" opacity="0.34"/><path d="M184.7 13.7L183.8 30.9" stroke-width="0.8" opacity="0.45"/><path d="M184.6 15.9L181.9 19.9M184.6 15.9L187.5 19.8M184.5 18.0L183.0 21.2M184.5 18.0L186.4 20.9M184.3 20.2L183.3 22.6M184.3 20.2L185.9 22.3M184.2 22.3L183.4 23.5M184.2 22.3L184.9 23.6M184.1 24.4L182.5 27.2M184.1 24.4L185.3 27.4M184.0 26.6L183.3 28.1M184.0 26.6L184.8 28.0M183.9 28.7L183.0 30.0M183.9 28.7L184.5 30.2" stroke-width=".7" opacity="0.34"/><path d="M167.0 4.4L150.2 11.2" stroke-width="0.8" opacity="0.45"/><path d="M165.1 5.2L160.6 4.3M165.1 5.2L162.1 8.7M163.3 5.9L161.2 5.4M163.3 5.9L161.9 7.6M161.4 6.7L159.7 6.6M161.4 6.7L160.2 7.9M159.5 7.4L156.4 6.5M159.5 7.4L157.2 9.8M157.7 8.2L154.5 7.9M157.7 8.2L155.9 10.8M155.8 8.9L152.9 8.4M155.8 8.9L154.2 11.5M154.0 9.7L152.2 9.8M154.0 9.7L152.9 11.1M152.1 10.5L150.2 10.4M152.1 10.5L150.9 11.9" stroke-width=".7" opacity="0.34"/><path d="M161.4 -6.6L164.1 5.6" stroke-width="0.8" opacity="0.45"/><path d="M161.8 -4.6L160.6 -1.5M161.8 -4.6L164.0 -2.1M162.3 -2.5L160.6 1.4M162.3 -2.5L165.7 0.2M162.8 -0.5L161.7 2.4M162.8 -0.5L164.9 1.8M163.2 1.5L162.5 4.3M163.2 1.5L165.2 3.6M163.7 3.6L163.0 5.7M163.7 3.6L165.0 5.3" stroke-width=".7" opacity="0.34"/><path d="M122.6 -3.6L124.5 11.2" stroke-width="0.8" opacity="0.45"/><path d="M122.9 -1.5L120.9 2.3M122.9 -1.5L125.2 2.0M123.1 0.6L121.8 4.7M123.1 0.6L126.0 3.9M123.4 2.7L122.6 4.2M123.4 2.7L124.5 4.0M123.7 4.8L121.9 7.9M123.7 4.8L126.0 7.5M124.0 7.0L122.7 9.5M124.0 7.0L125.7 9.1M124.2 9.1L123.7 10.3M124.2 9.1L125.2 10.0" stroke-width=".7" opacity="0.34"/><path d="M148.7 40.7L145.4 53.0" stroke-width="0.8" opacity="0.45"/><path d="M148.2 42.8L146.9 44.1M148.2 42.8L148.4 44.6M147.6 44.8L144.9 46.9M147.6 44.8L149.0 48.0M147.1 46.9L145.1 49.0M147.1 46.9L147.4 49.8M146.5 48.9L144.6 50.7M146.5 48.9L147.4 51.4M145.9 51.0L144.6 52.0M145.9 51.0L146.2 52.6" stroke-width=".7" opacity="0.34"/><path d="M159.5 5.4L151.7 22.4" stroke-width="0.8" opacity="0.45"/><path d="M158.6 7.3L156.6 8.6M158.6 7.3L159.1 9.7M157.8 9.2L156.0 10.9M157.8 9.2L158.0 11.6M156.9 11.1L153.4 12.9M156.9 11.1L157.6 14.9M156.0 13.0L154.0 14.5M156.0 13.0L156.3 15.5M155.2 14.9L152.5 17.0M155.2 14.9L155.2 18.3M154.3 16.8L152.1 17.8M154.3 16.8L154.2 19.2M153.4 18.6L152.6 19.4M153.4 18.6L153.5 19.8M152.5 20.5L151.1 21.8M152.5 20.5L152.5 22.5" stroke-width=".7" opacity="0.34"/><path d="M206.3 24.3L197.2 38.4" stroke-width="0.8" opacity="0.45"/><path d="M205.2 26.1L203.4 27.0M205.2 26.1L205.3 28.1M204.0 27.8L200.1 30.2M204.0 27.8L204.4 32.4M202.9 29.6L199.8 30.6M202.9 29.6L202.4 32.9M201.8 31.4L198.9 32.4M201.8 31.4L201.6 34.5M200.6 33.1L199.4 33.9M200.6 33.1L200.4 34.6M199.5 34.9L198.4 35.6M199.5 34.9L199.5 36.2M198.4 36.6L197.3 37.1M198.4 36.6L198.4 37.8" stroke-width=".7" opacity="0.34"/><path d="M242.3 32.2L231.1 47.7" stroke-width="0.8" opacity="0.45"/><path d="M241.0 33.9L236.4 35.8M241.0 33.9L241.3 38.9M239.8 35.6L238.1 36.7M239.8 35.6L239.3 37.6M238.6 37.4L236.6 38.3M238.6 37.4L238.3 39.5M237.3 39.1L234.3 40.2M237.3 39.1L236.5 42.2M236.1 40.8L234.0 41.7M236.1 40.8L235.8 43.1M234.8 42.5L233.5 43.1M234.8 42.5L234.6 44.0M233.6 44.3L231.5 45.2M233.6 44.3L233.8 46.6M232.4 46.0L230.3 47.3M232.4 46.0L232.4 48.5" stroke-width=".7" opacity="0.34"/><path d="M226.8 6.8L234.9 17.9" stroke-width="0.8" opacity="0.45"/><path d="M228.2 8.7L228.3 11.6M228.2 8.7L231.0 9.4M229.5 10.5L230.0 13.1M229.5 10.5L232.0 11.6M230.9 12.4L230.9 15.5M230.9 12.4L233.8 13.5M232.2 14.2L232.5 16.0M232.2 14.2L234.0 14.7M233.6 16.1L234.1 17.9M233.6 16.1L235.3 16.9" stroke-width=".7" opacity="0.34"/><path d="M148.5 25.3L155.9 33.8" stroke-width="0.8" opacity="0.45"/><path d="M150.0 27.0L150.4 29.0M150.0 27.0L152.0 27.3M151.5 28.7L152.2 31.6M151.5 28.7L154.4 29.2M153.0 30.4L153.3 31.8M153.0 30.4L154.4 30.7M154.5 32.1L154.6 33.1M154.5 32.1L155.4 32.5" stroke-width=".7" opacity="0.34"/><path d="M112.7 4.5L111.6 17.1" stroke-width="0.8" opacity="0.45"/><path d="M112.5 6.6L111.0 9.7M112.5 6.6L113.6 9.9M112.3 8.7L109.9 12.3M112.3 8.7L114.1 12.7M112.1 10.8L111.3 12.2M112.1 10.8L113.0 12.1M111.9 12.9L110.4 15.1M111.9 12.9L112.7 15.4M111.7 15.0L110.6 16.3M111.7 15.0L112.4 16.5" stroke-width=".7" opacity="0.34"/><path d="M206.2 37.1L199.0 51.0" stroke-width="0.8" opacity="0.45"/><path d="M205.1 39.1L203.7 40.4M205.1 39.1L205.4 41.0M204.1 41.1L201.5 42.3M204.1 41.1L204.5 43.9M203.1 43.1L199.9 45.3M203.1 43.1L203.9 46.8M202.0 45.0L199.3 46.3M202.0 45.0L201.8 48.1M201.0 47.0L198.8 48.5M201.0 47.0L201.6 49.7M200.0 49.0L197.9 50.7M200.0 49.0L200.0 51.7" stroke-width=".7" opacity="0.34"/><path d="M153.9 15.5L158.2 30.9" stroke-width="0.8" opacity="0.45"/><path d="M154.5 17.7L154.2 19.9M154.5 17.7L156.1 19.3M155.1 19.9L154.7 21.7M155.1 19.9L156.6 21.0M155.7 22.1L155.2 25.8M155.7 22.1L158.0 25.2M156.3 24.3L155.1 27.2M156.3 24.3L158.7 26.5M157.0 26.5L156.7 27.9M157.0 26.5L158.1 27.3M157.6 28.7L157.4 31.3M157.6 28.7L159.2 30.7" stroke-width=".7" opacity="0.34"/><path d="M179.5 5.3L171.4 14.8" stroke-width="0.8" opacity="0.45"/><path d="M178.2 6.9L174.4 8.8M178.2 6.9L177.4 11.1M176.8 8.5L172.6 9.7M176.8 8.5L175.4 12.6M175.5 10.1L173.9 10.6M175.5 10.1L175.1 11.7M174.1 11.7L172.2 12.3M174.1 11.7L173.8 13.6M172.8 13.2L170.3 14.4M172.8 13.2L172.3 15.9" stroke-width=".7" opacity="0.34"/><path d="M152.6 19.3L146.7 26.9" stroke-width="0.8" opacity="0.45"/><path d="M151.1 21.2L148.2 22.1M151.1 21.2L150.2 24.2M149.7 23.1L146.7 24.4M149.7 23.1L149.2 26.3M148.2 25.0L146.0 25.6M148.2 25.0L147.6 27.1" stroke-width=".7" opacity="0.34"/><path d="M191.1 -6.1L191.9 6.0" stroke-width="0.8" opacity="0.45"/><path d="M191.2 -4.1L190.5 -2.3M191.2 -4.1L192.2 -2.5M191.4 -2.0L189.4 0.8M191.4 -2.0L193.1 0.9M191.5 -0.0L190.1 2.3M191.5 -0.0L193.3 2.0M191.6 2.0L189.7 4.6M191.6 2.0L193.2 4.8M191.7 4.0L191.0 5.1M191.7 4.0L192.3 5.2" stroke-width=".7" opacity="0.34"/><path d="M182.7 28.8L179.7 41.1" stroke-width="0.8" opacity="0.45"/><path d="M182.2 30.9L179.2 34.5M182.2 30.9L183.6 35.4M181.7 32.9L179.4 36.1M181.7 32.9L182.6 36.7M181.2 35.0L179.4 36.8M181.2 35.0L181.7 37.5M180.7 37.0L179.5 38.8M180.7 37.0L181.0 39.2M180.2 39.1L179.3 40.4M180.2 39.1L180.9 40.5" stroke-width=".7" opacity="0.34"/><path d="M152.7 5.8L140.9 17.9" stroke-width="0.8" opacity="0.45"/><path d="M151.2 7.3L148.5 7.7M151.2 7.3L150.6 9.9M149.7 8.8L146.9 9.5M149.7 8.8L148.8 11.5M148.3 10.3L146.0 10.7M148.3 10.3L147.7 12.5M146.8 11.9L143.5 13.2M146.8 11.9L145.5 15.2M145.3 13.4L144.0 13.6M145.3 13.4L145.0 14.7M143.8 14.9L142.8 15.4M143.8 14.9L143.7 16.0M142.4 16.4L140.6 16.7M142.4 16.4L141.7 18.0" stroke-width=".7" opacity="0.34"/><path d="M205.4 -2.1L196.3 10.2" stroke-width="0.8" opacity="0.45"/><path d="M204.1 -0.4L200.8 1.5M204.1 -0.4L204.3 3.4M202.8 1.4L201.1 2.4M202.8 1.4L202.7 3.4M201.5 3.2L200.0 4.1M201.5 3.2L201.3 4.9M200.2 4.9L197.5 5.7M200.2 4.9L200.1 7.7M198.9 6.7L197.7 7.1M198.9 6.7L198.9 8.0M197.6 8.4L196.5 8.8M197.6 8.4L197.3 9.6" stroke-width=".7" opacity="0.34"/><path d="M158.4 -7.9L149.1 2.8" stroke-width="0.8" opacity="0.45"/><path d="M157.1 -6.4L152.6 -4.8M157.1 -6.4L155.6 -1.9M155.7 -4.9L153.6 -3.9M155.7 -4.9L155.6 -2.6M154.4 -3.3L152.6 -2.4M154.4 -3.3L153.9 -1.4M153.1 -1.8L151.7 -1.3M153.1 -1.8L152.8 -0.3M151.7 -0.3L149.5 0.8M151.7 -0.3L151.0 2.0M150.4 1.3L148.7 1.7M150.4 1.3L150.0 3.0" stroke-width=".7" opacity="0.34"/><path d="M202.9 37.6L208.9 47.1" stroke-width="0.8" opacity="0.45"/><path d="M204.1 39.5L204.2 42.8M204.1 39.5L207.2 40.6M205.3 41.4L205.3 44.4M205.3 41.4L207.9 42.8M206.5 43.3L206.3 46.3M206.5 43.3L209.1 44.9M207.7 45.2L207.9 46.4M207.7 45.2L208.8 45.8" stroke-width=".7" opacity="0.34"/><path d="M254.1 5.2L247.4 19.4" stroke-width="0.8" opacity="0.45"/><path d="M253.2 7.3L249.5 10.5M253.2 7.3L254.0 12.1M252.2 9.3L250.3 11.1M252.2 9.3L252.5 11.9M251.2 11.3L248.1 13.3M251.2 11.3L250.9 15.0M250.3 13.3L247.4 15.4M250.3 13.3L250.7 16.8M249.3 15.3L247.3 17.0M249.3 15.3L249.4 17.9M248.3 17.4L247.2 18.4M248.3 17.4L248.2 18.9" stroke-width=".7" opacity="0.34"/><path d="M226.1 12.5L219.0 17.6" stroke-width="0.8" opacity="0.45"/><path d="M224.4 13.8L221.8 14.3M224.4 13.8L223.7 16.3M222.6 15.1L219.2 14.9M222.6 15.1L221.2 18.1M220.8 16.4L219.5 16.5M220.8 16.4L220.1 17.5" stroke-width=".7" opacity="0.34"/><path d="M114.4 20.2L116.8 29.2" stroke-width="0.8" opacity="0.45"/><path d="M115.0 22.5L113.7 25.4M115.0 22.5L117.6 24.4M115.6 24.7L115.3 27.3M115.6 24.7L117.5 26.3M116.2 27.0L115.8 28.2M116.2 27.0L117.0 28.0" stroke-width=".7" opacity="0.34"/><path d="M269.9 19.1L269.4 30.4" stroke-width="0.8" opacity="0.45"/><path d="M269.8 21.4L267.5 24.0M269.8 21.4L271.4 24.5M269.7 23.6L268.6 25.4M269.7 23.6L271.0 25.3M269.6 25.9L268.4 27.6M269.6 25.9L270.9 27.6M269.5 28.1L268.5 29.4M269.5 28.1L270.3 29.6" stroke-width=".7" opacity="0.34"/><path d="M132.6 -5.3L120.5 0.9" stroke-width="0.8" opacity="0.45"/><path d="M130.6 -4.3L127.4 -4.9M130.6 -4.3L128.9 -1.5M128.6 -3.2L125.6 -3.2M128.6 -3.2L127.2 -0.6M126.6 -2.2L124.5 -2.3M126.6 -2.2L125.6 -0.4M124.5 -1.2L122.1 -1.0M124.5 -1.2L123.0 0.8M122.5 -0.1L120.3 -0.4M122.5 -0.1L121.1 1.6" stroke-width=".7" opacity="0.34"/><path d="M271.6 -1.3L276.1 6.5" stroke-width="0.8" opacity="0.45"/><path d="M272.7 0.6L272.6 3.7M272.7 0.6L275.5 1.8M273.9 2.6L273.7 4.4M273.9 2.6L275.3 3.7M275.0 4.6L275.2 6.8M275.0 4.6L276.8 5.8" stroke-width=".7" opacity="0.34"/><path d="M118.5 28.0L128.4 42.0" stroke-width="0.8" opacity="0.45"/><path d="M119.7 29.8L119.9 32.7M119.7 29.8L122.5 30.9M121.0 31.5L120.9 34.7M121.0 31.5L124.0 32.4M122.2 33.3L122.6 35.6M122.2 33.3L124.4 34.0M123.5 35.0L123.7 36.7M123.5 35.0L125.0 35.8M124.7 36.8L125.5 40.1M124.7 36.8L127.9 38.0M125.9 38.5L126.0 41.1M125.9 38.5L128.1 40.0M127.2 40.3L127.6 42.8M127.2 40.3L129.6 41.0" stroke-width=".7" opacity="0.34"/><path d="M217.1 13.0L204.7 23.3" stroke-width="0.8" opacity="0.45"/><path d="M215.6 14.3L212.6 14.6M215.6 14.3L214.6 17.1M214.0 15.6L210.2 16.1M214.0 15.6L213.1 19.3M212.5 16.9L210.5 17.2M212.5 16.9L211.5 18.6M210.9 18.2L207.6 18.4M210.9 18.2L210.1 21.4M209.4 19.4L208.0 19.6M209.4 19.4L208.9 20.7M207.8 20.7L206.5 21.1M207.8 20.7L207.6 22.0M206.3 22.0L204.0 22.6M206.3 22.0L205.7 24.3" stroke-width=".7" opacity="0.34"/><path d="M215.5 11.2L210.5 20.8" stroke-width="0.8" opacity="0.45"/><path d="M214.5 13.2L212.6 14.9M214.5 13.2L214.7 15.7M213.5 15.1L210.8 16.5M213.5 15.1L213.6 18.1M212.5 17.0L210.7 18.3M212.5 17.0L212.8 19.2M211.5 18.9L210.0 19.8M211.5 18.9L211.7 20.6" stroke-width=".7" opacity="0.34"/><path d="M182.0 26.3L189.5 34.5" stroke-width="0.8" opacity="0.45"/><path d="M183.5 27.9L185.0 32.0M183.5 27.9L187.4 29.9M185.0 29.6L185.2 31.1M185.0 29.6L186.4 30.2M186.5 31.2L187.1 33.5M186.5 31.2L188.8 31.7M188.0 32.9L188.4 34.7M188.0 32.9L189.7 33.7" stroke-width=".7" opacity="0.34"/><path d="M238.8 30.4L231.3 46.7" stroke-width="0.8" opacity="0.45"/><path d="M238.0 32.2L234.7 34.2M238.0 32.2L238.8 36.0M237.2 34.0L234.6 36.5M237.2 34.0L238.0 37.5M236.3 35.8L233.0 38.7M236.3 35.8L236.0 40.2M235.5 37.6L233.8 39.2M235.5 37.6L235.6 40.0M234.6 39.5L233.5 40.5M234.6 39.5L234.5 41.0M233.8 41.3L232.2 42.6M233.8 41.3L234.1 43.3M233.0 43.1L231.6 44.3M233.0 43.1L233.4 44.8M232.1 44.9L230.1 46.2M232.1 44.9L232.1 47.3" stroke-width=".7" opacity="0.34"/><path d="M175.2 14.5L175.4 22.9" stroke-width="0.8" opacity="0.45"/><path d="M175.3 16.6L173.5 19.1M175.3 16.6L177.0 19.1M175.3 18.7L173.4 21.7M175.3 18.7L177.4 21.5M175.3 20.8L173.6 23.0M175.3 20.8L177.0 23.0" stroke-width=".7" opacity="0.34"/><path d="M177.4 25.0L168.4 41.3" stroke-width="0.8" opacity="0.45"/><path d="M176.4 26.8L172.9 29.0M176.4 26.8L176.0 31.0M175.4 28.6L173.2 30.2M175.4 28.6L175.6 31.3M174.4 30.4L171.4 32.7M174.4 30.4L174.5 34.2M173.4 32.2L170.4 34.2M173.4 32.2L173.0 35.8M172.4 34.0L170.1 35.5M172.4 34.0L172.1 36.8M171.4 35.8L170.0 37.0M171.4 35.8L171.2 37.6M170.4 37.6L169.0 38.8M170.4 37.6L170.1 39.5M169.4 39.4L167.7 40.1M169.4 39.4L169.6 41.3" stroke-width=".7" opacity="0.34"/><path d="M162.8 38.2L169.2 45.7" stroke-width="0.8" opacity="0.45"/><path d="M164.4 40.1L165.0 41.7M164.4 40.1L166.1 40.6M166.0 42.0L166.6 45.2M166.0 42.0L169.2 42.7M167.6 43.8L167.7 45.8M167.6 43.8L169.5 44.4" stroke-width=".7" opacity="0.34"/><path d="M197.0 0.5L196.7 13.8" stroke-width="0.8" opacity="0.45"/><path d="M196.9 2.7L195.0 6.7M196.9 2.7L198.8 6.7M196.9 5.0L195.4 8.5M196.9 5.0L198.8 8.3M196.8 7.2L195.8 8.8M196.8 7.2L197.8 8.8M196.8 9.4L196.0 10.5M196.8 9.4L197.4 10.6M196.8 11.6L195.8 12.8M196.8 11.6L197.6 12.9" stroke-width=".7" opacity="0.34"/><path d="M160.1 25.9L168.3 37.5" stroke-width="0.8" opacity="0.45"/><path d="M161.3 27.5L161.4 29.6M161.3 27.5L163.3 28.1M162.5 29.2L163.4 32.6M162.5 29.2L165.7 30.7M163.7 30.9L164.0 33.6M163.7 30.9L166.0 32.3M164.8 32.5L165.0 34.5M164.8 32.5L166.5 33.6M166.0 34.2L166.4 36.6M166.0 34.2L168.2 35.4M167.2 35.9L167.3 37.0M167.2 35.9L168.3 36.2" stroke-width=".7" opacity="0.34"/><path d="M157.3 -3.2L160.1 15.9" stroke-width="0.8" opacity="0.45"/><path d="M157.6 -1.1L156.9 1.0M157.6 -1.1L158.8 0.7M157.9 1.0L156.6 4.6M157.9 1.0L159.8 4.3M158.2 3.2L157.0 7.0M158.2 3.2L160.9 6.1M158.5 5.3L157.3 7.6M158.5 5.3L159.8 7.6M158.9 7.4L158.3 9.2M158.9 7.4L159.9 9.0M159.2 9.5L158.1 12.3M159.2 9.5L160.9 11.9M159.5 11.7L158.5 13.4M159.5 11.7L160.8 13.2M159.8 13.8L159.1 15.3M159.8 13.8L160.9 15.1" stroke-width=".7" opacity="0.34"/><path d="M175.7 13.3L183.1 24.3" stroke-width="0.8" opacity="0.45"/><path d="M176.9 15.1L177.6 19.7M176.9 15.1L180.9 17.3M178.2 17.0L178.3 20.3M178.2 17.0L181.0 18.7M179.4 18.8L179.4 21.3M179.4 18.8L181.5 20.2M180.7 20.6L180.6 22.1M180.7 20.6L182.0 21.1M181.9 22.5L182.1 23.6M181.9 22.5L182.9 22.9" stroke-width=".7" opacity="0.34"/><path d="M156.1 24.8L165.8 34.2" stroke-width="0.8" opacity="0.45"/><path d="M157.7 26.4L158.5 28.6M157.7 26.4L160.0 26.8M159.3 28.0L159.8 30.9M159.3 28.0L162.3 28.3M160.9 29.5L161.4 32.4M160.9 29.5L163.7 30.5M162.5 31.1L163.3 33.2M162.5 31.1L164.7 31.5M164.2 32.6L164.3 33.8M164.2 32.6L165.3 33.0" stroke-width=".7" opacity="0.34"/><path d="M125.0 30.0L99.2 78.6" stroke-width="1.3" opacity="0.8"/><path d="M124.0 31.8L116.4 35.1M124.0 31.8L125.6 40.0M123.1 33.6L117.8 36.0M123.1 33.6L124.3 39.3M122.1 35.4L118.5 37.3M122.1 35.4L122.6 39.5M121.2 37.2L116.4 40.7M121.2 37.2L120.7 43.1M120.2 39.0L115.2 41.2M120.2 39.0L120.2 44.5M119.3 40.8L115.3 43.0M119.3 40.8L119.3 45.3M118.3 42.6L113.0 46.0M118.3 42.6L118.1 48.9M117.3 44.4L114.5 45.7M117.3 44.4L117.6 47.5M116.4 46.2L112.9 48.4M116.4 46.2L116.7 50.3M115.4 48.0L110.6 50.1M115.4 48.0L116.1 53.2M114.5 49.8L111.1 52.2M114.5 49.8L114.8 54.0M113.5 51.6L110.4 52.9M113.5 51.6L113.1 54.9M112.6 53.4L108.7 56.2M112.6 53.4L112.8 58.2M111.6 55.2L109.5 56.8M111.6 55.2L112.2 57.8M110.7 57.0L106.1 60.5M110.7 57.0L110.8 62.7M109.7 58.8L107.8 60.3M109.7 58.8L109.5 61.2M108.7 60.6L103.8 64.1M108.7 60.6L108.4 66.7M107.8 62.4L105.9 63.9M107.8 62.4L108.3 64.7M106.8 64.2L102.5 66.1M106.8 64.2L107.6 68.9M105.9 66.0L102.1 68.8M105.9 66.0L105.5 70.7M104.9 67.8L102.8 69.6M104.9 67.8L104.7 70.6M104.0 69.6L100.4 71.8M104.0 69.6L103.4 73.7M103.0 71.4L100.6 72.5M103.0 71.4L103.4 74.0M102.0 73.2L98.7 74.9M102.0 73.2L102.7 76.9M101.1 75.0L98.5 76.7M101.1 75.0L101.3 78.1M100.1 76.8L98.4 78.3M100.1 76.8L100.0 79.0" stroke-width=".7" opacity="0.60"/><path d="M135.0 28.0L126.7 75.3" stroke-width="1.3" opacity="0.8"/><path d="M134.7 30.0L131.6 34.7M134.7 30.0L135.8 35.5M134.3 31.9L131.7 35.4M134.3 31.9L136.4 35.7M134.0 33.9L130.0 37.7M134.0 33.9L136.3 38.9M133.6 35.9L130.1 40.6M133.6 35.9L135.4 41.5M133.3 37.8L130.3 41.0M133.3 37.8L135.2 41.7M132.9 39.8L129.1 45.1M132.9 39.8L134.4 46.1M132.6 41.8L130.8 43.8M132.6 41.8L133.2 44.4M132.2 43.8L130.7 45.8M132.2 43.8L132.9 46.3M131.9 45.7L129.6 48.2M131.9 45.7L133.1 48.9M131.5 47.7L129.0 50.2M131.5 47.7L132.4 51.2M131.2 49.7L127.9 54.8M131.2 49.7L133.4 55.3M130.8 51.6L127.3 55.2M130.8 51.6L132.5 56.3M130.5 53.6L126.8 57.6M130.5 53.6L132.7 58.6M130.1 55.6L128.8 57.5M130.1 55.6L130.9 57.8M129.8 57.5L127.7 60.9M129.8 57.5L131.4 61.1M129.4 59.5L127.5 61.9M129.4 59.5L130.5 62.4M129.1 61.5L126.4 65.2M129.1 61.5L130.7 65.7M128.7 63.5L126.3 66.1M128.7 63.5L129.8 66.9M128.4 65.4L126.8 67.4M128.4 65.4L129.3 67.7M128.1 67.4L126.2 70.3M128.1 67.4L129.2 70.6M127.7 69.4L126.0 71.9M127.7 69.4L128.3 72.3M127.4 71.3L125.4 74.6M127.4 71.3L128.7 74.9M127.0 73.3L126.0 75.1M127.0 73.3L127.6 75.3" stroke-width=".7" opacity="0.60"/><path d="M165.0 42.0L145.5 90.2" stroke-width="1.3" opacity="0.8"/><path d="M164.3 43.9L160.4 47.1M164.3 43.9L165.6 48.7M163.5 45.7L160.2 48.6M163.5 45.7L164.4 50.0M162.8 47.6L157.5 53.3M162.8 47.6L163.1 55.3M162.0 49.4L157.3 52.1M162.0 49.4L162.6 54.8M161.3 51.3L157.2 54.5M161.3 51.3L161.9 56.4M160.5 53.1L156.9 55.6M160.5 53.1L161.4 57.4M159.8 55.0L154.9 58.7M159.8 55.0L161.2 61.0M159.0 56.8L151.9 61.9M159.0 56.8L158.8 65.6M158.3 58.7L153.4 62.1M158.3 58.7L158.7 64.6M157.5 60.5L152.4 64.9M157.5 60.5L158.7 67.2M156.8 62.4L151.7 65.9M156.8 62.4L158.5 68.3M156.0 64.3L150.6 67.9M156.0 64.3L157.4 70.6M155.3 66.1L152.1 68.4M155.3 66.1L156.0 70.0M154.5 68.0L152.0 69.6M154.5 68.0L154.6 71.0M153.8 69.8L149.9 72.8M153.8 69.8L154.8 74.6M153.0 71.7L148.4 75.4M153.0 71.7L154.7 77.3M152.3 73.5L148.8 76.1M152.3 73.5L153.6 77.6M151.5 75.4L148.5 77.4M151.5 75.4L152.6 78.9M150.8 77.2L148.6 78.6M150.8 77.2L151.3 79.8M150.0 79.1L146.5 81.3M150.0 79.1L151.1 83.1M149.3 80.9L147.2 82.5M149.3 80.9L149.7 83.5M148.5 82.8L144.7 84.9M148.5 82.8L149.6 87.0M147.8 84.7L144.6 88.0M147.8 84.7L148.3 89.2M147.0 86.5L143.0 88.8M147.0 86.5L148.1 91.0M146.3 88.4L144.0 89.8M146.3 88.4L146.7 91.0" stroke-width=".7" opacity="0.60"/><path d="M182.0 48.0L190.7 89.1" stroke-width="1.3" opacity="0.8"/><path d="M182.4 50.0L180.0 56.3M182.4 50.0L187.5 54.4M182.8 51.9L179.7 57.9M182.8 51.9L187.4 57.0M183.2 53.9L181.3 59.0M183.2 53.9L187.0 57.8M183.7 55.8L182.3 58.6M183.7 55.8L185.6 58.2M184.1 57.8L183.3 62.9M184.1 57.8L187.1 62.0M184.5 59.7L182.9 66.5M184.5 59.7L188.8 65.2M184.9 61.7L183.5 67.7M184.9 61.7L189.3 66.0M185.3 63.7L183.2 68.1M185.3 63.7L188.6 67.3M185.7 65.6L184.9 69.3M185.7 65.6L188.1 68.5M186.2 67.6L185.7 69.8M186.2 67.6L187.5 69.4M186.6 69.5L185.2 72.6M186.6 69.5L189.2 71.7M187.0 71.5L186.2 74.8M187.0 71.5L189.1 74.2M187.4 73.4L186.1 77.5M187.4 73.4L189.8 76.9M187.8 75.4L187.0 79.0M187.8 75.4L189.9 78.4M188.2 77.3L187.5 81.6M188.2 77.3L191.1 80.6M188.7 79.3L187.3 83.1M188.7 79.3L191.7 81.9M189.1 81.3L187.9 83.5M189.1 81.3L190.5 83.4M189.5 83.2L188.4 87.0M189.5 83.2L191.6 86.6M189.9 85.2L188.9 87.1M189.9 85.2L191.4 86.6M190.3 87.1L189.0 90.0M190.3 87.1L192.0 89.8" stroke-width=".7" opacity="0.60"/><path d="M172.0 40.0L141.4 65.7" stroke-width="1.3" opacity="0.8"/><path d="M170.5 41.3L165.8 42.2M170.5 41.3L169.5 46.0M168.9 42.6L161.5 44.8M168.9 42.6L167.5 50.2M167.4 43.9L161.8 45.2M167.4 43.9L164.7 48.9M165.9 45.1L161.0 46.0M165.9 45.1L164.1 49.7M164.3 46.4L160.1 46.5M164.3 46.4L162.9 50.4M162.8 47.7L158.8 48.0M162.8 47.7L161.1 51.4M161.3 49.0L157.1 50.4M161.3 49.0L159.4 53.0M159.7 50.3L153.1 51.2M159.7 50.3L157.5 56.6M158.2 51.6L153.2 52.2M158.2 51.6L156.5 56.4M156.7 52.9L153.2 53.9M156.7 52.9L154.9 56.1M155.1 54.1L152.6 54.7M155.1 54.1L153.9 56.4M153.6 55.4L149.3 56.5M153.6 55.4L151.7 59.5M152.1 56.7L149.1 57.2M152.1 56.7L150.8 59.4M150.6 58.0L146.0 58.8M150.6 58.0L148.3 62.1M149.0 59.3L147.0 59.4M149.0 59.3L148.4 61.2M147.5 60.6L145.0 60.8M147.5 60.6L146.3 62.8M146.0 61.9L141.9 61.9M146.0 61.9L144.8 65.7M144.4 63.1L142.9 63.5M144.4 63.1L144.1 64.7M142.9 64.4L140.2 65.2M142.9 64.4L141.7 67.0" stroke-width=".7" opacity="0.60"/><path d="M242.0 45.0L237.0 92.7" stroke-width="1.3" opacity="0.8"/><path d="M241.8 47.0L239.5 50.1M241.8 47.0L243.0 50.7M241.6 49.0L237.4 53.4M241.6 49.0L244.8 54.1M241.4 51.0L237.3 55.6M241.4 51.0L243.2 56.9M241.2 53.0L235.3 59.2M241.2 53.0L244.6 60.8M241.0 54.9L236.7 61.8M241.0 54.9L245.4 61.6M240.7 56.9L237.4 60.4M240.7 56.9L243.2 61.1M240.5 58.9L235.4 64.9M240.5 58.9L242.6 66.5M240.3 60.9L237.6 64.2M240.3 60.9L242.6 64.5M240.1 62.9L237.4 68.4M240.1 62.9L242.3 68.6M239.9 64.9L237.8 68.7M239.9 64.9L241.3 69.0M239.7 66.9L237.0 71.0M239.7 66.9L241.3 71.6M239.5 68.9L236.4 71.9M239.5 68.9L241.4 72.8M239.3 70.9L235.3 74.9M239.3 70.9L240.7 76.3M239.1 72.8L236.3 78.1M239.1 72.8L240.9 78.5M238.9 74.8L235.5 78.7M238.9 74.8L241.2 79.5M238.7 76.8L236.1 79.8M238.7 76.8L240.2 80.5M238.4 78.8L237.0 81.2M238.4 78.8L239.2 81.5M238.2 80.8L236.7 82.3M238.2 80.8L239.4 82.6M238.0 82.8L236.3 85.3M238.0 82.8L239.0 85.7M237.8 84.8L235.3 88.2M237.8 84.8L239.1 88.8M237.6 86.8L234.6 89.9M237.6 86.8L238.7 91.0M237.4 88.8L235.9 91.3M237.4 88.8L238.7 91.4M237.2 90.7L235.9 92.9M237.2 90.7L238.0 93.1" stroke-width=".7" opacity="0.60"/><path d="M250.0 48.0L227.1 80.8" stroke-width="1.3" opacity="0.8"/><path d="M248.9 49.6L243.0 52.3M248.9 49.6L248.3 56.0M247.7 51.3L241.8 54.1M247.7 51.3L248.2 57.9M246.6 52.9L241.7 54.6M246.6 52.9L246.9 58.1M245.4 54.6L240.0 56.9M245.4 54.6L245.5 60.4M244.3 56.2L239.0 59.3M244.3 56.2L243.6 62.3M243.1 57.8L240.4 59.7M243.1 57.8L243.0 61.2M242.0 59.5L238.5 61.5M242.0 59.5L241.0 63.3M240.8 61.1L238.5 62.0M240.8 61.1L240.5 63.6M239.7 62.7L235.8 64.3M239.7 62.7L239.9 66.9M238.5 64.4L234.2 66.9M238.5 64.4L238.9 69.4M237.4 66.0L234.8 67.1M237.4 66.0L237.3 68.9M236.2 67.7L233.3 68.6M236.2 67.7L236.1 70.7M235.1 69.3L231.4 71.6M235.1 69.3L235.2 73.7M233.9 70.9L231.4 72.0M233.9 70.9L233.9 73.7M232.8 72.6L230.4 73.9M232.8 72.6L232.4 75.3M231.6 74.2L227.5 75.9M231.6 74.2L231.2 78.7M230.5 75.9L227.6 77.0M230.5 75.9L230.0 78.9M229.4 77.5L227.9 78.4M229.4 77.5L229.3 79.2M228.2 79.1L225.5 79.9M228.2 79.1L228.1 81.9" stroke-width=".7" opacity="0.60"/><path d="M258.0 45.0L272.8 76.7" stroke-width="1.3" opacity="0.8"/><path d="M258.9 46.9L257.2 53.4M258.9 46.9L264.4 50.7M259.7 48.7L259.4 53.2M259.7 48.7L263.3 51.5M260.6 50.6L259.9 56.4M260.6 50.6L264.9 54.5M261.5 52.5L260.9 58.9M261.5 52.5L267.0 55.7M262.4 54.3L261.8 58.8M262.4 54.3L266.1 56.8M263.2 56.2L263.3 58.8M263.2 56.2L265.5 57.5M264.1 58.1L264.2 61.5M264.1 58.1L267.1 59.7M265.0 59.9L264.1 64.5M265.0 59.9L268.7 62.7M265.8 61.8L265.4 64.1M265.8 61.8L267.6 63.3M266.7 63.7L266.1 67.5M266.7 63.7L269.7 66.2M267.6 65.5L267.4 67.2M267.6 65.5L269.1 66.4M268.4 67.4L267.6 70.6M268.4 67.4L270.9 69.5M269.3 69.3L269.1 72.7M269.3 69.3L272.2 71.2M270.2 71.1L270.2 73.3M270.2 71.1L272.0 72.3M271.1 73.0L270.4 75.6M271.1 73.0L273.3 74.5M271.9 74.9L271.6 77.1M271.9 74.9L273.8 76.1" stroke-width=".7" opacity="0.60"/><path d="M205.0 40.0L198.3 71.3" stroke-width="1.3" opacity="0.8"/><path d="M204.6 42.0L201.8 45.6M204.6 42.0L206.3 46.2M204.2 43.9L201.8 47.6M204.2 43.9L205.0 48.2M203.8 45.9L200.9 48.7M203.8 45.9L205.2 49.6M203.3 47.8L200.0 50.8M203.3 47.8L204.4 52.1M202.9 49.8L200.2 52.3M202.9 49.8L204.3 53.2M202.5 51.7L199.6 54.2M202.5 51.7L203.1 55.5M202.1 53.7L199.1 56.3M202.1 53.7L203.8 57.3M201.7 55.7L199.7 57.4M201.7 55.7L202.5 58.1M201.3 57.6L198.2 61.4M201.3 57.6L203.0 62.2M200.8 59.6L197.9 61.9M200.8 59.6L201.8 63.2M200.4 61.5L198.9 63.8M200.4 61.5L201.4 64.1M200.0 63.5L198.7 64.6M200.0 63.5L200.3 65.2M199.6 65.4L198.1 66.6M199.6 65.4L200.2 67.3M199.2 67.4L197.2 69.8M199.2 67.4L199.9 70.4M198.8 69.3L197.2 70.6M198.8 69.3L199.2 71.3" stroke-width=".7" opacity="0.60"/><path d="M150.0 30.0L130.3 55.2" stroke-width="1.3" opacity="0.8"/><path d="M148.8 31.6L142.0 33.3M148.8 31.6L148.2 38.5M147.5 33.2L143.9 34.3M147.5 33.2L147.5 36.9M146.3 34.7L141.8 37.1M146.3 34.7L145.8 39.8M145.1 36.3L139.1 38.5M145.1 36.3L143.4 42.5M143.8 37.9L140.9 38.9M143.8 37.9L142.9 40.8M142.6 39.5L140.6 40.4M142.6 39.5L142.1 41.6M141.4 41.0L138.1 43.0M141.4 41.0L140.9 44.9M140.1 42.6L136.3 44.5M140.1 42.6L139.7 46.9M138.9 44.2L135.5 45.2M138.9 44.2L138.5 47.7M137.7 45.8L134.2 47.1M137.7 45.8L137.6 49.5M136.5 47.3L134.8 48.3M136.5 47.3L136.4 49.3M135.2 48.9L132.0 50.9M135.2 48.9L135.2 52.7M134.0 50.5L131.1 51.2M134.0 50.5L133.8 53.4M132.8 52.1L130.8 53.2M132.8 52.1L132.7 54.3M131.5 53.6L129.0 54.7M131.5 53.6L130.9 56.3" stroke-width=".7" opacity="0.60"/><path d="M222.0 30.0L204.6 49.3" stroke-width="1.3" opacity="0.8"/><path d="M220.7 31.5L217.0 32.1M220.7 31.5L219.8 35.1M219.3 33.0L216.4 33.4M219.3 33.0L219.2 35.9M218.0 34.5L215.5 35.6M218.0 34.5L217.6 37.1M216.6 35.9L213.5 37.0M216.6 35.9L216.2 39.2M215.3 37.4L212.7 38.2M215.3 37.4L214.5 40.0M214.0 38.9L211.7 39.6M214.0 38.9L213.4 41.3M212.6 40.4L208.9 42.2M212.6 40.4L212.4 44.6M211.3 41.9L209.2 42.7M211.3 41.9L210.5 44.0M210.0 43.4L207.8 43.7M210.0 43.4L209.4 45.5M208.6 44.9L205.5 45.3M208.6 44.9L208.2 48.0M207.3 46.3L205.8 46.9M207.3 46.3L206.8 47.8M205.9 47.8L204.5 48.4M205.9 47.8L205.4 49.3" stroke-width=".7" opacity="0.60"/><path d="M160.0 143.0L171.1 108.8" stroke-width="1.3" opacity="0.8"/><path d="M160.6 141.1L166.3 136.0M160.6 141.1L159.6 133.5M161.2 139.2L164.4 135.5M161.2 139.2L160.9 134.4M161.9 137.3L165.5 132.9M161.9 137.3L160.6 131.7M162.5 135.4L166.1 132.7M162.5 135.4L161.9 130.9M163.1 133.5L169.4 129.4M163.1 133.5L160.5 126.5M163.7 131.6L167.1 129.4M163.7 131.6L162.9 127.6M164.3 129.7L169.5 124.9M164.3 129.7L162.8 122.8M164.9 127.8L168.0 125.5M164.9 127.8L164.3 124.0M165.6 125.9L170.6 121.9M165.6 125.9L164.4 119.6M166.2 124.0L167.9 122.1M166.2 124.0L165.7 121.5M166.8 122.1L169.7 119.6M166.8 122.1L166.7 118.3M167.4 120.2L170.7 118.0M167.4 120.2L166.0 116.5M168.0 118.3L171.6 115.5M168.0 118.3L166.9 113.9M168.7 116.4L172.9 113.3M168.7 116.4L167.6 111.2M169.3 114.5L172.1 112.6M169.3 114.5L168.5 111.2M169.9 112.6L172.3 110.1M169.9 112.6L169.0 109.2M170.5 110.7L172.9 109.1M170.5 110.7L169.4 108.0" stroke-width=".7" opacity="0.60"/><path d="M178.0 143.0L182.2 113.3" stroke-width="1.3" opacity="0.8"/><path d="M178.3 141.0L184.4 135.3M178.3 141.0L176.4 132.8M178.6 139.0L180.5 136.3M178.6 139.0L177.0 136.1M178.8 137.1L181.9 132.4M178.8 137.1L177.5 131.7M179.1 135.1L181.1 131.7M179.1 135.1L178.1 131.3M179.4 133.1L182.5 128.1M179.4 133.1L177.8 127.4M179.7 131.1L182.3 126.8M179.7 131.1L177.2 126.7M179.9 129.1L183.5 125.7M179.9 129.1L177.7 124.7M180.2 127.2L183.0 123.0M180.2 127.2L178.5 122.5M180.5 125.2L182.5 122.4M180.5 125.2L178.8 122.2M180.8 123.2L183.1 120.8M180.8 123.2L179.4 120.1M181.1 121.2L182.2 119.5M181.1 121.2L180.2 119.3M181.3 119.2L183.5 115.9M181.3 119.2L180.2 115.4M181.6 117.3L183.2 115.2M181.6 117.3L180.7 114.9M181.9 115.3L184.3 112.5M181.9 115.3L180.8 111.8" stroke-width=".7" opacity="0.60"/><path d="M200.0 143.0L217.8 109.4" stroke-width="1.3" opacity="0.8"/><path d="M200.9 141.2L205.7 138.3M200.9 141.2L201.4 135.7M201.9 139.5L206.2 135.8M201.9 139.5L201.4 133.8M202.8 137.7L210.3 134.4M202.8 137.7L202.3 129.5M203.8 135.9L208.3 133.2M203.8 135.9L203.5 130.7M204.7 134.2L208.1 132.1M204.7 134.2L204.6 130.2M205.6 132.4L208.9 130.3M205.6 132.4L205.0 128.5M206.6 130.6L211.4 127.2M206.6 130.6L206.9 124.7M207.5 128.9L212.4 126.0M207.5 128.9L207.7 123.2M208.5 127.1L212.4 124.5M208.5 127.1L208.1 122.4M209.4 125.3L214.5 121.8M209.4 125.3L209.1 119.1M210.3 123.6L214.4 121.3M210.3 123.6L210.6 118.9M211.3 121.8L214.2 120.5M211.3 121.8L211.6 118.6M212.2 120.0L215.9 117.3M212.2 120.0L212.1 115.4M213.1 118.3L216.0 116.1M213.1 118.3L213.4 114.7M214.1 116.5L217.9 113.2M214.1 116.5L214.5 111.5M215.0 114.7L218.4 112.4M215.0 114.7L215.3 110.7M216.0 113.0L219.6 111.5M216.0 113.0L216.2 109.1M216.9 111.2L219.8 109.3M216.9 111.2L216.2 107.8" stroke-width=".7" opacity="0.60"/><path d="M228.0 143.0L260.7 113.6" stroke-width="1.3" opacity="0.8"/><path d="M229.5 141.7L237.4 141.1M229.5 141.7L231.5 134.0M231.0 140.3L235.5 139.3M231.0 140.3L232.1 135.8M232.5 139.0L236.8 137.4M232.5 139.0L233.1 134.4M233.9 137.6L243.2 136.2M233.9 137.6L238.1 129.3M235.4 136.3L243.1 136.0M235.4 136.3L237.1 128.8M236.9 135.0L244.3 133.2M236.9 135.0L238.9 127.7M238.4 133.6L246.7 131.9M238.4 133.6L242.2 126.0M239.9 132.3L243.8 132.1M239.9 132.3L240.8 128.5M241.4 131.0L248.9 128.4M241.4 131.0L244.9 123.8M242.9 129.6L249.1 128.1M242.9 129.6L244.9 123.6M244.3 128.3L248.3 127.8M244.3 128.3L245.2 124.4M245.8 126.9L251.8 125.5M245.8 126.9L247.7 121.1M247.3 125.6L251.6 124.6M247.3 125.6L248.9 121.5M248.8 124.3L253.3 124.0M248.8 124.3L249.7 119.9M250.3 122.9L253.2 122.5M250.3 122.9L250.9 120.1M251.8 121.6L255.4 121.3M251.8 121.6L252.4 118.0M253.3 120.2L255.6 119.9M253.3 120.2L254.1 118.0M254.8 118.9L258.4 118.2M254.8 118.9L255.4 115.3M256.2 117.6L260.3 117.3M256.2 117.6L257.8 113.8M257.7 116.2L261.9 115.2M257.7 116.2L259.5 112.3M259.2 114.9L263.3 114.2M259.2 114.9L260.9 111.1" stroke-width=".7" opacity="0.60"/><path d="M252.0 143.0L246.8 113.5" stroke-width="1.3" opacity="0.8"/><path d="M251.7 141.0L254.3 133.6M251.7 141.0L246.2 135.3M251.3 139.1L253.6 131.4M251.3 139.1L246.1 133.0M251.0 137.1L252.4 131.8M251.0 137.1L247.4 132.9M250.6 135.1L253.5 128.5M250.6 135.1L246.4 129.2M250.3 133.2L252.4 128.0M250.3 133.2L246.9 128.7M249.9 131.2L251.5 126.1M249.9 131.2L246.1 127.5M249.6 129.2L251.3 125.8M249.6 129.2L247.3 126.1M249.2 127.2L250.0 124.5M249.2 127.2L247.7 124.9M248.9 125.3L251.5 120.8M248.9 125.3L245.7 121.2M248.5 123.3L249.8 120.9M248.5 123.3L246.5 121.4M248.2 121.3L248.9 118.9M248.2 121.3L246.5 119.4M247.8 119.4L248.3 117.4M247.8 119.4L246.6 117.7M247.5 117.4L247.9 115.6M247.5 117.4L246.2 116.0M247.1 115.4L248.2 113.5M247.1 115.4L245.5 114.0" stroke-width=".7" opacity="0.60"/><path d="M266.0 143.0L287.2 109.1" stroke-width="1.3" opacity="0.8"/><path d="M267.1 141.3L273.5 137.2M267.1 141.3L266.6 133.7M268.1 139.6L273.2 137.7M268.1 139.6L268.5 134.2M269.2 137.9L275.8 135.1M269.2 137.9L268.9 130.7M270.2 136.2L276.5 132.4M270.2 136.2L271.4 129.0M271.3 134.5L276.1 132.9M271.3 134.5L272.3 129.6M272.4 132.8L276.1 130.5M272.4 132.8L272.6 128.4M273.4 131.1L279.3 127.1M273.4 131.1L274.7 124.1M274.5 129.4L276.9 128.0M274.5 129.4L274.4 126.6M275.5 127.7L279.8 125.7M275.5 127.7L275.7 123.0M276.6 126.0L280.2 124.0M276.6 126.0L277.4 122.0M277.7 124.3L283.6 121.8M277.7 124.3L278.8 118.0M278.7 122.6L281.6 121.5M278.7 122.6L278.8 119.5M279.8 121.0L284.4 119.0M279.8 121.0L280.6 115.9M280.8 119.3L285.1 116.4M280.8 119.3L281.7 114.2M281.9 117.6L286.1 115.9M281.9 117.6L282.4 113.0M283.0 115.9L285.8 114.6M283.0 115.9L283.3 112.7M284.0 114.2L287.0 113.2M284.0 114.2L284.5 111.1M285.1 112.5L289.2 111.0M285.1 112.5L284.5 108.1M286.1 110.8L288.0 109.5M286.1 110.8L286.3 108.6" stroke-width=".7" opacity="0.60"/><path d="M212.0 125.0L245.4 111.5" stroke-width="1.3" opacity="0.8"/><path d="M213.9 124.3L217.7 125.4M213.9 124.3L216.2 121.0M215.7 123.5L223.0 124.5M215.7 123.5L220.3 117.7M217.6 122.8L225.3 122.8M217.6 122.8L222.9 117.2M219.4 122.0L226.2 123.2M219.4 122.0L223.1 116.1M221.3 121.3L228.4 123.0M221.3 121.3L225.5 115.3M223.1 120.5L229.0 121.4M223.1 120.5L227.2 116.2M225.0 119.8L228.7 120.8M225.0 119.8L227.3 116.7M226.8 119.0L229.3 119.5M226.8 119.0L228.0 116.8M228.7 118.3L233.3 118.9M228.7 118.3L231.6 114.6M230.5 117.5L235.0 118.3M230.5 117.5L233.3 114.0M232.4 116.8L237.4 118.2M232.4 116.8L235.2 112.3M234.3 116.0L238.5 116.9M234.3 116.0L237.3 112.9M236.1 115.3L239.5 115.5M236.1 115.3L238.4 112.8M238.0 114.5L242.5 114.7M238.0 114.5L240.3 110.6M239.8 113.8L243.7 114.2M239.8 113.8L242.7 111.1M241.7 113.0L243.6 113.4M241.7 113.0L242.8 111.4M243.5 112.3L245.7 112.7M243.5 112.3L245.1 110.7" stroke-width=".7" opacity="0.60"/><path d="M192.0 132.0L184.5 113.5" stroke-width="1.3" opacity="0.8"/><path d="M191.3 130.1L192.4 125.4M191.3 130.1L187.2 127.5M190.5 128.3L191.2 124.2M190.5 128.3L187.7 125.2M189.8 126.4L190.1 123.6M189.8 126.4L187.8 124.3M189.0 124.6L189.6 122.6M189.0 124.6L187.3 123.4M188.3 122.7L188.9 119.5M188.3 122.7L185.4 121.0M187.5 120.9L187.9 117.7M187.5 120.9L185.0 118.8M186.8 119.0L187.9 115.4M186.8 119.0L184.1 116.4M186.0 117.2L186.6 114.2M186.0 117.2L183.7 115.2M185.3 115.3L185.4 112.9M185.3 115.3L183.2 114.0" stroke-width=".7" opacity="0.60"/></g></svg>
</div>
</div>
<div class="a" style="left:740.7px;top:370px;font-size:12px;font-weight:700;line-height:15px;color:#fff">Szczegóły alertu</div>
<div class="a" style="left:741px;top:523px;font-size:12.5px;line-height:17px;color:#454545;white-space:normal;width:240px">Днем 26 ноября (воскресенье) на отдельных участках дорог республики сохранится гололедица.</div>
<div class="a" style="left:1007px;top:357px;width:270px;height:141px;border-radius:8px;background:linear-gradient(135deg,#0c3a86,#0f3f8e 60%,#0b3a84)"></div>
<div class="a" style="left:1018px;top:370px;font-size:12px;font-weight:700;line-height:15px;color:#fff">Prognoza</div>
<svg class="a" style="left:1076px;top:372px" width="7" height="11" viewBox="0 0 7 11"><path d="M1.5 1l4 4.5-4 4.5" stroke="#fff" stroke-width="1.3" fill="none"/></svg>
<svg width="0" height="0" style="position:absolute"><defs><radialGradient id="sg" cx=".4" cy=".35" r=".7"><stop offset="0" stop-color="#ffd54a"/><stop offset="1" stop-color="#f39a12" stop-opacity="0"/></radialGradient></defs></svg>
<div class="a" style="left:1018px;top:395px;width:46px;height:94px;border-radius:5px;background:rgba(255,255,255,.09)"></div>
<div class="a" style="left:1018px;top:398px;width:46px;text-align:center;font-size:10.5px;font-weight:700;line-height:13px;color:#fff">Dzisiaj</div>
<svg class="a" style="left:1027px;top:418px" width="28" height="23" viewBox="0 0 24 20"><path d="M5 15c-2.5 0-4-1.4-4-3.3 0-1.8 1.4-3.2 3.3-3.4C5 5.5 7.4 3.5 10 3.5c2.4 0 4.3 1.5 5 3.6 2.6-.2 5 1.6 5 4.2 0 2.2-1.8 3.7-4.2 3.7z" fill="#e6edf8"/><path d="M5 15c-2.5 0-4-1.4-4-3.3h19c0 2.2-1.8 3.3-4.2 3.3z" fill="#b9cdef"/><g stroke="#3b7ff0" stroke-width=".9"><path d="M5 14.5v5M2.8 17h4.4M3.3 15.3l3.4 3.4M6.7 15.3l-3.4 3.4"/><path d="M14 13.5v5M11.8 16h4.4M12.3 14.3l3.4 3.4M15.7 14.3l-3.4 3.4"/></g></svg>
<div class="a" style="left:1018px;top:449px;width:46px;text-align:center;font-size:13.5px;line-height:16px;color:#fff">-1°</div>
<div class="a" style="left:1018px;top:470px;width:46px;text-align:center;font-size:13px;line-height:16px;color:#8da3c9">-8°</div>
<div class="a" style="left:1069px;top:395px;width:46px;height:94px;border-radius:5px;background:rgba(255,255,255,.09)"></div>
<div class="a" style="left:1069px;top:398px;width:46px;text-align:center;font-size:10.5px;font-weight:700;line-height:13px;color:#fff">pon.</div>
<svg class="a" style="left:1077px;top:417px" width="30" height="25" viewBox="0 0 26 22"><circle cx="13.5" cy="11.5" r="8" fill="#f29a14"/><circle cx="13.5" cy="11.5" r="8" fill="url(#sg)"/><path d="M3 9c-1.5 0-2.5-.9-2.5-2s.9-1.9 2-2c.4-1.6 1.8-2.7 3.4-2.7 1.5 0 2.7.9 3.1 2.2 1.6-.1 3 .9 3 2.4S10.8 9 9.3 9z" fill="#dfe8f7"/><path d="M14 21c-1.6 0-2.6-.9-2.6-2.1 0-1.1.9-2 2.1-2.1.5-1.6 1.9-2.8 3.6-2.8 1.5 0 2.8 1 3.2 2.3 1.7-.1 3.2 1 3.2 2.5 0 1.3-1.1 2.2-2.6 2.2z" fill="#e1eaf8"/></svg>
<div class="a" style="left:1069px;top:449px;width:46px;text-align:center;font-size:13.5px;line-height:16px;color:#fff">-4°</div>
<div class="a" style="left:1069px;top:470px;width:46px;text-align:center;font-size:13px;line-height:16px;color:#8da3c9">-7°</div>
<div class="a" style="left:1120px;top:395px;width:46px;height:94px;border-radius:5px;background:rgba(255,255,255,.09)"></div>
<div class="a" style="left:1120px;top:398px;width:46px;text-align:center;font-size:10.5px;font-weight:700;line-height:13px;color:#fff">wt.</div>
<svg class="a" style="left:1129px;top:418px" width="28" height="23" viewBox="0 0 24 20"><circle cx="17" cy="6" r="5.2" fill="#f7a21b"/><circle cx="17" cy="6" r="5.2" fill="url(#sg)"/><path d="M5 15c-2.5 0-4-1.4-4-3.3 0-1.8 1.4-3.2 3.3-3.4C5 5.5 7.4 3.5 10 3.5c2.4 0 4.3 1.5 5 3.6 2.6-.2 5 1.6 5 4.2 0 2.2-1.8 3.7-4.2 3.7z" fill="#e6edf8"/><path d="M5 15c-2.5 0-4-1.4-4-3.3h19c0 2.2-1.8 3.3-4.2 3.3z" fill="#b9cdef"/><g stroke="#3b7ff0" stroke-width=".9"><path d="M5 14.5v5M2.8 17h4.4M3.3 15.3l3.4 3.4M6.7 15.3l-3.4 3.4"/><path d="M14 13.5v5M11.8 16h4.4M12.3 14.3l3.4 3.4M15.7 14.3l-3.4 3.4"/></g></svg>
<div class="a" style="left:1120px;top:449px;width:46px;text-align:center;font-size:13.5px;line-height:16px;color:#fff">-3°</div>
<div class="a" style="left:1120px;top:470px;width:46px;text-align:center;font-size:13px;line-height:16px;color:#8da3c9">-4°</div>
<div class="a" style="left:1171px;top:395px;width:46px;height:94px;border-radius:5px;background:rgba(255,255,255,.09)"></div>
<div class="a" style="left:1171px;top:398px;width:46px;text-align:center;font-size:10.5px;font-weight:700;line-height:13px;color:#fff">śr.</div>
<svg class="a" style="left:1180px;top:418px" width="28" height="23" viewBox="0 0 24 20"><circle cx="17" cy="6" r="5.2" fill="#f7a21b"/><circle cx="17" cy="6" r="5.2" fill="url(#sg)"/><path d="M5 15c-2.5 0-4-1.4-4-3.3 0-1.8 1.4-3.2 3.3-3.4C5 5.5 7.4 3.5 10 3.5c2.4 0 4.3 1.5 5 3.6 2.6-.2 5 1.6 5 4.2 0 2.2-1.8 3.7-4.2 3.7z" fill="#e6edf8"/><path d="M5 15c-2.5 0-4-1.4-4-3.3h19c0 2.2-1.8 3.3-4.2 3.3z" fill="#b9cdef"/><g stroke="#3b7ff0" stroke-width=".9"><path d="M5 14.5v5M2.8 17h4.4M3.3 15.3l3.4 3.4M6.7 15.3l-3.4 3.4"/><path d="M14 13.5v5M11.8 16h4.4M12.3 14.3l3.4 3.4M15.7 14.3l-3.4 3.4"/></g></svg>
<div class="a" style="left:1171px;top:449px;width:46px;text-align:center;font-size:13.5px;line-height:16px;color:#fff">-3°</div>
<div class="a" style="left:1171px;top:470px;width:46px;text-align:center;font-size:13px;line-height:16px;color:#8da3c9">-7°</div>
<div class="a" style="left:1240px;top:422px;width:22px;height:22px;border-radius:50%;background:rgba(255,255,255,.12)"></div>
<svg class="a" style="left:1248px;top:428px" width="6" height="10" viewBox="0 0 6 10"><path d="M1 1l4 4-4 4" stroke="#fff" stroke-width="1.2" fill="none"/></svg>
<div class="a" style="left:1230px;top:447px;width:41px;text-align:center;font-size:10.7px;line-height:13px;color:#fff">Więcej</div>
<div class="a" style="left:1007px;top:505px;width:270px;height:141px;border-radius:8px;overflow:hidden;background:#4a4a2a"><svg width="270" height="141" viewBox="0 0 270 141"><defs><filter id="tb" x="-20%" y="-20%" width="140%" height="140%"><feGaussianBlur stdDeviation="6"/></filter><linearGradient id="tdark" x1="0" y1="0" x2="1" y2="0"><stop offset="0" stop-color="#000" stop-opacity=".3"/><stop offset=".55" stop-color="#000" stop-opacity="0"/></linearGradient></defs>
<g filter="url(#tb)">
<rect x="-20" y="-20" width="310" height="181" fill="#4e5028"/>
<ellipse cx="40" cy="25" rx="70" ry="35" fill="#28343c"/>
<ellipse cx="140" cy="20" rx="45" ry="28" fill="#4e2c60"/>
<ellipse cx="220" cy="25" rx="60" ry="30" fill="#5ca898"/>
<ellipse cx="255" cy="28" rx="20" ry="16" fill="#8a5a98"/>
<ellipse cx="170" cy="25" rx="18" ry="20" fill="#6a4a80"/>
<ellipse cx="115" cy="70" rx="70" ry="28" fill="#3e5858"/>
<ellipse cx="225" cy="65" rx="55" ry="18" fill="#5a9a5a"/>
<ellipse cx="235" cy="86" rx="60" ry="13" fill="#9ab430"/>
<ellipse cx="220" cy="108" rx="70" ry="20" fill="#ecc010"/>
<ellipse cx="225" cy="138" rx="80" ry="26" fill="#ec7a0c"/>
<ellipse cx="150" cy="125" rx="40" ry="20" fill="#b86a10"/>
<ellipse cx="50" cy="125" rx="80" ry="30" fill="#3e2a10"/>
<ellipse cx="20" cy="70" rx="30" ry="30" fill="#505020"/>
</g>
<rect width="270" height="141" fill="url(#tdark)"/>
</svg></div>
<div class="a" style="left:1018px;top:518px;font-size:12px;font-weight:700;line-height:15px;color:#fff">Powiązane mapy</div>
<svg class="a" style="left:1117px;top:520px" width="7" height="11" viewBox="0 0 7 11"><path d="M1.5 1l4 4.5-4 4.5" stroke="#fff" stroke-width="1.3" fill="none"/></svg>
<div class="a" style="left:1018px;top:602px;font-size:13.8px;font-weight:700;line-height:17px;color:#fff">Temperatura</div>
<div class="a" style="left:1018px;top:620px;font-size:10.8px;line-height:13px;color:#e8e8e8">Sprawdź ostatnią temperaturę w pobliżu</div>
<div class="a" style="left:1007px;top:654px;width:270px;height:167px;border-radius:8px;background:#378454"></div>
<div class="a" style="left:1018px;top:666px;font-size:12px;font-weight:700;line-height:15px;color:#fff">Wiadomości</div>
<div class="a" style="left:1018px;top:697px;font-size:11.9px;font-weight:700;line-height:14px;color:#fff">Sypnęło śniegiem na<br>Podkarpaciu. Trudne warunki na...</div>
<div class="a" style="left:1018px;top:729px;width:13px;height:13px;background:#f4f4f4"><i style="position:absolute;left:3px;top:3px;width:7px;height:7px;background:#e0212b"></i></div>
<div class="a" style="left:1038px;top:729px;font-size:10.6px;line-height:13px;color:#b8d4c3">Nowiny · wczoraj o 10:20</div>
<div class="a" style="left:1220px;top:697px;width:46px;height:46px;border-radius:3px;overflow:hidden;background:linear-gradient(90deg,#c8ccd0 0%,#e8eaec 30%,#6d8fb8 55%,#bcd0e4 70%,#7b8794 100%)"><div style="position:absolute;left:14px;top:10px;width:18px;height:28px;background:#e8eef4;border:2px solid #4a5d78"></div></div>
<div class="a" style="left:1018px;top:762px;font-size:11.9px;font-weight:700;line-height:14px;color:#fff">Bluza z KiK umili lodowate<br>miesiące. Tania i puszysta, o...</div>
<svg class="a" style="left:1018px;top:794px" width="13" height="13" viewBox="0 0 13 13"><g fill="#e0212b"><circle cx="2" cy="2" r="1.5"/><circle cx="6.5" cy="2" r="1.5"/><circle cx="11" cy="2" r="1.5"/><circle cx="2" cy="6.5" r="1.5"/><circle cx="6.5" cy="6.5" r="1.5"/><circle cx="11" cy="6.5" r="1.5"/><circle cx="2" cy="11" r="1.5"/><circle cx="6.5" cy="11" r="1.5"/><circle cx="11" cy="11" r="1.5"/></g></svg>
<div class="a" style="left:1038px;top:794px;font-size:10.6px;line-height:13px;color:#b8d4c3">Gazeta.pl · wczoraj o 09:40</div>
<div class="a" style="left:1220px;top:762px;width:46px;height:47px;border-radius:3px;overflow:hidden;background:linear-gradient(180deg,#e6e6e6 0%,#d0d0d0 20%,#b7bcc2 55%,#a05a4a 78%,#e2c6b0 100%)"><div style="position:absolute;left:14px;top:14px;color:#d11a2a;font:bold italic 13px/14px 'Liberation Sans'">kik</div></div>
<div class="a" style="left:305px;top:222px;width:343px;height:36px;border-radius:8px;background:#fff;box-shadow:0 1px 3px rgba(0,0,0,.12)"></div>
<div class="a" style="left:654px;top:222px;width:172px;height:36px;border-radius:8px;background:#fff;box-shadow:0 1px 3px rgba(0,0,0,.12)"></div>
<div class="a" style="left:832px;top:222px;width:36px;height:36px;border-radius:8px;background:#fff;box-shadow:0 1px 3px rgba(0,0,0,.12)"></div>
<div class="a" style="left:690px;top:224px;width:32px;height:32px;border-radius:5px;background:#fcc92e"></div>
<svg class="a" style="left:312.9px;top:229px" width="20" height="20" viewBox="0 0 20 20"><path d="M8.3 12.5V3.5a1.7 1.7 0 0 1 3.4 0v9a3.2 3.2 0 1 1-3.4 0z" fill="none" stroke="#333" stroke-width="1.2" stroke-linecap="round" stroke-linejoin="round"/><circle cx="10" cy="15" r="1.3" fill="#333"/><path d="M10 7v8" stroke="#333" stroke-width="1"/></svg>
<svg class="a" style="left:346.9px;top:229px" width="20" height="20" viewBox="0 0 20 20"><path d="M10 2.5c-3 4.3-5 7.5-5 10.3a5 5 0 0 0 10 0c0-2.8-2-6-5-10.3z" fill="none" stroke="#333" stroke-width="1.2" stroke-linecap="round" stroke-linejoin="round"/></svg>
<svg class="a" style="left:381.1px;top:229px" width="20" height="20" viewBox="0 0 20 20"><path d="M17 4.5L10 11" fill="none" stroke="#333" stroke-width="1.2" stroke-linecap="round" stroke-linejoin="round"/><path d="M15.5 15.5A7.5 7.5 0 1 1 12.5 3" fill="none" stroke="#333" stroke-width="1.2" stroke-linecap="round" stroke-linejoin="round"/><path d="M13.2 13.2A4.3 4.3 0 1 1 11.5 5.8" fill="none" stroke="#333" stroke-width="1.2" stroke-linecap="round" stroke-linejoin="round"/><path d="M11 12a1.5 1.5 0 1 1 .5-2.6" fill="none" stroke="#333" stroke-width="1.2" stroke-linecap="round" stroke-linejoin="round"/></svg>
<svg class="a" style="left:415.1px;top:229px" width="20" height="20" viewBox="0 0 20 20"><path d="M1.5 9h12a2.5 2.5 0 1 0-2.5-2.5" fill="none" stroke="#333" stroke-width="1.2" stroke-linecap="round" stroke-linejoin="round"/><path d="M1.5 11.5h15a2 2 0 1 1-2 2" fill="none" stroke="#333" stroke-width="1.2" stroke-linecap="round" stroke-linejoin="round"/><path d="M3 14h7" fill="none" stroke="#333" stroke-width="1.2" stroke-linecap="round" stroke-linejoin="round"/></svg>
<svg class="a" style="left:449.0px;top:229px" width="20" height="20" viewBox="0 0 20 20"><path d="M5.5 15.5a3.5 3.5 0 0 1-.5-7 4.5 4.5 0 0 1 8.5-1 3.6 3.6 0 0 1 3.5 4.3 2.2 2.2 0 0 1 .5 3.7z" fill="none" stroke="#333" stroke-width="1.2" stroke-linecap="round" stroke-linejoin="round"/><path d="M5 8.5a3.5 3.5 0 0 1 6-3.8" fill="none" stroke="#333" stroke-width="1.2" stroke-linecap="round" stroke-linejoin="round"/></svg>
<svg class="a" style="left:484.0px;top:229px" width="20" height="20" viewBox="0 0 20 20"><path d="M2.5 2v16M2.5 3h2M2.5 7h2M2.5 11h2M2.5 15h2M2.5 18h2" fill="none" stroke="#333" stroke-width="1.2" stroke-linecap="round" stroke-linejoin="round"/><path d="M12.5 3c-2.5 3.8-4.3 6.5-4.3 9a4.3 4.3 0 0 0 8.6 0c0-2.5-1.8-5.2-4.3-9z" fill="none" stroke="#333" stroke-width="1.2" stroke-linecap="round" stroke-linejoin="round"/></svg>
<svg class="a" style="left:518.2px;top:229px" width="20" height="20" viewBox="0 0 20 20"><path d="M1.5 10s3.2-5 8.5-5 8.5 5 8.5 5-3.2 5-8.5 5-8.5-5-8.5-5z" fill="none" stroke="#333" stroke-width="1.2" stroke-linecap="round" stroke-linejoin="round"/><circle cx="10" cy="10" r="2.5" fill="none" stroke="#333" stroke-width="1.2" stroke-linecap="round" stroke-linejoin="round"/><circle cx="10" cy="10" r="1" fill="#333"/></svg>
<svg class="a" style="left:552.0px;top:229px" width="20" height="20" viewBox="0 0 20 20"><circle cx="10" cy="10" r="8.5" fill="none" stroke="#333" stroke-width="1.2" stroke-linecap="round" stroke-linejoin="round"/><path d="M5.5 15A6.2 6.2 0 1 1 14.5 15" fill="none" stroke="#333" stroke-width="1.2" stroke-linecap="round" stroke-linejoin="round"/><path d="M10 5v5.5" fill="none" stroke="#333" stroke-width="1.2" stroke-linecap="round" stroke-linejoin="round"/><circle cx="10" cy="10.5" r="1" fill="#333"/></svg>
<svg class="a" style="left:585.9px;top:229px" width="20" height="20" viewBox="0 0 20 20"><path d="M10 2c-2.6 2.5-4 5-4 7.5a4 4 0 0 0 8 0C14 7 12.6 4.5 10 2z" fill="none" stroke="#333" stroke-width="1.2" stroke-linecap="round" stroke-linejoin="round"/><path d="M10 8v10" fill="none" stroke="#333" stroke-width="1.2" stroke-linecap="round" stroke-linejoin="round"/></svg>
<svg class="a" style="left:619.8px;top:229px" width="20" height="20" viewBox="0 0 20 20"><path d="M8 2.5h6.5a2 2 0 0 1 2 2v11a2 2 0 0 1-2 2H8" fill="none" stroke="#333" stroke-width="1.2" stroke-linecap="round" stroke-linejoin="round"/><path d="M1.5 6h6c2 0 2.5 1.5 5 1.5s3-.8 5-.8M1.5 9.5h6c2 0 2.5 1.5 5 1.5s3-.8 5-.8M1.5 13h6c2 0 2.5 1.5 5 1.5s3-.8 5-.8" fill="none" stroke="#333" stroke-width="1.2" stroke-linecap="round" stroke-linejoin="round"/></svg>
<svg class="a" style="left:662.1px;top:229px" width="20" height="20" viewBox="0 0 20 20"><circle cx="10" cy="10" r="1.8" fill="none" stroke="#333" stroke-width="1.2" stroke-linecap="round" stroke-linejoin="round"/><path d="M16 3c-1 .2-2 .5-2.8 1A6 6 0 0 0 5 14.5c-.4.9-1 1.8-2 2.5" fill="none" stroke="#333" stroke-width="1.2" stroke-linecap="round" stroke-linejoin="round"/><path d="M4 17c1-.2 2-.5 2.8-1A6 6 0 0 0 15 5.5" fill="none" stroke="#333" stroke-width="1.2" stroke-linecap="round" stroke-linejoin="round"/></svg>
<svg class="a" style="left:696.1px;top:229px" width="20" height="20" viewBox="0 0 20 20"><g fill="none" stroke="#333" stroke-width="1.3" stroke-linecap="round"><path d="M5.5 3v6M2.5 6h6M3.4 3.9l4.2 4.2M7.6 3.9L3.4 8.1"/><path d="M14.5 2v4M12.5 4h4M13.1 2.6l2.8 2.8M15.9 2.6l-2.8 2.8"/><path d="M12 10v7M8.5 13.5h7M9.5 11l5 5M14.5 11l-5 5"/></g></svg>
<svg class="a" style="left:729.8px;top:229px" width="20" height="20" viewBox="0 0 20 20"><path d="M10 2.5L18.5 17.5H1.5z" fill="none" stroke="#333" stroke-width="1.2" stroke-linecap="round" stroke-linejoin="round"/><path d="M10 8v5" fill="none" stroke="#333" stroke-width="1.2" stroke-linecap="round" stroke-linejoin="round"/><circle cx="10" cy="15.2" r=".7" fill="#333"/></svg>
<svg class="a" style="left:764.1px;top:229px" width="20" height="20" viewBox="0 0 20 20"><path d="M11.5 1.5L5 11h4.5l-1.5 7.5L15 8.5h-4.5z" fill="none" stroke="#333" stroke-width="1.2" stroke-linecap="round" stroke-linejoin="round"/></svg>
<svg class="a" style="left:797.8px;top:229px" width="20" height="20" viewBox="0 0 20 20"><path d="M3.5 9.5h13c0 3-2.5 5-4.5 5.5v3h-3v-3C6.5 14.5 3.5 12.5 3.5 9.5z" fill="none" stroke="#333" stroke-width="1.2" stroke-linecap="round" stroke-linejoin="round"/><path d="M3.5 9.5c0-1.5 1-2.5 2.3-2.5M16.5 9.5c0-1.5-1-2.5-2.3-2.5" fill="none" stroke="#333" stroke-width="1.2" stroke-linecap="round" stroke-linejoin="round"/><circle cx="6" cy="4.5" r="1.1" fill="none" stroke="#333" stroke-width="1.2" stroke-linecap="round" stroke-linejoin="round"/><circle cx="10" cy="2.5" r="1.1" fill="none" stroke="#333" stroke-width="1.2" stroke-linecap="round" stroke-linejoin="round"/><circle cx="14" cy="4.5" r="1.1" fill="none" stroke="#333" stroke-width="1.2" stroke-linecap="round" stroke-linejoin="round"/></svg>
<svg class="a" style="left:839.6px;top:229px" width="20" height="20" viewBox="0 0 20 20"><path d="M10 2v16M10 8L5.5 5M10 8l4.5-3M10 13l-6-3M10 13l6-3" fill="none" stroke="#333" stroke-width="1.2" stroke-linecap="round" stroke-linejoin="round"/><circle cx="10" cy="2" r="1" fill="none" stroke="#333" stroke-width="1.2" stroke-linecap="round" stroke-linejoin="round"/><circle cx="5" cy="4.8" r="1" fill="none" stroke="#333" stroke-width="1.2" stroke-linecap="round" stroke-linejoin="round"/><circle cx="15" cy="4.8" r="1" fill="none" stroke="#333" stroke-width="1.2" stroke-linecap="round" stroke-linejoin="round"/><circle cx="3.5" cy="9.5" r="1" fill="none" stroke="#333" stroke-width="1.2" stroke-linecap="round" stroke-linejoin="round"/><circle cx="16.5" cy="9.5" r="1" fill="none" stroke="#333" stroke-width="1.2" stroke-linecap="round" stroke-linejoin="round"/></svg>
<div class="a" style="left:293px;top:626px;width:23px;height:36px;background:#f6f6f6;border-radius:0 5px 5px 0"></div>
<div class="a" style="left:302px;top:639px;width:0;height:0;border-right:6px solid #333;border-top:5px solid transparent;border-bottom:5px solid transparent"></div>
<div class="a" style="left:1632px;top:222px;width:270px;height:29px;border-radius:15px;background:#fff;box-shadow:0 1px 3px rgba(0,0,0,.12)"></div>
<div class="a" style="left:1646px;top:229px;font-size:12.1px;line-height:16px;color:#555">Pelishchenskiy sel'skiy sovet, Ob...</div>
<svg class="a" style="left:1869px;top:229px" width="15" height="15" viewBox="0 0 15 15"><circle cx="6" cy="6" r="4.5" fill="none" stroke="#666" stroke-width="1.3"/><path d="M9.5 9.5l4 4" stroke="#666" stroke-width="1.3" stroke-linecap="round"/></svg>
<div class="a" style="left:1873px;top:272px;width:29px;height:29px;border-radius:3px;background:#fff;box-shadow:0 1px 3px rgba(0,0,0,.15)"></div>
<svg class="a" style="left:1879px;top:278px" width="17" height="17" viewBox="0 0 17 17"><path d="M2.5 14.5l12-12M9.5 2.5h5v5M2.5 9.5v5h5" fill="none" stroke="#333" stroke-width="1.3"/></svg>
<div class="a" style="left:1873px;top:312px;width:29px;height:58px;border-radius:3px;background:#fff;box-shadow:0 1px 3px rgba(0,0,0,.15)"></div>
<div class="a" style="left:1873px;top:341px;width:29px;height:1px;background:#e2e2e2"></div>
<svg class="a" style="left:1880px;top:319px" width="15" height="15" viewBox="0 0 15 15"><path d="M7.5 1v13M1 7.5h13" stroke="#444" stroke-width="1.3"/></svg>
<div class="a" style="left:1881px;top:356px;width:13px;height:1.3px;background:#444"></div>
<div class="a" style="left:1849px;top:500px;width:67px;height:67px;border-radius:34px 0 0 34px;background:#242424;box-shadow:0 4px 8px rgba(0,0,0,.2)"></div>
<div class="a" style="left:1854px;top:505px;width:57px;height:57px;border-radius:50%;background:radial-gradient(circle at 50% 50%,#3c4448 55%,#5a6a74 100%)"></div><div class="a" style="left:1898px;top:518px;width:5px;height:10px;border-radius:50%;background:rgba(255,255,255,.25);transform:rotate(-35deg)"></div>
<div class="a" style="left:1873px;top:528px;width:18px;height:11px;border-radius:50% 50% 45% 45%;background:radial-gradient(ellipse at 60% 60%,#8a5a56,#6a3834)"></div>
<div class="a" style="left:1887px;top:524px;width:3px;height:5px;background:#8fd04a;transform:rotate(30deg)"></div>
<div class="a" style="left:305px;top:964px;width:72px;height:24px;border-radius:5px;background:#fdd02f;box-shadow:0 1px 2px rgba(0,0,0,.12)"></div>
<div class="a" style="left:305px;top:964px;width:72px;height:24px;text-align:center;font-size:12.5px;line-height:24px;color:#4d3c08">4 Godziny</div>
<div class="a" style="left:384px;top:964px;width:48px;height:24px;border-radius:5px;background:#fff;box-shadow:0 1px 2px rgba(0,0,0,.12)"></div>
<div class="a" style="left:384px;top:964px;width:48px;height:24px;text-align:center;font-size:12.5px;line-height:24px;color:#222">10 Dni</div>
<div class="a" style="left:344px;top:1044px;width:552px;height:4px;background:#fdd02f"></div>
<div class="a" style="left:896px;top:1044px;width:983px;height:4px;background:#5e5e5e"></div>
<div class="a" style="left:895px;top:1044px;width:3px;height:4px;background:#8a5a3a"></div>
<div class="a" style="left:305px;top:1033px;width:28px;height:28px;border-radius:50%;background:#fdd02f"></div>
<div class="a" style="left:315px;top:1040px;width:0;height:0;border-left:9px solid #5a5a5a;border-top:6px solid transparent;border-bottom:6px solid transparent"></div>
<div class="a" style="left:378.8px;top:1048px;width:1.5px;height:26px;background:#111"></div>
<div class="a" style="left:390.0px;top:1055px;font-size:11.5px;line-height:15px;color:#222">19:00</div>
<div class="a" style="left:516.6px;top:1048px;width:1.5px;height:26px;background:#111"></div>
<div class="a" style="left:527.9px;top:1055px;font-size:11.5px;line-height:15px;color:#222">19:30</div>
<div class="a" style="left:636.9px;top:1048px;width:1.5px;height:26px;background:#111"></div>
<div class="a" style="left:648.1px;top:1055px;font-size:11.5px;line-height:15px;color:#222">20:00</div>
<div class="a" style="left:774.9px;top:1048px;width:1.5px;height:26px;background:#111"></div>
<div class="a" style="left:786.1px;top:1055px;font-size:11.5px;line-height:15px;color:#222">20:30</div>
<div class="a" style="left:895.5px;top:1048px;width:1.5px;height:26px;background:#111"></div>
<div class="a" style="left:906.3px;top:1054px;font-size:14px;font-weight:700;line-height:16px;color:#111">21:00</div>
<div class="a" style="left:1033.8px;top:1048px;width:1.5px;height:26px;background:#111"></div>
<div class="a" style="left:1045.0px;top:1055px;font-size:11.5px;line-height:15px;color:#222">21:30</div>
<div class="a" style="left:1155.0px;top:1048px;width:1.5px;height:26px;background:#111"></div>
<div class="a" style="left:1166.2px;top:1055px;font-size:11.5px;line-height:15px;color:#222">22:00</div>
<div class="a" style="left:1292.2px;top:1048px;width:1.5px;height:26px;background:#111"></div>
<div class="a" style="left:1303.5px;top:1055px;font-size:11.5px;line-height:15px;color:#222">22:30</div>
<div class="a" style="left:1412.8px;top:1048px;width:1.5px;height:26px;background:#111"></div>
<div class="a" style="left:1424.0px;top:1055px;font-size:11.5px;line-height:15px;color:#222">23:00</div>
<div class="a" style="left:1551.2px;top:1048px;width:1.5px;height:26px;background:#111"></div>
<div class="a" style="left:1562.5px;top:1055px;font-size:11.5px;line-height:15px;color:#222">23:30</div>
<div class="a" style="left:1671.2px;top:1048px;width:1.5px;height:26px;background:#111"></div>
<div class="a" style="left:1682.5px;top:1055px;font-size:11.5px;line-height:15px;color:#222">00:00 pon.</div>
<div class="a" style="left:1809.0px;top:1048px;width:1.5px;height:26px;background:#111"></div>
<div class="a" style="left:869px;top:1015px;width:53px;height:22px;border-radius:11px;background:#fdd02f"></div>
<div class="a" style="left:890px;top:1035px;width:0;height:0;border-top:8px solid #fdd02f;border-left:6px solid transparent;border-right:6px solid transparent"></div>
<div class="a" style="left:869px;top:1015px;width:53px;height:22px;text-align:center;font-size:10.3px;line-height:22px;color:#6b5310">TERAZ</div>
<div class="a" style="left:1064px;top:1015px;width:48px;height:22px;border-radius:11px;background:#727272"></div>
<div class="a" style="left:1082px;top:1035px;width:0;height:0;border-top:8px solid #727272;border-left:6px solid transparent;border-right:6px solid transparent"></div>
<div class="a" style="left:1064px;top:1015px;width:48px;height:22px;text-align:center;font-size:11.5px;line-height:22px;color:#fff">21:45</div>
<div class="a" style="left:1829px;top:944px;width:73px;height:28px;background:#fff"></div>
<svg class="a" style="left:1838px;top:954px" width="11" height="10" viewBox="0 0 11 10"><path d="M0 0h11v7H6l-2 2.5V7H0z" fill="#222"/><path d="M2 2.3h7M2 4.5h5" stroke="#fff" stroke-width=".8"/></svg>
<div class="a" style="left:1856px;top:951px;font-size:11.8px;line-height:15px;color:#111">Opinie</div>
<div class="a" style="left:1620px;top:980px;width:70px;height:12px;background:#3561de;border-radius:6px 0 0 6px;color:#fff;text-align:center;font-size:9.6px;line-height:12px">Umiarkowane</div>
<div class="a" style="left:1690px;top:980px;width:70px;height:12px;background:#f0c40f;color:#fff;text-align:center;font-size:9.6px;line-height:12px">Średnie</div>
<div class="a" style="left:1760px;top:980px;width:70px;height:12px;background:#e67e22;color:#fff;text-align:center;font-size:9.6px;line-height:12px">Poważne</div>
<div class="a" style="left:1830px;top:980px;width:71px;height:12px;background:#e74c3c;border-radius:0 6px 6px 0;color:#fff;text-align:center;font-size:9.6px;line-height:12px">Ekstremalne</div>
<div class="a" style="left:1620px;top:999px;width:94px;height:12px;background:#7990b8;border-radius:6px 0 0 6px;color:#fff;text-align:center;font-size:9.6px;line-height:12px">Słaby</div>
<div class="a" style="left:1714px;top:999px;width:93px;height:12px;background:#4b6485;color:#fff;text-align:center;font-size:9.6px;line-height:12px">Średnie</div>
<div class="a" style="left:1807px;top:999px;width:94px;height:12px;background:#2e2e2e;border-radius:0 6px 6px 0;color:#fff;text-align:center;font-size:9.6px;line-height:12px">Silny</div>
<div class="a" style="left:1659px;top:1023px;font-size:8.15px;line-height:11px;color:#333">© 2023 TomTom, © 2023 Microsoft Corporation|&nbsp; Dostawcy danych</div>
<div class="a" style="left:0;top:1077px;width:1920px;height:3px;background:#1f1f1f"></div>
<div class="a" style="left:48px;top:1077px;width:287px;height:3px;background:#e8e8e8"></div>
</body></html>
